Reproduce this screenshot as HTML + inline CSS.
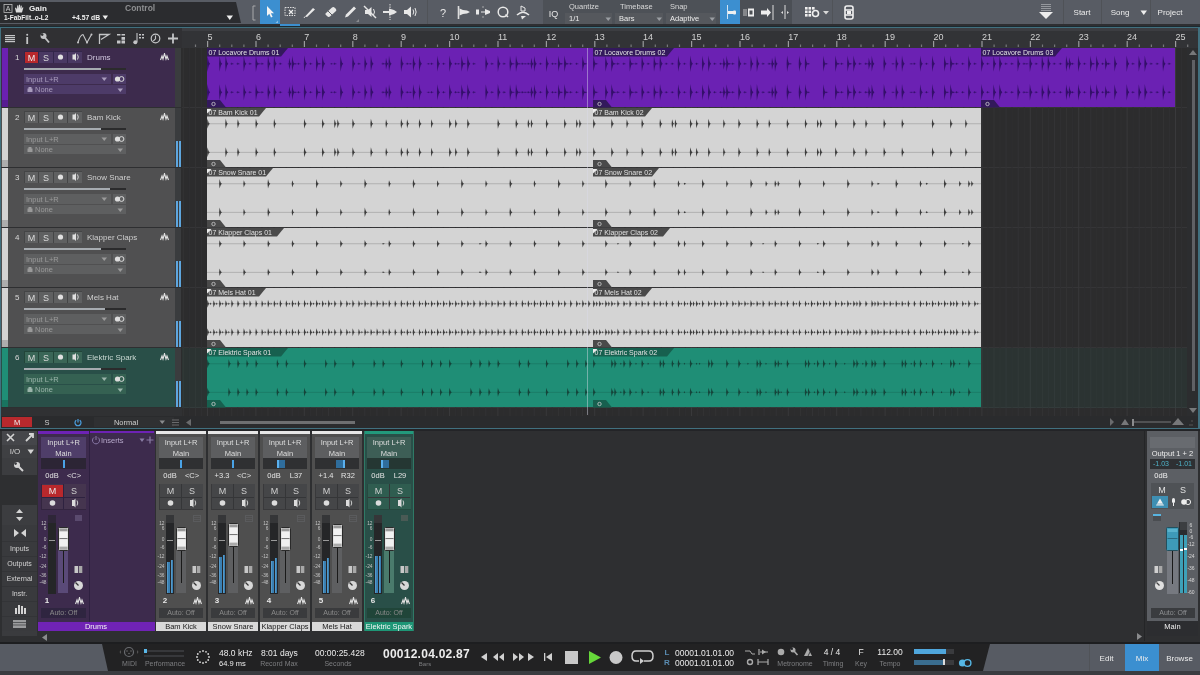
<!DOCTYPE html><html><head><meta charset="utf-8"><style>
html,body{margin:0;padding:0;}
body{width:1200px;height:675px;overflow:hidden;position:relative;background:#2a2b2d;font-family:"Liberation Sans",sans-serif;}
#r>div{position:absolute;box-sizing:border-box;}
</style></head><body><div id="r" style="position:absolute;left:0;top:0;width:1200px;height:675px;overflow:hidden;will-change:transform;">
<div style="left:0px;top:0px;width:1200px;height:25px;background:#585c64;"></div>
<div style="left:543px;top:0px;width:177px;height:24px;background:#4d5157;"></div>
<div style="left:740px;top:0px;width:52px;height:24px;background:#4b4f55;"></div>
<svg style="position:absolute;left:0px;top:0px" width="245" height="25" viewBox="0 0 245 25"><polygon points="0,2 236,2 241,23 0,23" fill="#2b2c2f"/></svg>
<div style="left:0px;top:24px;width:1200px;height:2px;background:#2e2f32;"></div>
<div style="left:0px;top:26px;width:1200px;height:1px;background:#1d2a30;"></div>
<svg style="position:absolute;left:3px;top:4px" width="24" height="10" viewBox="0 0 24 10"><rect x="1" y="0.5" width="8" height="8" fill="none" stroke="#bbb" stroke-width="0.8"/><text x="5" y="7.3" font-size="7" fill="#ccc" text-anchor="middle" font-family="Liberation Sans">A</text><path d="M13,8.5 L12,4 L13,3.5 L14,5.5 L14.2,1.5 L15.2,1.3 L15.6,4.5 L16,0.8 L17,0.8 L17.2,4.5 L17.8,1.5 L18.8,1.8 L18.6,5 L19.6,3.2 L20.4,3.6 L19,8.5 Z" fill="#ddd"/></svg>
<div style="left:29px;top:0.5px;height:16px;line-height:16px;font-size:8px;color:#f2f2f2;font-weight:bold;white-space:nowrap;">Gain</div>
<div style="left:125px;top:0.0px;height:17.0px;line-height:17.0px;font-size:8.5px;color:#8d8e90;font-weight:bold;white-space:nowrap;">Control</div>
<div style="left:4px;top:11.0px;height:13.0px;line-height:13.0px;font-size:6.5px;color:#f0f0f0;font-weight:bold;white-space:nowrap;">1-FabFilt..o-L2</div>
<div style="left:72px;top:10.7px;height:13.6px;line-height:13.6px;font-size:6.8px;color:#f0f0f0;font-weight:bold;white-space:nowrap;">+4.57 dB</div>
<svg style="position:absolute;left:101.5px;top:15px" width="7" height="6" viewBox="0 0 7 6"><polygon points="0.5,0.5 6,0.5 3.25,4.5" fill="#eee"/></svg>
<svg style="position:absolute;left:226px;top:15px" width="8" height="6" viewBox="0 0 8 6"><polygon points="0.5,0.5 7,0.5 3.75,5" fill="#eee"/></svg>
<svg style="position:absolute;left:251px;top:5px" width="6" height="16" viewBox="0 0 6 16"><path d="M4.5,1 L2,1 L2,15 L4.5,15" fill="none" stroke="#a8a9ab" stroke-width="1"/></svg>
<div style="left:260px;top:0px;width:20px;height:24px;background:#3c8fd0;"></div>
<svg style="position:absolute;left:260px;top:0px" width="20" height="24" viewBox="0 0 20 24"><path d="M7,6 L7,16 L9.3,13.8 L11,17.5 L12.6,16.8 L10.9,13.2 L14,13.2 Z" fill="#f4f4f4"/><polygon points="18,20.5 18,23 15.5,23" fill="#8cc0e8"/></svg>
<div style="left:280px;top:24px;width:20px;height:2px;background:#3c8fd0;"></div>
<svg style="position:absolute;left:280px;top:0px" width="20" height="24" viewBox="0 0 20 24"><rect x="5" y="7.5" width="10" height="8" fill="none" stroke="#ddd" stroke-width="1" stroke-dasharray="1.5,1"/><path d="M9,10 L13,14 M13,10 L9,14" stroke="#eee" stroke-width="1.2"/></svg>
<svg style="position:absolute;left:300px;top:0px" width="20" height="24" viewBox="0 0 20 24"><path d="M5,16.5 L13,8 L15,9.5 L7,17 Z" fill="#e8e8e8"/><path d="M5,16.5 L4,18" stroke="#ddd" stroke-width="1"/></svg>
<svg style="position:absolute;left:320px;top:0px" width="20" height="24" viewBox="0 0 20 24"><path d="M6,13 L12,7.5 Q13.5,6.5 15,8 L16,9 Q17,10.5 15.5,11.5 L10,16.5 Q8.5,17.5 7,16 L5.5,14.5 Q5,13.8 6,13 Z" fill="#e6e6e6"/><path d="M8,11 L12,15" stroke="#5a5d62" stroke-width="1"/></svg>
<svg style="position:absolute;left:340px;top:0px" width="20" height="24" viewBox="0 0 20 24"><path d="M5,17.5 L6,14.5 L14,6.5 L16,8.5 L8,16.5 Z" fill="#e8e8e8"/><polygon points="19,19 19,22 16,22" fill="#8a8c90"/></svg>
<svg style="position:absolute;left:360px;top:0px" width="20" height="24" viewBox="0 0 20 24"><path d="M5,10 L8,10 L11.5,7 L11.5,17 L8,14 L5,14 Z" fill="#e6e6e6"/><path d="M4,6 L16,18" stroke="#e6e6e6" stroke-width="1.4"/><path d="M13.5,9 Q15.5,12 13.5,15" stroke="#e6e6e6" fill="none" stroke-width="1"/></svg>
<svg style="position:absolute;left:380px;top:0px" width="20" height="24" viewBox="0 0 20 24"><path d="M10,4 L10,20" stroke="#ddd" stroke-width="1" stroke-dasharray="1.5,1"/><path d="M3,11 L9,11 L9,8.5 L14,10 L17,12 L14,14 L9,15.5 L9,13 L3,13 Z" fill="#e6e6e6"/></svg>
<svg style="position:absolute;left:400px;top:0px" width="20" height="24" viewBox="0 0 20 24"><path d="M4,10 L7,10 L11,6.5 L11,17.5 L7,14 L4,14 Z" fill="#e8e8e8"/><path d="M13,9.5 Q14.5,12 13,14.5 M15,8 Q17.3,12 15,16" stroke="#e8e8e8" fill="none" stroke-width="1"/></svg>
<div style="left:427px;top:0px;width:1px;height:24px;background:#505358;"></div>
<div style="left:437.0px;width:12px;text-align:center;top:2px;height:22px;line-height:22px;font-size:11px;color:#e8e8e8;font-weight:normal;white-space:nowrap;">?</div>
<svg style="position:absolute;left:453px;top:0px" width="20" height="24" viewBox="0 0 20 24"><path d="M5.5,6 L5.5,19" stroke="#ddd" stroke-width="1.6"/><path d="M6.5,8.5 L10,10 L14,10.5 L17,12 L14,13.5 L10,14 L6.5,15.5 Z" fill="#e8e8e8"/></svg>
<svg style="position:absolute;left:473px;top:0px" width="20" height="24" viewBox="0 0 20 24"><path d="M3,9.5 L3,14.5 L6,14.5 L6,9.5 Z M8,11.5 L12,11.5 L12,12.5 L8,12.5 Z M12,9 L17,11 L17,13 L12,15 Z" fill="#e8e8e8"/><path d="M10,6 L10,8 M10,16 L10,18" stroke="#bbb" stroke-width="0.8"/></svg>
<svg style="position:absolute;left:493px;top:0px" width="20" height="24" viewBox="0 0 20 24"><circle cx="10" cy="12" r="4.8" fill="none" stroke="#e8e8e8" stroke-width="1.5"/><path d="M12.5,14.5 L15,17" stroke="#e8e8e8" stroke-width="1.5"/></svg>
<svg style="position:absolute;left:513px;top:0px" width="20" height="24" viewBox="0 0 20 24"><path d="M8,6 L8,11 L12,11 L12,8 Z" fill="none" stroke="#e8e8e8" stroke-width="1"/><path d="M4,15 Q10,9.5 16,15" stroke="#e8e8e8" fill="none" stroke-width="1.6"/><polygon points="8,16 13,16 9,19.5" fill="#e8e8e8"/></svg>
<div style="left:543.5px;width:20px;text-align:center;top:4.5px;height:18px;line-height:18px;font-size:9px;color:#e6e6e6;font-weight:normal;white-space:nowrap;">IQ</div>
<div style="left:569px;top:-1.5px;height:15.0px;line-height:15.0px;font-size:7.5px;color:#d8d8d8;font-weight:normal;white-space:nowrap;">Quantize</div>
<div style="left:565px;top:12.5px;width:47px;height:11px;background:#55585d;"></div>
<div style="left:569px;top:11.0px;height:15.0px;line-height:15.0px;font-size:7.5px;color:#ececec;font-weight:normal;white-space:nowrap;">1/1</div>
<svg style="position:absolute;left:605px;top:16.5px" width="7" height="5" viewBox="0 0 7 5"><polygon points="0.5,0.5 6,0.5 3.25,4" fill="#9a9da2"/></svg>
<div style="left:620px;top:-1.5px;height:15.0px;line-height:15.0px;font-size:7.5px;color:#d8d8d8;font-weight:normal;white-space:nowrap;">Timebase</div>
<div style="left:615px;top:12.5px;width:48px;height:11px;background:#55585d;"></div>
<div style="left:619px;top:11.0px;height:15.0px;line-height:15.0px;font-size:7.5px;color:#ececec;font-weight:normal;white-space:nowrap;">Bars</div>
<svg style="position:absolute;left:656px;top:16.5px" width="7" height="5" viewBox="0 0 7 5"><polygon points="0.5,0.5 6,0.5 3.25,4" fill="#9a9da2"/></svg>
<div style="left:670px;top:-1.5px;height:15.0px;line-height:15.0px;font-size:7.5px;color:#d8d8d8;font-weight:normal;white-space:nowrap;">Snap</div>
<div style="left:666px;top:12.5px;width:50px;height:11px;background:#55585d;"></div>
<div style="left:670px;top:11.0px;height:15.0px;line-height:15.0px;font-size:7.5px;color:#ececec;font-weight:normal;white-space:nowrap;">Adaptive</div>
<svg style="position:absolute;left:709px;top:16.5px" width="7" height="5" viewBox="0 0 7 5"><polygon points="0.5,0.5 6,0.5 3.25,4" fill="#9a9da2"/></svg>
<div style="left:720px;top:0px;width:20px;height:24px;background:#3c8fd0;"></div>
<svg style="position:absolute;left:720px;top:0px" width="20" height="24" viewBox="0 0 20 24"><path d="M7.5,5 L7.5,19" stroke="#cfe2f2" stroke-width="1"/><rect x="8" y="11" width="6" height="3" fill="#f0f0f0"/><rect x="13" y="10.5" width="3" height="4" rx="1" fill="#f0f0f0"/></svg>
<svg style="position:absolute;left:740px;top:0px" width="20" height="24" viewBox="0 0 20 24"><path d="M4,9 L4,16 M6,9 L6,16" stroke="#ccc" stroke-width="0.9"/><rect x="8" y="8.5" width="6" height="8" fill="#eee"/><rect x="9.5" y="10.5" width="3" height="4" fill="#4d5055"/></svg>
<svg style="position:absolute;left:758px;top:0px" width="20" height="24" viewBox="0 0 20 24"><path d="M3,10.5 L9,10.5 L9,8 L13,12.5 L9,17 L9,14.5 L3,14.5 Z" fill="#eee"/><path d="M15,5 L15,20" stroke="#ddd" stroke-width="1"/></svg>
<svg style="position:absolute;left:776px;top:0px" width="18" height="24" viewBox="0 0 18 24"><path d="M9,5 L9,19" stroke="#ddd" stroke-width="1"/><polygon points="7,11 7,14 5,12.5" fill="#ddd"/><polygon points="11,11 11,14 13,12.5" fill="#ddd"/></svg>
<svg style="position:absolute;left:800px;top:0px" width="34" height="24" viewBox="0 0 34 24"><g fill="#f0f0f0"><rect x="5" y="7" width="2.6" height="2.6"/><rect x="8.5" y="7" width="2.6" height="2.6"/><rect x="12" y="7" width="2.6" height="2.6"/><rect x="5" y="10.5" width="2.6" height="2.6"/><rect x="8.5" y="10.5" width="2.6" height="2.6"/><rect x="5" y="14" width="2.6" height="2.6"/><rect x="8.5" y="14" width="2.6" height="2.6"/></g><circle cx="15.5" cy="13.5" r="3" fill="none" stroke="#f0f0f0" stroke-width="1.6"/><polygon points="23,11 29,11 26,14.5" fill="#d8d8d8"/></svg>
<div style="left:832px;top:0px;width:1px;height:24px;background:#505358;"></div>
<svg style="position:absolute;left:840px;top:0px" width="18" height="24" viewBox="0 0 18 24"><rect x="5" y="6" width="8" height="13" rx="2" fill="none" stroke="#f0f0f0" stroke-width="1.6"/><path d="M5,10 L13,10 M5,15 L13,15" stroke="#f0f0f0" stroke-width="1.4"/><rect x="7" y="11" width="4" height="3" fill="#f0f0f0"/></svg>
<svg style="position:absolute;left:1036px;top:0px" width="20" height="24" viewBox="0 0 20 24"><path d="M5,4.5 L15,4.5 M5,6.5 L15,6.5 M5,8.5 L15,8.5 M5,10.5 L15,10.5" stroke="#b0b2b6" stroke-width="0.7"/><polygon points="3,12 17,12 10,19" fill="#ececec"/></svg>
<div style="left:1063px;top:0px;width:1px;height:24px;background:#4f5257;"></div>
<div style="left:1062.0px;width:40px;text-align:center;top:4.5px;height:16px;line-height:16px;font-size:8px;color:#ececec;font-weight:normal;white-space:nowrap;">Start</div>
<div style="left:1101px;top:0px;width:1px;height:24px;background:#4f5257;"></div>
<div style="left:1100.0px;width:40px;text-align:center;top:4.5px;height:16px;line-height:16px;font-size:8px;color:#ececec;font-weight:normal;white-space:nowrap;">Song</div>
<svg style="position:absolute;left:1140px;top:10px" width="8" height="6" viewBox="0 0 8 6"><polygon points="0.5,0.5 7,0.5 3.75,5" fill="#eee"/></svg>
<div style="left:1150px;top:0px;width:1px;height:24px;background:#4f5257;"></div>
<div style="left:1150.0px;width:40px;text-align:center;top:4.5px;height:16px;line-height:16px;font-size:8px;color:#ececec;font-weight:normal;white-space:nowrap;">Project</div>
<div style="left:0px;top:27px;width:1200px;height:402px;background:#41707f;"></div>
<div style="left:1px;top:28px;width:1197px;height:400px;background:#2c2c2d;"></div>
<div style="left:1px;top:28px;width:181px;height:20px;background:#303033;"></div>
<div style="left:182px;top:28px;width:1016px;height:20px;background:#323336;"></div>
<div style="left:182px;top:28px;width:1016px;height:3px;background:#3c3d41;"></div>
<svg style="position:absolute;left:1px;top:28px" width="181" height="20" viewBox="0 0 181 20"><g fill="#c4c5c7"><rect x="4" y="7" width="10" height="1.2"/><rect x="4" y="9" width="10" height="1.2"/><rect x="4" y="11" width="10" height="1.2"/><rect x="4" y="13" width="10" height="1.2"/></g><rect x="25.3" y="9" width="1.8" height="7" fill="#c4c5c7"/><circle cx="26.2" cy="6.8" r="1" fill="#c4c5c7"/><circle cx="42.5" cy="8" r="3" fill="#c4c5c7"/><circle cx="41.2" cy="6.6" r="1.3" fill="#2f3032"/><path d="M43,8.5 L48,14.5" stroke="#c4c5c7" stroke-width="1.9"/><path d="M77,14.5 Q79,7 82,6.5 L86,14.5 L90.5,6.5" stroke="#c4c5c7" stroke-width="1.1" fill="none"/><circle cx="77" cy="14.5" r="1" fill="#c4c5c7"/><circle cx="86" cy="14.5" r="1" fill="#c4c5c7"/><circle cx="90.5" cy="6.5" r="1" fill="#c4c5c7"/><path d="M98.5,16 L98.5,6.5 L108,6.5 L100,11.5" stroke="#c4c5c7" stroke-width="1.3" fill="none"/><g fill="#c4c5c7"><rect x="116" y="6" width="3.5" height="1.5"/><rect x="120.5" y="6" width="3.5" height="1.5"/><rect x="120.5" y="9" width="3.5" height="2.8"/><rect x="116" y="12.5" width="3.5" height="3"/><rect x="120.5" y="12.5" width="3.5" height="3"/></g><path d="M136,5 L136,14" stroke="#c4c5c7" stroke-width="1.1"/><circle cx="134.3" cy="14.2" r="2" fill="#c4c5c7"/><g fill="#c4c5c7"><rect x="138" y="6" width="2" height="1.5"/><rect x="141" y="6" width="2" height="1.5"/><rect x="138" y="9" width="2" height="1.5"/><rect x="141" y="9" width="2" height="1.5"/></g><circle cx="154.5" cy="10.5" r="4.3" fill="none" stroke="#c4c5c7" stroke-width="1.2"/><path d="M154.5,7.5 L154.5,10.8 L152.3,13" stroke="#c4c5c7" stroke-width="1.1" fill="none"/><path d="M167,10.5 L177,10.5 M172,5.5 L172,15.5" stroke="#c4c5c7" stroke-width="1.8"/></svg>
<div style="left:1px;top:48px;width:174px;height:60px;background:#3d2b4d;"></div>
<div style="left:2px;top:48px;width:6px;height:60px;background:#6b21b3;"></div>
<div style="left:2px;top:100px;width:6px;height:8px;background:rgba(0,0,0,0.18);"></div>
<div style="left:175px;top:48px;width:6px;height:60px;background:#3a3c3e;"></div>
<div style="left:1px;top:107px;width:180px;height:1px;background:#2e2f31;"></div>
<div style="left:182px;top:107px;width:1005px;height:1px;background:#353537;"></div>
<div style="left:15px;top:49.5px;height:16px;line-height:16px;font-size:8px;color:#d8d8d8;font-weight:normal;white-space:nowrap;">1</div>
<div style="left:24px;top:51px;width:58px;height:12px;background:#33264a;"></div>
<div style="left:24.5px;top:51.5px;width:13.8px;height:11px;background:#b8282c;"></div>
<div style="left:39.0px;top:51.5px;width:13.8px;height:11px;background:#4a3963;"></div>
<div style="left:53.5px;top:51.5px;width:13.8px;height:11px;background:#4a3963;"></div>
<div style="left:68.0px;top:51.5px;width:13.8px;height:11px;background:#4a3963;"></div>
<div style="left:24.5px;width:14px;text-align:center;top:48.5px;height:18px;line-height:18px;font-size:9px;color:#f0f0f0;font-weight:normal;white-space:nowrap;">M</div>
<div style="left:39.0px;width:14px;text-align:center;top:48.5px;height:18px;line-height:18px;font-size:9px;color:#dcdcdc;font-weight:normal;white-space:nowrap;">S</div>
<svg style="position:absolute;left:53px;top:51px" width="30" height="12" viewBox="0 0 30 12"><circle cx="7.5" cy="6" r="2.6" fill="#e0e0e0"/><path d="M19.5,3.5 L21.5,3.5 L23,2 L23,10 L21.5,8.5 L19.5,8.5 Z" fill="#e0e0e0"/><path d="M24.5,3.5 Q26,6 24.5,8.5" stroke="#e0e0e0" fill="none" stroke-width="0.9"/></svg>
<div style="left:87px;top:49.5px;height:16px;line-height:16px;font-size:8px;color:#cfc6dc;font-weight:normal;white-space:nowrap;">Drums</div>
<svg style="position:absolute;left:160px;top:53px" width="9" height="8" viewBox="0 0 9 8"><path d="M0.5,7 L2,3 L3,6 L4.5,0.5 L6,6 L7,3 L8.5,7" fill="none" stroke="#e0e0e0" stroke-width="1.1"/></svg>
<div style="left:24px;top:68px;width:102px;height:2px;background:#2b2b2c;"></div>
<div style="left:24px;top:68px;width:77px;height:2px;background:#a6abb0;"></div>
<div style="left:24px;top:74px;width:87px;height:10px;background:#4d3b68;"></div>
<div style="left:26px;top:71.5px;height:15.0px;line-height:15.0px;font-size:7.5px;color:#a99cbd;font-weight:normal;white-space:nowrap;">Input L+R</div>
<svg style="position:absolute;left:101px;top:77px" width="7" height="5" viewBox="0 0 7 5"><polygon points="0.5,0.5 6,0.5 3.25,4" fill="#a99cbd"/></svg>
<div style="left:113px;top:74px;width:13px;height:10px;background:#4d3b68;"></div>
<svg style="position:absolute;left:114px;top:75px" width="11" height="8" viewBox="0 0 11 8"><circle cx="3.5" cy="4" r="2.6" fill="#ddd"/><circle cx="7.5" cy="4" r="2.4" fill="none" stroke="#ddd" stroke-width="1"/></svg>
<div style="left:24px;top:85px;width:102px;height:9px;background:#4d3b68;"></div>
<svg style="position:absolute;left:27px;top:87px" width="6" height="5" viewBox="0 0 6 5"><rect x="0.5" y="1.5" width="5" height="3.5" fill="#a99cbd"/><rect x="1.5" y="0" width="3" height="2" fill="#a99cbd"/></svg>
<div style="left:35px;top:82.0px;height:15.0px;line-height:15.0px;font-size:7.5px;color:#a99cbd;font-weight:normal;white-space:nowrap;">None</div>
<svg style="position:absolute;left:117px;top:87.5px" width="7" height="5" viewBox="0 0 7 5"><polygon points="0.5,0.5 6,0.5 3.25,4" fill="#a99cbd"/></svg>
<div style="left:1px;top:108px;width:174px;height:60px;background:#505051;"></div>
<div style="left:2px;top:108px;width:6px;height:60px;background:#d4d4d4;"></div>
<div style="left:2px;top:160px;width:6px;height:8px;background:rgba(0,0,0,0.18);"></div>
<div style="left:175px;top:108px;width:6px;height:60px;background:#3a3c3e;"></div>
<div style="left:1px;top:167px;width:180px;height:1px;background:#2e2f31;"></div>
<div style="left:182px;top:167px;width:1005px;height:1px;background:#353537;"></div>
<div style="left:176px;top:141px;width:2px;height:26px;background:#5ea6de;"></div>
<div style="left:179px;top:141px;width:2px;height:26px;background:#5ea6de;"></div>
<div style="left:15px;top:109.5px;height:16px;line-height:16px;font-size:8px;color:#d8d8d8;font-weight:normal;white-space:nowrap;">2</div>
<div style="left:24px;top:111px;width:58px;height:12px;background:#444546;"></div>
<div style="left:24.5px;top:111.5px;width:13.8px;height:11px;background:#5f6061;"></div>
<div style="left:39.0px;top:111.5px;width:13.8px;height:11px;background:#5f6061;"></div>
<div style="left:53.5px;top:111.5px;width:13.8px;height:11px;background:#5f6061;"></div>
<div style="left:68.0px;top:111.5px;width:13.8px;height:11px;background:#5f6061;"></div>
<div style="left:24.5px;width:14px;text-align:center;top:108.5px;height:18px;line-height:18px;font-size:9px;color:#dcdcdc;font-weight:normal;white-space:nowrap;">M</div>
<div style="left:39.0px;width:14px;text-align:center;top:108.5px;height:18px;line-height:18px;font-size:9px;color:#dcdcdc;font-weight:normal;white-space:nowrap;">S</div>
<svg style="position:absolute;left:53px;top:111px" width="30" height="12" viewBox="0 0 30 12"><circle cx="7.5" cy="6" r="2.6" fill="#e0e0e0"/><path d="M19.5,3.5 L21.5,3.5 L23,2 L23,10 L21.5,8.5 L19.5,8.5 Z" fill="#e0e0e0"/><path d="M24.5,3.5 Q26,6 24.5,8.5" stroke="#e0e0e0" fill="none" stroke-width="0.9"/></svg>
<div style="left:87px;top:109.5px;height:16px;line-height:16px;font-size:8px;color:#cfcfcf;font-weight:normal;white-space:nowrap;">Bam Kick</div>
<svg style="position:absolute;left:160px;top:113px" width="9" height="8" viewBox="0 0 9 8"><path d="M0.5,7 L2,3 L3,6 L4.5,0.5 L6,6 L7,3 L8.5,7" fill="none" stroke="#e0e0e0" stroke-width="1.1"/></svg>
<div style="left:24px;top:128px;width:102px;height:2px;background:#2b2b2c;"></div>
<div style="left:24px;top:128px;width:77px;height:2px;background:#a6abb0;"></div>
<div style="left:24px;top:134px;width:87px;height:10px;background:#5e5f60;"></div>
<div style="left:26px;top:131.5px;height:15.0px;line-height:15.0px;font-size:7.5px;color:#9a9a9a;font-weight:normal;white-space:nowrap;">Input L+R</div>
<svg style="position:absolute;left:101px;top:137px" width="7" height="5" viewBox="0 0 7 5"><polygon points="0.5,0.5 6,0.5 3.25,4" fill="#9a9a9a"/></svg>
<div style="left:113px;top:134px;width:13px;height:10px;background:#5e5f60;"></div>
<svg style="position:absolute;left:114px;top:135px" width="11" height="8" viewBox="0 0 11 8"><circle cx="3.5" cy="4" r="2.6" fill="#ddd"/><circle cx="7.5" cy="4" r="2.4" fill="none" stroke="#ddd" stroke-width="1"/></svg>
<div style="left:24px;top:145px;width:102px;height:9px;background:#5e5f60;"></div>
<svg style="position:absolute;left:27px;top:147px" width="6" height="5" viewBox="0 0 6 5"><rect x="0.5" y="1.5" width="5" height="3.5" fill="#9a9a9a"/><rect x="1.5" y="0" width="3" height="2" fill="#9a9a9a"/></svg>
<div style="left:35px;top:142.0px;height:15.0px;line-height:15.0px;font-size:7.5px;color:#9a9a9a;font-weight:normal;white-space:nowrap;">None</div>
<svg style="position:absolute;left:117px;top:147.5px" width="7" height="5" viewBox="0 0 7 5"><polygon points="0.5,0.5 6,0.5 3.25,4" fill="#9a9a9a"/></svg>
<div style="left:1px;top:168px;width:174px;height:60px;background:#505051;"></div>
<div style="left:2px;top:168px;width:6px;height:60px;background:#d4d4d4;"></div>
<div style="left:2px;top:220px;width:6px;height:8px;background:rgba(0,0,0,0.18);"></div>
<div style="left:175px;top:168px;width:6px;height:60px;background:#3a3c3e;"></div>
<div style="left:1px;top:227px;width:180px;height:1px;background:#2e2f31;"></div>
<div style="left:182px;top:227px;width:1005px;height:1px;background:#353537;"></div>
<div style="left:176px;top:201px;width:2px;height:26px;background:#5ea6de;"></div>
<div style="left:179px;top:201px;width:2px;height:26px;background:#5ea6de;"></div>
<div style="left:15px;top:169.5px;height:16px;line-height:16px;font-size:8px;color:#d8d8d8;font-weight:normal;white-space:nowrap;">3</div>
<div style="left:24px;top:171px;width:58px;height:12px;background:#444546;"></div>
<div style="left:24.5px;top:171.5px;width:13.8px;height:11px;background:#5f6061;"></div>
<div style="left:39.0px;top:171.5px;width:13.8px;height:11px;background:#5f6061;"></div>
<div style="left:53.5px;top:171.5px;width:13.8px;height:11px;background:#5f6061;"></div>
<div style="left:68.0px;top:171.5px;width:13.8px;height:11px;background:#5f6061;"></div>
<div style="left:24.5px;width:14px;text-align:center;top:168.5px;height:18px;line-height:18px;font-size:9px;color:#dcdcdc;font-weight:normal;white-space:nowrap;">M</div>
<div style="left:39.0px;width:14px;text-align:center;top:168.5px;height:18px;line-height:18px;font-size:9px;color:#dcdcdc;font-weight:normal;white-space:nowrap;">S</div>
<svg style="position:absolute;left:53px;top:171px" width="30" height="12" viewBox="0 0 30 12"><circle cx="7.5" cy="6" r="2.6" fill="#e0e0e0"/><path d="M19.5,3.5 L21.5,3.5 L23,2 L23,10 L21.5,8.5 L19.5,8.5 Z" fill="#e0e0e0"/><path d="M24.5,3.5 Q26,6 24.5,8.5" stroke="#e0e0e0" fill="none" stroke-width="0.9"/></svg>
<div style="left:87px;top:169.5px;height:16px;line-height:16px;font-size:8px;color:#cfcfcf;font-weight:normal;white-space:nowrap;">Snow Snare</div>
<svg style="position:absolute;left:160px;top:173px" width="9" height="8" viewBox="0 0 9 8"><path d="M0.5,7 L2,3 L3,6 L4.5,0.5 L6,6 L7,3 L8.5,7" fill="none" stroke="#e0e0e0" stroke-width="1.1"/></svg>
<div style="left:24px;top:188px;width:102px;height:2px;background:#2b2b2c;"></div>
<div style="left:24px;top:188px;width:86px;height:2px;background:#a6abb0;"></div>
<div style="left:24px;top:194px;width:87px;height:10px;background:#5e5f60;"></div>
<div style="left:26px;top:191.5px;height:15.0px;line-height:15.0px;font-size:7.5px;color:#9a9a9a;font-weight:normal;white-space:nowrap;">Input L+R</div>
<svg style="position:absolute;left:101px;top:197px" width="7" height="5" viewBox="0 0 7 5"><polygon points="0.5,0.5 6,0.5 3.25,4" fill="#9a9a9a"/></svg>
<div style="left:113px;top:194px;width:13px;height:10px;background:#5e5f60;"></div>
<svg style="position:absolute;left:114px;top:195px" width="11" height="8" viewBox="0 0 11 8"><circle cx="3.5" cy="4" r="2.6" fill="#ddd"/><circle cx="7.5" cy="4" r="2.4" fill="none" stroke="#ddd" stroke-width="1"/></svg>
<div style="left:24px;top:205px;width:102px;height:9px;background:#5e5f60;"></div>
<svg style="position:absolute;left:27px;top:207px" width="6" height="5" viewBox="0 0 6 5"><rect x="0.5" y="1.5" width="5" height="3.5" fill="#9a9a9a"/><rect x="1.5" y="0" width="3" height="2" fill="#9a9a9a"/></svg>
<div style="left:35px;top:202.0px;height:15.0px;line-height:15.0px;font-size:7.5px;color:#9a9a9a;font-weight:normal;white-space:nowrap;">None</div>
<svg style="position:absolute;left:117px;top:207.5px" width="7" height="5" viewBox="0 0 7 5"><polygon points="0.5,0.5 6,0.5 3.25,4" fill="#9a9a9a"/></svg>
<div style="left:1px;top:228px;width:174px;height:60px;background:#505051;"></div>
<div style="left:2px;top:228px;width:6px;height:60px;background:#d4d4d4;"></div>
<div style="left:2px;top:280px;width:6px;height:8px;background:rgba(0,0,0,0.18);"></div>
<div style="left:175px;top:228px;width:6px;height:60px;background:#3a3c3e;"></div>
<div style="left:1px;top:287px;width:180px;height:1px;background:#2e2f31;"></div>
<div style="left:182px;top:287px;width:1005px;height:1px;background:#353537;"></div>
<div style="left:176px;top:261px;width:2px;height:26px;background:#5ea6de;"></div>
<div style="left:179px;top:261px;width:2px;height:26px;background:#5ea6de;"></div>
<div style="left:15px;top:229.5px;height:16px;line-height:16px;font-size:8px;color:#d8d8d8;font-weight:normal;white-space:nowrap;">4</div>
<div style="left:24px;top:231px;width:58px;height:12px;background:#444546;"></div>
<div style="left:24.5px;top:231.5px;width:13.8px;height:11px;background:#5f6061;"></div>
<div style="left:39.0px;top:231.5px;width:13.8px;height:11px;background:#5f6061;"></div>
<div style="left:53.5px;top:231.5px;width:13.8px;height:11px;background:#5f6061;"></div>
<div style="left:68.0px;top:231.5px;width:13.8px;height:11px;background:#5f6061;"></div>
<div style="left:24.5px;width:14px;text-align:center;top:228.5px;height:18px;line-height:18px;font-size:9px;color:#dcdcdc;font-weight:normal;white-space:nowrap;">M</div>
<div style="left:39.0px;width:14px;text-align:center;top:228.5px;height:18px;line-height:18px;font-size:9px;color:#dcdcdc;font-weight:normal;white-space:nowrap;">S</div>
<svg style="position:absolute;left:53px;top:231px" width="30" height="12" viewBox="0 0 30 12"><circle cx="7.5" cy="6" r="2.6" fill="#e0e0e0"/><path d="M19.5,3.5 L21.5,3.5 L23,2 L23,10 L21.5,8.5 L19.5,8.5 Z" fill="#e0e0e0"/><path d="M24.5,3.5 Q26,6 24.5,8.5" stroke="#e0e0e0" fill="none" stroke-width="0.9"/></svg>
<div style="left:87px;top:229.5px;height:16px;line-height:16px;font-size:8px;color:#cfcfcf;font-weight:normal;white-space:nowrap;">Klapper Claps</div>
<svg style="position:absolute;left:160px;top:233px" width="9" height="8" viewBox="0 0 9 8"><path d="M0.5,7 L2,3 L3,6 L4.5,0.5 L6,6 L7,3 L8.5,7" fill="none" stroke="#e0e0e0" stroke-width="1.1"/></svg>
<div style="left:24px;top:248px;width:102px;height:2px;background:#2b2b2c;"></div>
<div style="left:24px;top:248px;width:77px;height:2px;background:#a6abb0;"></div>
<div style="left:24px;top:254px;width:87px;height:10px;background:#5e5f60;"></div>
<div style="left:26px;top:251.5px;height:15.0px;line-height:15.0px;font-size:7.5px;color:#9a9a9a;font-weight:normal;white-space:nowrap;">Input L+R</div>
<svg style="position:absolute;left:101px;top:257px" width="7" height="5" viewBox="0 0 7 5"><polygon points="0.5,0.5 6,0.5 3.25,4" fill="#9a9a9a"/></svg>
<div style="left:113px;top:254px;width:13px;height:10px;background:#5e5f60;"></div>
<svg style="position:absolute;left:114px;top:255px" width="11" height="8" viewBox="0 0 11 8"><circle cx="3.5" cy="4" r="2.6" fill="#ddd"/><circle cx="7.5" cy="4" r="2.4" fill="none" stroke="#ddd" stroke-width="1"/></svg>
<div style="left:24px;top:265px;width:102px;height:9px;background:#5e5f60;"></div>
<svg style="position:absolute;left:27px;top:267px" width="6" height="5" viewBox="0 0 6 5"><rect x="0.5" y="1.5" width="5" height="3.5" fill="#9a9a9a"/><rect x="1.5" y="0" width="3" height="2" fill="#9a9a9a"/></svg>
<div style="left:35px;top:262.0px;height:15.0px;line-height:15.0px;font-size:7.5px;color:#9a9a9a;font-weight:normal;white-space:nowrap;">None</div>
<svg style="position:absolute;left:117px;top:267.5px" width="7" height="5" viewBox="0 0 7 5"><polygon points="0.5,0.5 6,0.5 3.25,4" fill="#9a9a9a"/></svg>
<div style="left:1px;top:288px;width:174px;height:60px;background:#505051;"></div>
<div style="left:2px;top:288px;width:6px;height:60px;background:#d4d4d4;"></div>
<div style="left:2px;top:340px;width:6px;height:8px;background:rgba(0,0,0,0.18);"></div>
<div style="left:175px;top:288px;width:6px;height:60px;background:#3a3c3e;"></div>
<div style="left:1px;top:347px;width:180px;height:1px;background:#2e2f31;"></div>
<div style="left:182px;top:347px;width:1005px;height:1px;background:#353537;"></div>
<div style="left:176px;top:321px;width:2px;height:26px;background:#5ea6de;"></div>
<div style="left:179px;top:321px;width:2px;height:26px;background:#5ea6de;"></div>
<div style="left:15px;top:289.5px;height:16px;line-height:16px;font-size:8px;color:#d8d8d8;font-weight:normal;white-space:nowrap;">5</div>
<div style="left:24px;top:291px;width:58px;height:12px;background:#444546;"></div>
<div style="left:24.5px;top:291.5px;width:13.8px;height:11px;background:#5f6061;"></div>
<div style="left:39.0px;top:291.5px;width:13.8px;height:11px;background:#5f6061;"></div>
<div style="left:53.5px;top:291.5px;width:13.8px;height:11px;background:#5f6061;"></div>
<div style="left:68.0px;top:291.5px;width:13.8px;height:11px;background:#5f6061;"></div>
<div style="left:24.5px;width:14px;text-align:center;top:288.5px;height:18px;line-height:18px;font-size:9px;color:#dcdcdc;font-weight:normal;white-space:nowrap;">M</div>
<div style="left:39.0px;width:14px;text-align:center;top:288.5px;height:18px;line-height:18px;font-size:9px;color:#dcdcdc;font-weight:normal;white-space:nowrap;">S</div>
<svg style="position:absolute;left:53px;top:291px" width="30" height="12" viewBox="0 0 30 12"><circle cx="7.5" cy="6" r="2.6" fill="#e0e0e0"/><path d="M19.5,3.5 L21.5,3.5 L23,2 L23,10 L21.5,8.5 L19.5,8.5 Z" fill="#e0e0e0"/><path d="M24.5,3.5 Q26,6 24.5,8.5" stroke="#e0e0e0" fill="none" stroke-width="0.9"/></svg>
<div style="left:87px;top:289.5px;height:16px;line-height:16px;font-size:8px;color:#cfcfcf;font-weight:normal;white-space:nowrap;">Mels Hat</div>
<svg style="position:absolute;left:160px;top:293px" width="9" height="8" viewBox="0 0 9 8"><path d="M0.5,7 L2,3 L3,6 L4.5,0.5 L6,6 L7,3 L8.5,7" fill="none" stroke="#e0e0e0" stroke-width="1.1"/></svg>
<div style="left:24px;top:308px;width:102px;height:2px;background:#2b2b2c;"></div>
<div style="left:24px;top:308px;width:81px;height:2px;background:#a6abb0;"></div>
<div style="left:24px;top:314px;width:87px;height:10px;background:#5e5f60;"></div>
<div style="left:26px;top:311.5px;height:15.0px;line-height:15.0px;font-size:7.5px;color:#9a9a9a;font-weight:normal;white-space:nowrap;">Input L+R</div>
<svg style="position:absolute;left:101px;top:317px" width="7" height="5" viewBox="0 0 7 5"><polygon points="0.5,0.5 6,0.5 3.25,4" fill="#9a9a9a"/></svg>
<div style="left:113px;top:314px;width:13px;height:10px;background:#5e5f60;"></div>
<svg style="position:absolute;left:114px;top:315px" width="11" height="8" viewBox="0 0 11 8"><circle cx="3.5" cy="4" r="2.6" fill="#ddd"/><circle cx="7.5" cy="4" r="2.4" fill="none" stroke="#ddd" stroke-width="1"/></svg>
<div style="left:24px;top:325px;width:102px;height:9px;background:#5e5f60;"></div>
<svg style="position:absolute;left:27px;top:327px" width="6" height="5" viewBox="0 0 6 5"><rect x="0.5" y="1.5" width="5" height="3.5" fill="#9a9a9a"/><rect x="1.5" y="0" width="3" height="2" fill="#9a9a9a"/></svg>
<div style="left:35px;top:322.0px;height:15.0px;line-height:15.0px;font-size:7.5px;color:#9a9a9a;font-weight:normal;white-space:nowrap;">None</div>
<svg style="position:absolute;left:117px;top:327.5px" width="7" height="5" viewBox="0 0 7 5"><polygon points="0.5,0.5 6,0.5 3.25,4" fill="#9a9a9a"/></svg>
<div style="left:1px;top:348px;width:174px;height:60px;background:#294f48;"></div>
<div style="left:2px;top:348px;width:6px;height:60px;background:#1f8e76;"></div>
<div style="left:2px;top:400px;width:6px;height:8px;background:rgba(0,0,0,0.18);"></div>
<div style="left:175px;top:348px;width:6px;height:60px;background:#3a3c3e;"></div>
<div style="left:1px;top:407px;width:180px;height:1px;background:#2e2f31;"></div>
<div style="left:182px;top:407px;width:1005px;height:1px;background:#353537;"></div>
<div style="left:176px;top:381px;width:2px;height:26px;background:#5ea6de;"></div>
<div style="left:179px;top:381px;width:2px;height:26px;background:#5ea6de;"></div>
<div style="left:15px;top:349.5px;height:16px;line-height:16px;font-size:8px;color:#d8d8d8;font-weight:normal;white-space:nowrap;">6</div>
<div style="left:24px;top:351px;width:58px;height:12px;background:#224539;"></div>
<div style="left:24.5px;top:351.5px;width:13.8px;height:11px;background:#3a6657;"></div>
<div style="left:39.0px;top:351.5px;width:13.8px;height:11px;background:#3a6657;"></div>
<div style="left:53.5px;top:351.5px;width:13.8px;height:11px;background:#3a6657;"></div>
<div style="left:68.0px;top:351.5px;width:13.8px;height:11px;background:#3a6657;"></div>
<div style="left:24.5px;width:14px;text-align:center;top:348.5px;height:18px;line-height:18px;font-size:9px;color:#dcdcdc;font-weight:normal;white-space:nowrap;">M</div>
<div style="left:39.0px;width:14px;text-align:center;top:348.5px;height:18px;line-height:18px;font-size:9px;color:#dcdcdc;font-weight:normal;white-space:nowrap;">S</div>
<svg style="position:absolute;left:53px;top:351px" width="30" height="12" viewBox="0 0 30 12"><circle cx="7.5" cy="6" r="2.6" fill="#e0e0e0"/><path d="M19.5,3.5 L21.5,3.5 L23,2 L23,10 L21.5,8.5 L19.5,8.5 Z" fill="#e0e0e0"/><path d="M24.5,3.5 Q26,6 24.5,8.5" stroke="#e0e0e0" fill="none" stroke-width="0.9"/></svg>
<div style="left:87px;top:349.5px;height:16px;line-height:16px;font-size:8px;color:#c9d8d2;font-weight:normal;white-space:nowrap;">Elektric Spark</div>
<svg style="position:absolute;left:160px;top:353px" width="9" height="8" viewBox="0 0 9 8"><path d="M0.5,7 L2,3 L3,6 L4.5,0.5 L6,6 L7,3 L8.5,7" fill="none" stroke="#e0e0e0" stroke-width="1.1"/></svg>
<div style="left:24px;top:368px;width:102px;height:2px;background:#2b2b2c;"></div>
<div style="left:24px;top:368px;width:77px;height:2px;background:#a6abb0;"></div>
<div style="left:24px;top:374px;width:87px;height:10px;background:#356152;"></div>
<div style="left:26px;top:371.5px;height:15.0px;line-height:15.0px;font-size:7.5px;color:#9bb5ab;font-weight:normal;white-space:nowrap;">Input L+R</div>
<svg style="position:absolute;left:101px;top:377px" width="7" height="5" viewBox="0 0 7 5"><polygon points="0.5,0.5 6,0.5 3.25,4" fill="#9bb5ab"/></svg>
<div style="left:113px;top:374px;width:13px;height:10px;background:#356152;"></div>
<svg style="position:absolute;left:114px;top:375px" width="11" height="8" viewBox="0 0 11 8"><circle cx="3.5" cy="4" r="2.6" fill="#ddd"/><circle cx="7.5" cy="4" r="2.4" fill="none" stroke="#ddd" stroke-width="1"/></svg>
<div style="left:24px;top:385px;width:102px;height:9px;background:#356152;"></div>
<svg style="position:absolute;left:27px;top:387px" width="6" height="5" viewBox="0 0 6 5"><rect x="0.5" y="1.5" width="5" height="3.5" fill="#9bb5ab"/><rect x="1.5" y="0" width="3" height="2" fill="#9bb5ab"/></svg>
<div style="left:35px;top:382.0px;height:15.0px;line-height:15.0px;font-size:7.5px;color:#9bb5ab;font-weight:normal;white-space:nowrap;">None</div>
<svg style="position:absolute;left:117px;top:387.5px" width="7" height="5" viewBox="0 0 7 5"><polygon points="0.5,0.5 6,0.5 3.25,4" fill="#9bb5ab"/></svg>
<svg style="position:absolute;left:182px;top:48px" width="1005" height="368" viewBox="0 0 1005 368"><rect x="0.8" y="0" width="1" height="368" fill="#333335"/><rect x="6.9" y="0" width="1" height="368" fill="#2f2f31"/><rect x="12.9" y="0" width="1" height="368" fill="#333335"/><rect x="19.0" y="0" width="1" height="368" fill="#2f2f31"/><rect x="25.0" y="0" width="1" height="368" fill="#39393b"/><rect x="31.1" y="0" width="1" height="368" fill="#2f2f31"/><rect x="37.1" y="0" width="1" height="368" fill="#333335"/><rect x="43.2" y="0" width="1" height="368" fill="#2f2f31"/><rect x="49.2" y="0" width="1" height="368" fill="#333335"/><rect x="55.2" y="0" width="1" height="368" fill="#2f2f31"/><rect x="61.3" y="0" width="1" height="368" fill="#333335"/><rect x="67.4" y="0" width="1" height="368" fill="#2f2f31"/><rect x="73.4" y="0" width="1" height="368" fill="#39393b"/><rect x="79.4" y="0" width="1" height="368" fill="#2f2f31"/><rect x="85.5" y="0" width="1" height="368" fill="#333335"/><rect x="91.6" y="0" width="1" height="368" fill="#2f2f31"/><rect x="97.6" y="0" width="1" height="368" fill="#333335"/><rect x="103.7" y="0" width="1" height="368" fill="#2f2f31"/><rect x="109.7" y="0" width="1" height="368" fill="#333335"/><rect x="115.8" y="0" width="1" height="368" fill="#2f2f31"/><rect x="121.8" y="0" width="1" height="368" fill="#39393b"/><rect x="127.9" y="0" width="1" height="368" fill="#2f2f31"/><rect x="133.9" y="0" width="1" height="368" fill="#333335"/><rect x="139.9" y="0" width="1" height="368" fill="#2f2f31"/><rect x="146.0" y="0" width="1" height="368" fill="#333335"/><rect x="152.1" y="0" width="1" height="368" fill="#2f2f31"/><rect x="158.1" y="0" width="1" height="368" fill="#333335"/><rect x="164.2" y="0" width="1" height="368" fill="#2f2f31"/><rect x="170.2" y="0" width="1" height="368" fill="#39393b"/><rect x="176.2" y="0" width="1" height="368" fill="#2f2f31"/><rect x="182.3" y="0" width="1" height="368" fill="#333335"/><rect x="188.3" y="0" width="1" height="368" fill="#2f2f31"/><rect x="194.4" y="0" width="1" height="368" fill="#333335"/><rect x="200.4" y="0" width="1" height="368" fill="#2f2f31"/><rect x="206.5" y="0" width="1" height="368" fill="#333335"/><rect x="212.6" y="0" width="1" height="368" fill="#2f2f31"/><rect x="218.6" y="0" width="1" height="368" fill="#39393b"/><rect x="224.7" y="0" width="1" height="368" fill="#2f2f31"/><rect x="230.7" y="0" width="1" height="368" fill="#333335"/><rect x="236.8" y="0" width="1" height="368" fill="#2f2f31"/><rect x="242.8" y="0" width="1" height="368" fill="#333335"/><rect x="248.8" y="0" width="1" height="368" fill="#2f2f31"/><rect x="254.9" y="0" width="1" height="368" fill="#333335"/><rect x="260.9" y="0" width="1" height="368" fill="#2f2f31"/><rect x="267.0" y="0" width="1" height="368" fill="#39393b"/><rect x="273.1" y="0" width="1" height="368" fill="#2f2f31"/><rect x="279.1" y="0" width="1" height="368" fill="#333335"/><rect x="285.2" y="0" width="1" height="368" fill="#2f2f31"/><rect x="291.2" y="0" width="1" height="368" fill="#333335"/><rect x="297.2" y="0" width="1" height="368" fill="#2f2f31"/><rect x="303.3" y="0" width="1" height="368" fill="#333335"/><rect x="309.4" y="0" width="1" height="368" fill="#2f2f31"/><rect x="315.4" y="0" width="1" height="368" fill="#39393b"/><rect x="321.4" y="0" width="1" height="368" fill="#2f2f31"/><rect x="327.5" y="0" width="1" height="368" fill="#333335"/><rect x="333.5" y="0" width="1" height="368" fill="#2f2f31"/><rect x="339.6" y="0" width="1" height="368" fill="#333335"/><rect x="345.6" y="0" width="1" height="368" fill="#2f2f31"/><rect x="351.7" y="0" width="1" height="368" fill="#333335"/><rect x="357.8" y="0" width="1" height="368" fill="#2f2f31"/><rect x="363.8" y="0" width="1" height="368" fill="#39393b"/><rect x="369.8" y="0" width="1" height="368" fill="#2f2f31"/><rect x="375.9" y="0" width="1" height="368" fill="#333335"/><rect x="381.9" y="0" width="1" height="368" fill="#2f2f31"/><rect x="388.0" y="0" width="1" height="368" fill="#333335"/><rect x="394.0" y="0" width="1" height="368" fill="#2f2f31"/><rect x="400.1" y="0" width="1" height="368" fill="#333335"/><rect x="406.1" y="0" width="1" height="368" fill="#2f2f31"/><rect x="412.2" y="0" width="1" height="368" fill="#39393b"/><rect x="418.2" y="0" width="1" height="368" fill="#2f2f31"/><rect x="424.3" y="0" width="1" height="368" fill="#333335"/><rect x="430.3" y="0" width="1" height="368" fill="#2f2f31"/><rect x="436.4" y="0" width="1" height="368" fill="#333335"/><rect x="442.4" y="0" width="1" height="368" fill="#2f2f31"/><rect x="448.5" y="0" width="1" height="368" fill="#333335"/><rect x="454.5" y="0" width="1" height="368" fill="#2f2f31"/><rect x="460.6" y="0" width="1" height="368" fill="#39393b"/><rect x="466.6" y="0" width="1" height="368" fill="#2f2f31"/><rect x="472.7" y="0" width="1" height="368" fill="#333335"/><rect x="478.8" y="0" width="1" height="368" fill="#2f2f31"/><rect x="484.8" y="0" width="1" height="368" fill="#333335"/><rect x="490.8" y="0" width="1" height="368" fill="#2f2f31"/><rect x="496.9" y="0" width="1" height="368" fill="#333335"/><rect x="502.9" y="0" width="1" height="368" fill="#2f2f31"/><rect x="509.0" y="0" width="1" height="368" fill="#39393b"/><rect x="515.0" y="0" width="1" height="368" fill="#2f2f31"/><rect x="521.1" y="0" width="1" height="368" fill="#333335"/><rect x="527.1" y="0" width="1" height="368" fill="#2f2f31"/><rect x="533.2" y="0" width="1" height="368" fill="#333335"/><rect x="539.2" y="0" width="1" height="368" fill="#2f2f31"/><rect x="545.3" y="0" width="1" height="368" fill="#333335"/><rect x="551.3" y="0" width="1" height="368" fill="#2f2f31"/><rect x="557.4" y="0" width="1" height="368" fill="#39393b"/><rect x="563.4" y="0" width="1" height="368" fill="#2f2f31"/><rect x="569.5" y="0" width="1" height="368" fill="#333335"/><rect x="575.5" y="0" width="1" height="368" fill="#2f2f31"/><rect x="581.6" y="0" width="1" height="368" fill="#333335"/><rect x="587.6" y="0" width="1" height="368" fill="#2f2f31"/><rect x="593.7" y="0" width="1" height="368" fill="#333335"/><rect x="599.7" y="0" width="1" height="368" fill="#2f2f31"/><rect x="605.8" y="0" width="1" height="368" fill="#39393b"/><rect x="611.8" y="0" width="1" height="368" fill="#2f2f31"/><rect x="617.9" y="0" width="1" height="368" fill="#333335"/><rect x="623.9" y="0" width="1" height="368" fill="#2f2f31"/><rect x="630.0" y="0" width="1" height="368" fill="#333335"/><rect x="636.0" y="0" width="1" height="368" fill="#2f2f31"/><rect x="642.1" y="0" width="1" height="368" fill="#333335"/><rect x="648.1" y="0" width="1" height="368" fill="#2f2f31"/><rect x="654.2" y="0" width="1" height="368" fill="#39393b"/><rect x="660.2" y="0" width="1" height="368" fill="#2f2f31"/><rect x="666.3" y="0" width="1" height="368" fill="#333335"/><rect x="672.3" y="0" width="1" height="368" fill="#2f2f31"/><rect x="678.4" y="0" width="1" height="368" fill="#333335"/><rect x="684.4" y="0" width="1" height="368" fill="#2f2f31"/><rect x="690.5" y="0" width="1" height="368" fill="#333335"/><rect x="696.5" y="0" width="1" height="368" fill="#2f2f31"/><rect x="702.6" y="0" width="1" height="368" fill="#39393b"/><rect x="708.6" y="0" width="1" height="368" fill="#2f2f31"/><rect x="714.7" y="0" width="1" height="368" fill="#333335"/><rect x="720.7" y="0" width="1" height="368" fill="#2f2f31"/><rect x="726.8" y="0" width="1" height="368" fill="#333335"/><rect x="732.8" y="0" width="1" height="368" fill="#2f2f31"/><rect x="738.9" y="0" width="1" height="368" fill="#333335"/><rect x="744.9" y="0" width="1" height="368" fill="#2f2f31"/><rect x="751.0" y="0" width="1" height="368" fill="#39393b"/><rect x="757.0" y="0" width="1" height="368" fill="#2f2f31"/><rect x="763.1" y="0" width="1" height="368" fill="#333335"/><rect x="769.1" y="0" width="1" height="368" fill="#2f2f31"/><rect x="775.2" y="0" width="1" height="368" fill="#333335"/><rect x="781.2" y="0" width="1" height="368" fill="#2f2f31"/><rect x="787.3" y="0" width="1" height="368" fill="#333335"/><rect x="793.3" y="0" width="1" height="368" fill="#2f2f31"/><rect x="799.4" y="0" width="1" height="368" fill="#39393b"/><rect x="805.4" y="0" width="1" height="368" fill="#2f2f31"/><rect x="811.5" y="0" width="1" height="368" fill="#333335"/><rect x="817.5" y="0" width="1" height="368" fill="#2f2f31"/><rect x="823.6" y="0" width="1" height="368" fill="#333335"/><rect x="829.6" y="0" width="1" height="368" fill="#2f2f31"/><rect x="835.7" y="0" width="1" height="368" fill="#333335"/><rect x="841.7" y="0" width="1" height="368" fill="#2f2f31"/><rect x="847.8" y="0" width="1" height="368" fill="#39393b"/><rect x="853.8" y="0" width="1" height="368" fill="#2f2f31"/><rect x="859.9" y="0" width="1" height="368" fill="#333335"/><rect x="866.0" y="0" width="1" height="368" fill="#2f2f31"/><rect x="872.0" y="0" width="1" height="368" fill="#333335"/><rect x="878.0" y="0" width="1" height="368" fill="#2f2f31"/><rect x="884.1" y="0" width="1" height="368" fill="#333335"/><rect x="890.1" y="0" width="1" height="368" fill="#2f2f31"/><rect x="896.2" y="0" width="1" height="368" fill="#39393b"/><rect x="902.2" y="0" width="1" height="368" fill="#2f2f31"/><rect x="908.3" y="0" width="1" height="368" fill="#333335"/><rect x="914.3" y="0" width="1" height="368" fill="#2f2f31"/><rect x="920.4" y="0" width="1" height="368" fill="#333335"/><rect x="926.5" y="0" width="1" height="368" fill="#2f2f31"/><rect x="932.5" y="0" width="1" height="368" fill="#333335"/><rect x="938.5" y="0" width="1" height="368" fill="#2f2f31"/><rect x="944.6" y="0" width="1" height="368" fill="#39393b"/><rect x="950.6" y="0" width="1" height="368" fill="#2f2f31"/><rect x="956.7" y="0" width="1" height="368" fill="#333335"/><rect x="962.7" y="0" width="1" height="368" fill="#2f2f31"/><rect x="968.8" y="0" width="1" height="368" fill="#333335"/><rect x="974.8" y="0" width="1" height="368" fill="#2f2f31"/><rect x="980.9" y="0" width="1" height="368" fill="#333335"/><rect x="987.0" y="0" width="1" height="368" fill="#2f2f31"/><rect x="993.0" y="0" width="1" height="368" fill="#39393b"/><rect x="999.0" y="0" width="1" height="368" fill="#2f2f31"/><rect x="1005.1" y="0" width="1" height="368" fill="#333335"/></svg>
<div style="left:182px;top:348px;width:1008px;height:60px;background:rgba(40,120,95,0.10);"></div>
<svg style="position:absolute;left:182px;top:28px" width="1016" height="20" viewBox="0 0 1016 20"><rect x="12.9" y="16.5" width="1.2" height="2.5" fill="#77787a"/><rect x="25.0" y="13" width="1.2" height="6" fill="#9a9b9d"/><rect x="37.1" y="16.5" width="1.2" height="2.5" fill="#77787a"/><rect x="49.2" y="16.5" width="1.2" height="2.5" fill="#77787a"/><rect x="61.3" y="16.5" width="1.2" height="2.5" fill="#77787a"/><rect x="73.4" y="13" width="1.2" height="6" fill="#9a9b9d"/><rect x="85.5" y="16.5" width="1.2" height="2.5" fill="#77787a"/><rect x="97.6" y="16.5" width="1.2" height="2.5" fill="#77787a"/><rect x="109.7" y="16.5" width="1.2" height="2.5" fill="#77787a"/><rect x="121.8" y="13" width="1.2" height="6" fill="#9a9b9d"/><rect x="133.9" y="16.5" width="1.2" height="2.5" fill="#77787a"/><rect x="146.0" y="16.5" width="1.2" height="2.5" fill="#77787a"/><rect x="158.1" y="16.5" width="1.2" height="2.5" fill="#77787a"/><rect x="170.2" y="13" width="1.2" height="6" fill="#9a9b9d"/><rect x="182.3" y="16.5" width="1.2" height="2.5" fill="#77787a"/><rect x="194.4" y="16.5" width="1.2" height="2.5" fill="#77787a"/><rect x="206.5" y="16.5" width="1.2" height="2.5" fill="#77787a"/><rect x="218.6" y="13" width="1.2" height="6" fill="#9a9b9d"/><rect x="230.7" y="16.5" width="1.2" height="2.5" fill="#77787a"/><rect x="242.8" y="16.5" width="1.2" height="2.5" fill="#77787a"/><rect x="254.9" y="16.5" width="1.2" height="2.5" fill="#77787a"/><rect x="267.0" y="13" width="1.2" height="6" fill="#9a9b9d"/><rect x="279.1" y="16.5" width="1.2" height="2.5" fill="#77787a"/><rect x="291.2" y="16.5" width="1.2" height="2.5" fill="#77787a"/><rect x="303.3" y="16.5" width="1.2" height="2.5" fill="#77787a"/><rect x="315.4" y="13" width="1.2" height="6" fill="#9a9b9d"/><rect x="327.5" y="16.5" width="1.2" height="2.5" fill="#77787a"/><rect x="339.6" y="16.5" width="1.2" height="2.5" fill="#77787a"/><rect x="351.7" y="16.5" width="1.2" height="2.5" fill="#77787a"/><rect x="363.8" y="13" width="1.2" height="6" fill="#9a9b9d"/><rect x="375.9" y="16.5" width="1.2" height="2.5" fill="#77787a"/><rect x="388.0" y="16.5" width="1.2" height="2.5" fill="#77787a"/><rect x="400.1" y="16.5" width="1.2" height="2.5" fill="#77787a"/><rect x="412.2" y="13" width="1.2" height="6" fill="#9a9b9d"/><rect x="424.3" y="16.5" width="1.2" height="2.5" fill="#77787a"/><rect x="436.4" y="16.5" width="1.2" height="2.5" fill="#77787a"/><rect x="448.5" y="16.5" width="1.2" height="2.5" fill="#77787a"/><rect x="460.6" y="13" width="1.2" height="6" fill="#9a9b9d"/><rect x="472.7" y="16.5" width="1.2" height="2.5" fill="#77787a"/><rect x="484.8" y="16.5" width="1.2" height="2.5" fill="#77787a"/><rect x="496.9" y="16.5" width="1.2" height="2.5" fill="#77787a"/><rect x="509.0" y="13" width="1.2" height="6" fill="#9a9b9d"/><rect x="521.1" y="16.5" width="1.2" height="2.5" fill="#77787a"/><rect x="533.2" y="16.5" width="1.2" height="2.5" fill="#77787a"/><rect x="545.3" y="16.5" width="1.2" height="2.5" fill="#77787a"/><rect x="557.4" y="13" width="1.2" height="6" fill="#9a9b9d"/><rect x="569.5" y="16.5" width="1.2" height="2.5" fill="#77787a"/><rect x="581.6" y="16.5" width="1.2" height="2.5" fill="#77787a"/><rect x="593.7" y="16.5" width="1.2" height="2.5" fill="#77787a"/><rect x="605.8" y="13" width="1.2" height="6" fill="#9a9b9d"/><rect x="617.9" y="16.5" width="1.2" height="2.5" fill="#77787a"/><rect x="630.0" y="16.5" width="1.2" height="2.5" fill="#77787a"/><rect x="642.1" y="16.5" width="1.2" height="2.5" fill="#77787a"/><rect x="654.2" y="13" width="1.2" height="6" fill="#9a9b9d"/><rect x="666.3" y="16.5" width="1.2" height="2.5" fill="#77787a"/><rect x="678.4" y="16.5" width="1.2" height="2.5" fill="#77787a"/><rect x="690.5" y="16.5" width="1.2" height="2.5" fill="#77787a"/><rect x="702.6" y="13" width="1.2" height="6" fill="#9a9b9d"/><rect x="714.7" y="16.5" width="1.2" height="2.5" fill="#77787a"/><rect x="726.8" y="16.5" width="1.2" height="2.5" fill="#77787a"/><rect x="738.9" y="16.5" width="1.2" height="2.5" fill="#77787a"/><rect x="751.0" y="13" width="1.2" height="6" fill="#9a9b9d"/><rect x="763.1" y="16.5" width="1.2" height="2.5" fill="#77787a"/><rect x="775.2" y="16.5" width="1.2" height="2.5" fill="#77787a"/><rect x="787.3" y="16.5" width="1.2" height="2.5" fill="#77787a"/><rect x="799.4" y="13" width="1.2" height="6" fill="#9a9b9d"/><rect x="811.5" y="16.5" width="1.2" height="2.5" fill="#77787a"/><rect x="823.6" y="16.5" width="1.2" height="2.5" fill="#77787a"/><rect x="835.7" y="16.5" width="1.2" height="2.5" fill="#77787a"/><rect x="847.8" y="13" width="1.2" height="6" fill="#9a9b9d"/><rect x="859.9" y="16.5" width="1.2" height="2.5" fill="#77787a"/><rect x="872.0" y="16.5" width="1.2" height="2.5" fill="#77787a"/><rect x="884.1" y="16.5" width="1.2" height="2.5" fill="#77787a"/><rect x="896.2" y="13" width="1.2" height="6" fill="#9a9b9d"/><rect x="908.3" y="16.5" width="1.2" height="2.5" fill="#77787a"/><rect x="920.4" y="16.5" width="1.2" height="2.5" fill="#77787a"/><rect x="932.5" y="16.5" width="1.2" height="2.5" fill="#77787a"/><rect x="944.6" y="13" width="1.2" height="6" fill="#9a9b9d"/><rect x="956.7" y="16.5" width="1.2" height="2.5" fill="#77787a"/><rect x="968.8" y="16.5" width="1.2" height="2.5" fill="#77787a"/><rect x="980.9" y="16.5" width="1.2" height="2.5" fill="#77787a"/><rect x="993.0" y="13" width="1.2" height="6" fill="#9a9b9d"/><rect x="1005.1" y="16.5" width="1.2" height="2.5" fill="#77787a"/></svg>
<div style="left:207.5px;top:28px;height:18px;line-height:18px;font-size:9px;color:#d2d2d2;font-weight:normal;white-space:nowrap;">5</div>
<div style="left:255.9px;top:28px;height:18px;line-height:18px;font-size:9px;color:#d2d2d2;font-weight:normal;white-space:nowrap;">6</div>
<div style="left:304.3px;top:28px;height:18px;line-height:18px;font-size:9px;color:#d2d2d2;font-weight:normal;white-space:nowrap;">7</div>
<div style="left:352.7px;top:28px;height:18px;line-height:18px;font-size:9px;color:#d2d2d2;font-weight:normal;white-space:nowrap;">8</div>
<div style="left:401.1px;top:28px;height:18px;line-height:18px;font-size:9px;color:#d2d2d2;font-weight:normal;white-space:nowrap;">9</div>
<div style="left:449.5px;top:28px;height:18px;line-height:18px;font-size:9px;color:#d2d2d2;font-weight:normal;white-space:nowrap;">10</div>
<div style="left:497.9px;top:28px;height:18px;line-height:18px;font-size:9px;color:#d2d2d2;font-weight:normal;white-space:nowrap;">11</div>
<div style="left:546.3px;top:28px;height:18px;line-height:18px;font-size:9px;color:#d2d2d2;font-weight:normal;white-space:nowrap;">12</div>
<div style="left:594.7px;top:28px;height:18px;line-height:18px;font-size:9px;color:#d2d2d2;font-weight:normal;white-space:nowrap;">13</div>
<div style="left:643.0999999999999px;top:28px;height:18px;line-height:18px;font-size:9px;color:#d2d2d2;font-weight:normal;white-space:nowrap;">14</div>
<div style="left:691.5px;top:28px;height:18px;line-height:18px;font-size:9px;color:#d2d2d2;font-weight:normal;white-space:nowrap;">15</div>
<div style="left:739.9px;top:28px;height:18px;line-height:18px;font-size:9px;color:#d2d2d2;font-weight:normal;white-space:nowrap;">16</div>
<div style="left:788.3px;top:28px;height:18px;line-height:18px;font-size:9px;color:#d2d2d2;font-weight:normal;white-space:nowrap;">17</div>
<div style="left:836.6999999999999px;top:28px;height:18px;line-height:18px;font-size:9px;color:#d2d2d2;font-weight:normal;white-space:nowrap;">18</div>
<div style="left:885.1px;top:28px;height:18px;line-height:18px;font-size:9px;color:#d2d2d2;font-weight:normal;white-space:nowrap;">19</div>
<div style="left:933.5px;top:28px;height:18px;line-height:18px;font-size:9px;color:#d2d2d2;font-weight:normal;white-space:nowrap;">20</div>
<div style="left:981.9px;top:28px;height:18px;line-height:18px;font-size:9px;color:#d2d2d2;font-weight:normal;white-space:nowrap;">21</div>
<div style="left:1030.3px;top:28px;height:18px;line-height:18px;font-size:9px;color:#d2d2d2;font-weight:normal;white-space:nowrap;">22</div>
<div style="left:1078.6999999999998px;top:28px;height:18px;line-height:18px;font-size:9px;color:#d2d2d2;font-weight:normal;white-space:nowrap;">23</div>
<div style="left:1127.1px;top:28px;height:18px;line-height:18px;font-size:9px;color:#d2d2d2;font-weight:normal;white-space:nowrap;">24</div>
<div style="left:1175.5px;top:28px;height:18px;line-height:18px;font-size:9px;color:#d2d2d2;font-weight:normal;white-space:nowrap;">25</div>
<div style="left:207px;top:48px;width:386px;height:59px;background:#6b21b3;"></div>
<svg style="position:absolute;left:207px;top:48px" width="386" height="59" viewBox="0 0 386 59"><polygon points="0.0,15.8 0.5,7.5 1.1,11.2 1.9,14.3 3.1,15.8 1.9,17.3 1.1,20.4 0.5,24.1" fill="#34106a"/><polygon points="12.1,15.8 12.6,7.8 13.2,11.4 14.0,14.4 15.2,15.8 14.0,17.2 13.2,20.2 12.6,23.8" fill="#34106a"/><polygon points="18.2,15.8 18.7,7.5 19.3,11.2 20.1,14.3 21.3,15.8 20.1,17.3 19.3,20.4 18.7,24.1" fill="#34106a"/><polygon points="24.2,15.8 24.6,14.5 25.8,15.8 24.6,17.1" fill="#34106a"/><rect x="23.2" y="15.5" width="3.6" height="0.7" fill="#34106a" opacity="0.6"/><polygon points="30.2,15.8 30.6,14.5 31.9,15.8 30.6,17.1" fill="#34106a"/><rect x="29.2" y="15.5" width="3.6" height="0.7" fill="#34106a" opacity="0.6"/><polygon points="36.3,15.8 36.8,7.8 37.4,11.4 38.2,14.4 39.4,15.8 38.2,17.2 37.4,20.2 36.8,23.8" fill="#34106a"/><polygon points="42.3,15.8 42.7,14.5 43.9,15.8 42.7,17.1" fill="#34106a"/><rect x="41.3" y="15.5" width="3.6" height="0.7" fill="#34106a" opacity="0.6"/><polygon points="48.4,15.8 48.9,7.5 49.5,11.2 50.3,14.3 51.5,15.8 50.3,17.3 49.5,20.4 48.9,24.1" fill="#34106a"/><polygon points="51.4,15.8 51.8,14.9 52.6,15.8 51.8,16.7" fill="#34106a"/><rect x="50.4" y="15.5" width="3.2" height="0.7" fill="#34106a" opacity="0.6"/><polygon points="54.4,15.8 54.8,14.5 56.0,15.8 54.8,17.1" fill="#34106a"/><rect x="53.4" y="15.5" width="3.6" height="0.7" fill="#34106a" opacity="0.6"/><polygon points="60.5,15.8 61.0,7.8 61.6,11.4 62.4,14.4 63.6,15.8 62.4,17.2 61.6,20.2 61.0,23.8" fill="#34106a"/><polygon points="66.6,15.8 67.1,7.5 67.7,11.2 68.5,14.3 69.7,15.8 68.5,17.3 67.7,20.4 67.1,24.1" fill="#34106a"/><polygon points="72.6,15.8 73.0,14.5 74.2,15.8 73.0,17.1" fill="#34106a"/><rect x="71.6" y="15.5" width="3.6" height="0.7" fill="#34106a" opacity="0.6"/><polygon points="81.7,15.8 82.1,14.9 82.9,15.8 82.1,16.7" fill="#34106a"/><rect x="80.7" y="15.5" width="3.2" height="0.7" fill="#34106a" opacity="0.6"/><polygon points="81.7,15.8 82.2,9.8 82.8,12.5 83.4,14.7 84.5,15.8 83.4,16.9 82.8,19.1 82.2,21.8" fill="#34106a"/><polygon points="84.7,15.8 85.2,7.8 85.8,11.4 86.6,14.4 87.8,15.8 86.6,17.2 85.8,20.2 85.2,23.8" fill="#34106a"/><polygon points="87.7,15.8 88.1,14.9 88.9,15.8 88.1,16.7" fill="#34106a"/><rect x="86.7" y="15.5" width="3.2" height="0.7" fill="#34106a" opacity="0.6"/><polygon points="90.8,15.8 91.2,14.5 92.3,15.8 91.2,17.1" fill="#34106a"/><rect x="89.8" y="15.5" width="3.6" height="0.7" fill="#34106a" opacity="0.6"/><polygon points="96.8,15.8 97.3,7.5 97.9,11.2 98.7,14.3 99.9,15.8 98.7,17.3 97.9,20.4 97.3,24.1" fill="#34106a"/><polygon points="102.9,15.8 103.3,14.5 104.5,15.8 103.3,17.1" fill="#34106a"/><rect x="101.9" y="15.5" width="3.6" height="0.7" fill="#34106a" opacity="0.6"/><polygon points="108.9,15.8 109.4,7.8 110.0,11.4 110.8,14.4 112.0,15.8 110.8,17.2 110.0,20.2 109.4,23.8" fill="#34106a"/><polygon points="111.9,15.8 112.3,14.9 113.1,15.8 112.3,16.7" fill="#34106a"/><rect x="110.9" y="15.5" width="3.2" height="0.7" fill="#34106a" opacity="0.6"/><polygon points="114.9,15.8 115.4,7.5 116.0,11.2 116.9,14.3 118.1,15.8 116.9,17.3 116.0,20.4 115.4,24.1" fill="#34106a"/><polygon points="124.0,15.8 124.4,14.9 125.2,15.8 124.4,16.7" fill="#34106a"/><rect x="123.0" y="15.5" width="3.2" height="0.7" fill="#34106a" opacity="0.6"/><polygon points="127.1,15.8 127.5,14.5 128.7,15.8 127.5,17.1" fill="#34106a"/><rect x="126.1" y="15.5" width="3.6" height="0.7" fill="#34106a" opacity="0.6"/><polygon points="133.1,15.8 133.6,7.8 134.2,11.4 135.0,14.4 136.2,15.8 135.0,17.2 134.2,20.2 133.6,23.8" fill="#34106a"/><polygon points="145.2,15.8 145.7,7.5 146.3,11.2 147.1,14.3 148.3,15.8 147.1,17.3 146.3,20.4 145.7,24.1" fill="#34106a"/><polygon points="151.2,15.8 151.7,14.5 152.8,15.8 151.7,17.1" fill="#34106a"/><rect x="150.2" y="15.5" width="3.6" height="0.7" fill="#34106a" opacity="0.6"/><polygon points="157.3,15.8 157.8,7.8 158.4,11.4 159.2,14.4 160.4,15.8 159.2,17.2 158.4,20.2 157.8,23.8" fill="#34106a"/><polygon points="163.4,15.8 163.9,7.5 164.5,11.2 165.3,14.3 166.5,15.8 165.3,17.3 164.5,20.4 163.9,24.1" fill="#34106a"/><polygon points="175.4,15.8 175.8,14.5 177.0,15.8 175.8,17.1" fill="#34106a"/><rect x="174.4" y="15.5" width="3.6" height="0.7" fill="#34106a" opacity="0.6"/><polygon points="178.5,15.8 178.9,14.9 179.7,15.8 178.9,16.7" fill="#34106a"/><rect x="177.5" y="15.5" width="3.2" height="0.7" fill="#34106a" opacity="0.6"/><polygon points="178.5,15.8 179.0,9.8 179.6,12.5 180.2,14.7 181.3,15.8 180.2,16.9 179.6,19.1 179.0,21.8" fill="#34106a"/><polygon points="181.5,15.8 182.0,7.8 182.6,11.4 183.4,14.4 184.6,15.8 183.4,17.2 182.6,20.2 182.0,23.8" fill="#34106a"/><polygon points="193.6,15.8 194.1,7.5 194.7,11.2 195.5,14.3 196.7,15.8 195.5,17.3 194.7,20.4 194.1,24.1" fill="#34106a"/><polygon points="199.6,15.8 200.0,14.5 201.2,15.8 200.0,17.1" fill="#34106a"/><rect x="198.6" y="15.5" width="3.6" height="0.7" fill="#34106a" opacity="0.6"/><polygon points="202.7,15.8 203.1,14.9 203.9,15.8 203.1,16.7" fill="#34106a"/><rect x="201.7" y="15.5" width="3.2" height="0.7" fill="#34106a" opacity="0.6"/><polygon points="205.7,15.8 206.2,7.8 206.8,11.4 207.6,14.4 208.8,15.8 207.6,17.2 206.8,20.2 206.2,23.8" fill="#34106a"/><polygon points="211.8,15.8 212.2,7.5 212.8,11.2 213.7,14.3 214.9,15.8 213.7,17.3 212.8,20.4 212.2,24.1" fill="#34106a"/><polygon points="220.8,15.8 221.2,14.9 222.0,15.8 221.2,16.7" fill="#34106a"/><rect x="219.8" y="15.5" width="3.2" height="0.7" fill="#34106a" opacity="0.6"/><polygon points="223.9,15.8 224.3,14.5 225.5,15.8 224.3,17.1" fill="#34106a"/><rect x="222.9" y="15.5" width="3.6" height="0.7" fill="#34106a" opacity="0.6"/><polygon points="229.9,15.8 230.4,7.8 231.0,11.4 231.8,14.4 233.0,15.8 231.8,17.2 231.0,20.2 230.4,23.8" fill="#34106a"/><polygon points="235.9,15.8 236.3,14.5 237.5,15.8 236.3,17.1" fill="#34106a"/><rect x="234.9" y="15.5" width="3.6" height="0.7" fill="#34106a" opacity="0.6"/><polygon points="242.0,15.8 242.5,7.5 243.1,11.2 243.9,14.3 245.1,15.8 243.9,17.3 243.1,20.4 242.5,24.1" fill="#34106a"/><polygon points="248.0,15.8 248.4,14.5 249.6,15.8 248.4,17.1" fill="#34106a"/><rect x="247.0" y="15.5" width="3.6" height="0.7" fill="#34106a" opacity="0.6"/><polygon points="251.1,15.8 251.5,14.9 252.3,15.8 251.5,16.7" fill="#34106a"/><rect x="250.1" y="15.5" width="3.2" height="0.7" fill="#34106a" opacity="0.6"/><polygon points="254.1,15.8 254.6,7.8 255.2,11.4 256.0,14.4 257.2,15.8 256.0,17.2 255.2,20.2 254.6,23.8" fill="#34106a"/><polygon points="257.1,15.8 257.5,14.9 258.3,15.8 257.5,16.7" fill="#34106a"/><rect x="256.1" y="15.5" width="3.2" height="0.7" fill="#34106a" opacity="0.6"/><polygon points="260.1,15.8 260.6,7.5 261.2,11.2 262.1,14.3 263.3,15.8 262.1,17.3 261.2,20.4 260.6,24.1" fill="#34106a"/><polygon points="266.2,15.8 266.6,14.5 267.8,15.8 266.6,17.1" fill="#34106a"/><rect x="265.2" y="15.5" width="3.6" height="0.7" fill="#34106a" opacity="0.6"/><polygon points="278.3,15.8 278.8,7.8 279.4,11.4 280.2,14.4 281.4,15.8 280.2,17.2 279.4,20.2 278.8,23.8" fill="#34106a"/><polygon points="284.3,15.8 284.7,14.5 285.9,15.8 284.7,17.1" fill="#34106a"/><rect x="283.3" y="15.5" width="3.6" height="0.7" fill="#34106a" opacity="0.6"/><polygon points="290.4,15.8 290.9,7.5 291.5,11.2 292.3,14.3 293.5,15.8 292.3,17.3 291.5,20.4 290.9,24.1" fill="#34106a"/><polygon points="296.4,15.8 296.8,14.5 298.1,15.8 296.8,17.1" fill="#34106a"/><rect x="295.4" y="15.5" width="3.6" height="0.7" fill="#34106a" opacity="0.6"/><polygon points="302.5,15.8 303.0,7.8 303.6,11.4 304.4,14.4 305.6,15.8 304.4,17.2 303.6,20.2 303.0,23.8" fill="#34106a"/><polygon points="305.5,15.8 305.9,14.9 306.7,15.8 305.9,16.7" fill="#34106a"/><rect x="304.5" y="15.5" width="3.2" height="0.7" fill="#34106a" opacity="0.6"/><polygon points="308.5,15.8 309.0,7.5 309.6,11.2 310.5,14.3 311.7,15.8 310.5,17.3 309.6,20.4 309.0,24.1" fill="#34106a"/><polygon points="311.6,15.8 312.0,14.9 312.8,15.8 312.0,16.7" fill="#34106a"/><rect x="310.6" y="15.5" width="3.2" height="0.7" fill="#34106a" opacity="0.6"/><polygon points="314.6,15.8 315.0,14.5 316.2,15.8 315.0,17.1" fill="#34106a"/><rect x="313.6" y="15.5" width="3.6" height="0.7" fill="#34106a" opacity="0.6"/><polygon points="317.6,15.8 318.0,14.9 318.8,15.8 318.0,16.7" fill="#34106a"/><rect x="316.6" y="15.5" width="3.2" height="0.7" fill="#34106a" opacity="0.6"/><polygon points="320.6,15.8 321.0,14.5 322.2,15.8 321.0,17.1" fill="#34106a"/><rect x="319.6" y="15.5" width="3.6" height="0.7" fill="#34106a" opacity="0.6"/><polygon points="323.7,15.8 324.1,14.9 324.9,15.8 324.1,16.7" fill="#34106a"/><rect x="322.7" y="15.5" width="3.2" height="0.7" fill="#34106a" opacity="0.6"/><polygon points="323.7,15.8 324.2,9.8 324.8,12.5 325.4,14.7 326.5,15.8 325.4,16.9 324.8,19.1 324.2,21.8" fill="#34106a"/><polygon points="326.7,15.8 327.2,7.8 327.8,11.4 328.6,14.4 329.8,15.8 328.6,17.2 327.8,20.2 327.2,23.8" fill="#34106a"/><polygon points="332.8,15.8 333.1,14.5 334.4,15.8 333.1,17.1" fill="#34106a"/><rect x="331.8" y="15.5" width="3.6" height="0.7" fill="#34106a" opacity="0.6"/><polygon points="338.8,15.8 339.3,7.5 339.9,11.2 340.7,14.3 341.9,15.8 340.7,17.3 339.9,20.4 339.3,24.1" fill="#34106a"/><polygon points="344.8,15.8 345.2,14.5 346.4,15.8 345.2,17.1" fill="#34106a"/><rect x="343.8" y="15.5" width="3.6" height="0.7" fill="#34106a" opacity="0.6"/><polygon points="347.9,15.8 348.3,14.9 349.1,15.8 348.3,16.7" fill="#34106a"/><rect x="346.9" y="15.5" width="3.2" height="0.7" fill="#34106a" opacity="0.6"/><polygon points="350.9,15.8 351.4,7.8 352.0,11.4 352.8,14.4 354.0,15.8 352.8,17.2 352.0,20.2 351.4,23.8" fill="#34106a"/><polygon points="353.9,15.8 354.3,14.9 355.1,15.8 354.3,16.7" fill="#34106a"/><rect x="352.9" y="15.5" width="3.2" height="0.7" fill="#34106a" opacity="0.6"/><polygon points="357.0,15.8 357.5,7.5 358.1,11.2 358.9,14.3 360.1,15.8 358.9,17.3 358.1,20.4 357.5,24.1" fill="#34106a"/><polygon points="360.0,15.8 360.4,14.9 361.2,15.8 360.4,16.7" fill="#34106a"/><rect x="359.0" y="15.5" width="3.2" height="0.7" fill="#34106a" opacity="0.6"/><polygon points="363.0,15.8 363.4,14.5 364.6,15.8 363.4,17.1" fill="#34106a"/><rect x="362.0" y="15.5" width="3.6" height="0.7" fill="#34106a" opacity="0.6"/><polygon points="369.0,15.8 369.4,14.5 370.6,15.8 369.4,17.1" fill="#34106a"/><rect x="368.0" y="15.5" width="3.6" height="0.7" fill="#34106a" opacity="0.6"/><polygon points="375.1,15.8 375.6,7.8 376.2,11.4 377.0,14.4 378.2,15.8 377.0,17.2 376.2,20.2 375.6,23.8" fill="#34106a"/><polygon points="378.1,15.8 378.5,14.9 379.3,15.8 378.5,16.7" fill="#34106a"/><rect x="377.1" y="15.5" width="3.2" height="0.7" fill="#34106a" opacity="0.6"/><polygon points="0.0,44.3 0.5,36.0 1.1,39.7 1.9,42.8 3.1,44.3 1.9,45.8 1.1,48.9 0.5,52.6" fill="#34106a"/><polygon points="12.1,44.3 12.6,36.3 13.2,39.9 14.0,42.9 15.2,44.3 14.0,45.7 13.2,48.7 12.6,52.3" fill="#34106a"/><polygon points="18.2,44.3 18.7,36.0 19.3,39.7 20.1,42.8 21.3,44.3 20.1,45.8 19.3,48.9 18.7,52.6" fill="#34106a"/><polygon points="24.2,44.3 24.6,43.0 25.8,44.3 24.6,45.6" fill="#34106a"/><rect x="23.2" y="43.9" width="3.6" height="0.7" fill="#34106a" opacity="0.6"/><polygon points="30.2,44.3 30.6,43.0 31.9,44.3 30.6,45.6" fill="#34106a"/><rect x="29.2" y="43.9" width="3.6" height="0.7" fill="#34106a" opacity="0.6"/><polygon points="36.3,44.3 36.8,36.3 37.4,39.9 38.2,42.9 39.4,44.3 38.2,45.7 37.4,48.7 36.8,52.3" fill="#34106a"/><polygon points="42.3,44.3 42.7,43.0 43.9,44.3 42.7,45.6" fill="#34106a"/><rect x="41.3" y="43.9" width="3.6" height="0.7" fill="#34106a" opacity="0.6"/><polygon points="48.4,44.3 48.9,36.0 49.5,39.7 50.3,42.8 51.5,44.3 50.3,45.8 49.5,48.9 48.9,52.6" fill="#34106a"/><polygon points="51.4,44.3 51.8,43.4 52.6,44.3 51.8,45.2" fill="#34106a"/><rect x="50.4" y="43.9" width="3.2" height="0.7" fill="#34106a" opacity="0.6"/><polygon points="54.4,44.3 54.8,43.0 56.0,44.3 54.8,45.6" fill="#34106a"/><rect x="53.4" y="43.9" width="3.6" height="0.7" fill="#34106a" opacity="0.6"/><polygon points="60.5,44.3 61.0,36.3 61.6,39.9 62.4,42.9 63.6,44.3 62.4,45.7 61.6,48.7 61.0,52.3" fill="#34106a"/><polygon points="66.6,44.3 67.1,36.0 67.7,39.7 68.5,42.8 69.7,44.3 68.5,45.8 67.7,48.9 67.1,52.6" fill="#34106a"/><polygon points="72.6,44.3 73.0,43.0 74.2,44.3 73.0,45.6" fill="#34106a"/><rect x="71.6" y="43.9" width="3.6" height="0.7" fill="#34106a" opacity="0.6"/><polygon points="81.7,44.3 82.1,43.4 82.9,44.3 82.1,45.2" fill="#34106a"/><rect x="80.7" y="43.9" width="3.2" height="0.7" fill="#34106a" opacity="0.6"/><polygon points="81.7,44.3 82.2,38.3 82.8,41.0 83.4,43.2 84.5,44.3 83.4,45.4 82.8,47.6 82.2,50.3" fill="#34106a"/><polygon points="84.7,44.3 85.2,36.3 85.8,39.9 86.6,42.9 87.8,44.3 86.6,45.7 85.8,48.7 85.2,52.3" fill="#34106a"/><polygon points="87.7,44.3 88.1,43.4 88.9,44.3 88.1,45.2" fill="#34106a"/><rect x="86.7" y="43.9" width="3.2" height="0.7" fill="#34106a" opacity="0.6"/><polygon points="90.8,44.3 91.2,43.0 92.3,44.3 91.2,45.6" fill="#34106a"/><rect x="89.8" y="43.9" width="3.6" height="0.7" fill="#34106a" opacity="0.6"/><polygon points="96.8,44.3 97.3,36.0 97.9,39.7 98.7,42.8 99.9,44.3 98.7,45.8 97.9,48.9 97.3,52.6" fill="#34106a"/><polygon points="102.9,44.3 103.3,43.0 104.5,44.3 103.3,45.6" fill="#34106a"/><rect x="101.9" y="43.9" width="3.6" height="0.7" fill="#34106a" opacity="0.6"/><polygon points="108.9,44.3 109.4,36.3 110.0,39.9 110.8,42.9 112.0,44.3 110.8,45.7 110.0,48.7 109.4,52.3" fill="#34106a"/><polygon points="111.9,44.3 112.3,43.4 113.1,44.3 112.3,45.2" fill="#34106a"/><rect x="110.9" y="43.9" width="3.2" height="0.7" fill="#34106a" opacity="0.6"/><polygon points="114.9,44.3 115.4,36.0 116.0,39.7 116.9,42.8 118.1,44.3 116.9,45.8 116.0,48.9 115.4,52.6" fill="#34106a"/><polygon points="124.0,44.3 124.4,43.4 125.2,44.3 124.4,45.2" fill="#34106a"/><rect x="123.0" y="43.9" width="3.2" height="0.7" fill="#34106a" opacity="0.6"/><polygon points="127.1,44.3 127.5,43.0 128.7,44.3 127.5,45.6" fill="#34106a"/><rect x="126.1" y="43.9" width="3.6" height="0.7" fill="#34106a" opacity="0.6"/><polygon points="133.1,44.3 133.6,36.3 134.2,39.9 135.0,42.9 136.2,44.3 135.0,45.7 134.2,48.7 133.6,52.3" fill="#34106a"/><polygon points="145.2,44.3 145.7,36.0 146.3,39.7 147.1,42.8 148.3,44.3 147.1,45.8 146.3,48.9 145.7,52.6" fill="#34106a"/><polygon points="151.2,44.3 151.7,43.0 152.8,44.3 151.7,45.6" fill="#34106a"/><rect x="150.2" y="43.9" width="3.6" height="0.7" fill="#34106a" opacity="0.6"/><polygon points="157.3,44.3 157.8,36.3 158.4,39.9 159.2,42.9 160.4,44.3 159.2,45.7 158.4,48.7 157.8,52.3" fill="#34106a"/><polygon points="163.4,44.3 163.9,36.0 164.5,39.7 165.3,42.8 166.5,44.3 165.3,45.8 164.5,48.9 163.9,52.6" fill="#34106a"/><polygon points="175.4,44.3 175.8,43.0 177.0,44.3 175.8,45.6" fill="#34106a"/><rect x="174.4" y="43.9" width="3.6" height="0.7" fill="#34106a" opacity="0.6"/><polygon points="178.5,44.3 178.9,43.4 179.7,44.3 178.9,45.2" fill="#34106a"/><rect x="177.5" y="43.9" width="3.2" height="0.7" fill="#34106a" opacity="0.6"/><polygon points="178.5,44.3 179.0,38.3 179.6,41.0 180.2,43.2 181.3,44.3 180.2,45.4 179.6,47.6 179.0,50.3" fill="#34106a"/><polygon points="181.5,44.3 182.0,36.3 182.6,39.9 183.4,42.9 184.6,44.3 183.4,45.7 182.6,48.7 182.0,52.3" fill="#34106a"/><polygon points="193.6,44.3 194.1,36.0 194.7,39.7 195.5,42.8 196.7,44.3 195.5,45.8 194.7,48.9 194.1,52.6" fill="#34106a"/><polygon points="199.6,44.3 200.0,43.0 201.2,44.3 200.0,45.6" fill="#34106a"/><rect x="198.6" y="43.9" width="3.6" height="0.7" fill="#34106a" opacity="0.6"/><polygon points="202.7,44.3 203.1,43.4 203.9,44.3 203.1,45.2" fill="#34106a"/><rect x="201.7" y="43.9" width="3.2" height="0.7" fill="#34106a" opacity="0.6"/><polygon points="205.7,44.3 206.2,36.3 206.8,39.9 207.6,42.9 208.8,44.3 207.6,45.7 206.8,48.7 206.2,52.3" fill="#34106a"/><polygon points="211.8,44.3 212.2,36.0 212.8,39.7 213.7,42.8 214.9,44.3 213.7,45.8 212.8,48.9 212.2,52.6" fill="#34106a"/><polygon points="220.8,44.3 221.2,43.4 222.0,44.3 221.2,45.2" fill="#34106a"/><rect x="219.8" y="43.9" width="3.2" height="0.7" fill="#34106a" opacity="0.6"/><polygon points="223.9,44.3 224.3,43.0 225.5,44.3 224.3,45.6" fill="#34106a"/><rect x="222.9" y="43.9" width="3.6" height="0.7" fill="#34106a" opacity="0.6"/><polygon points="229.9,44.3 230.4,36.3 231.0,39.9 231.8,42.9 233.0,44.3 231.8,45.7 231.0,48.7 230.4,52.3" fill="#34106a"/><polygon points="235.9,44.3 236.3,43.0 237.5,44.3 236.3,45.6" fill="#34106a"/><rect x="234.9" y="43.9" width="3.6" height="0.7" fill="#34106a" opacity="0.6"/><polygon points="242.0,44.3 242.5,36.0 243.1,39.7 243.9,42.8 245.1,44.3 243.9,45.8 243.1,48.9 242.5,52.6" fill="#34106a"/><polygon points="248.0,44.3 248.4,43.0 249.6,44.3 248.4,45.6" fill="#34106a"/><rect x="247.0" y="43.9" width="3.6" height="0.7" fill="#34106a" opacity="0.6"/><polygon points="251.1,44.3 251.5,43.4 252.3,44.3 251.5,45.2" fill="#34106a"/><rect x="250.1" y="43.9" width="3.2" height="0.7" fill="#34106a" opacity="0.6"/><polygon points="254.1,44.3 254.6,36.3 255.2,39.9 256.0,42.9 257.2,44.3 256.0,45.7 255.2,48.7 254.6,52.3" fill="#34106a"/><polygon points="257.1,44.3 257.5,43.4 258.3,44.3 257.5,45.2" fill="#34106a"/><rect x="256.1" y="43.9" width="3.2" height="0.7" fill="#34106a" opacity="0.6"/><polygon points="260.1,44.3 260.6,36.0 261.2,39.7 262.1,42.8 263.3,44.3 262.1,45.8 261.2,48.9 260.6,52.6" fill="#34106a"/><polygon points="266.2,44.3 266.6,43.0 267.8,44.3 266.6,45.6" fill="#34106a"/><rect x="265.2" y="43.9" width="3.6" height="0.7" fill="#34106a" opacity="0.6"/><polygon points="278.3,44.3 278.8,36.3 279.4,39.9 280.2,42.9 281.4,44.3 280.2,45.7 279.4,48.7 278.8,52.3" fill="#34106a"/><polygon points="284.3,44.3 284.7,43.0 285.9,44.3 284.7,45.6" fill="#34106a"/><rect x="283.3" y="43.9" width="3.6" height="0.7" fill="#34106a" opacity="0.6"/><polygon points="290.4,44.3 290.9,36.0 291.5,39.7 292.3,42.8 293.5,44.3 292.3,45.8 291.5,48.9 290.9,52.6" fill="#34106a"/><polygon points="296.4,44.3 296.8,43.0 298.1,44.3 296.8,45.6" fill="#34106a"/><rect x="295.4" y="43.9" width="3.6" height="0.7" fill="#34106a" opacity="0.6"/><polygon points="302.5,44.3 303.0,36.3 303.6,39.9 304.4,42.9 305.6,44.3 304.4,45.7 303.6,48.7 303.0,52.3" fill="#34106a"/><polygon points="305.5,44.3 305.9,43.4 306.7,44.3 305.9,45.2" fill="#34106a"/><rect x="304.5" y="43.9" width="3.2" height="0.7" fill="#34106a" opacity="0.6"/><polygon points="308.5,44.3 309.0,36.0 309.6,39.7 310.5,42.8 311.7,44.3 310.5,45.8 309.6,48.9 309.0,52.6" fill="#34106a"/><polygon points="311.6,44.3 312.0,43.4 312.8,44.3 312.0,45.2" fill="#34106a"/><rect x="310.6" y="43.9" width="3.2" height="0.7" fill="#34106a" opacity="0.6"/><polygon points="314.6,44.3 315.0,43.0 316.2,44.3 315.0,45.6" fill="#34106a"/><rect x="313.6" y="43.9" width="3.6" height="0.7" fill="#34106a" opacity="0.6"/><polygon points="317.6,44.3 318.0,43.4 318.8,44.3 318.0,45.2" fill="#34106a"/><rect x="316.6" y="43.9" width="3.2" height="0.7" fill="#34106a" opacity="0.6"/><polygon points="320.6,44.3 321.0,43.0 322.2,44.3 321.0,45.6" fill="#34106a"/><rect x="319.6" y="43.9" width="3.6" height="0.7" fill="#34106a" opacity="0.6"/><polygon points="323.7,44.3 324.1,43.4 324.9,44.3 324.1,45.2" fill="#34106a"/><rect x="322.7" y="43.9" width="3.2" height="0.7" fill="#34106a" opacity="0.6"/><polygon points="323.7,44.3 324.2,38.3 324.8,41.0 325.4,43.2 326.5,44.3 325.4,45.4 324.8,47.6 324.2,50.3" fill="#34106a"/><polygon points="326.7,44.3 327.2,36.3 327.8,39.9 328.6,42.9 329.8,44.3 328.6,45.7 327.8,48.7 327.2,52.3" fill="#34106a"/><polygon points="332.8,44.3 333.1,43.0 334.4,44.3 333.1,45.6" fill="#34106a"/><rect x="331.8" y="43.9" width="3.6" height="0.7" fill="#34106a" opacity="0.6"/><polygon points="338.8,44.3 339.3,36.0 339.9,39.7 340.7,42.8 341.9,44.3 340.7,45.8 339.9,48.9 339.3,52.6" fill="#34106a"/><polygon points="344.8,44.3 345.2,43.0 346.4,44.3 345.2,45.6" fill="#34106a"/><rect x="343.8" y="43.9" width="3.6" height="0.7" fill="#34106a" opacity="0.6"/><polygon points="347.9,44.3 348.3,43.4 349.1,44.3 348.3,45.2" fill="#34106a"/><rect x="346.9" y="43.9" width="3.2" height="0.7" fill="#34106a" opacity="0.6"/><polygon points="350.9,44.3 351.4,36.3 352.0,39.9 352.8,42.9 354.0,44.3 352.8,45.7 352.0,48.7 351.4,52.3" fill="#34106a"/><polygon points="353.9,44.3 354.3,43.4 355.1,44.3 354.3,45.2" fill="#34106a"/><rect x="352.9" y="43.9" width="3.2" height="0.7" fill="#34106a" opacity="0.6"/><polygon points="357.0,44.3 357.5,36.0 358.1,39.7 358.9,42.8 360.1,44.3 358.9,45.8 358.1,48.9 357.5,52.6" fill="#34106a"/><polygon points="360.0,44.3 360.4,43.4 361.2,44.3 360.4,45.2" fill="#34106a"/><rect x="359.0" y="43.9" width="3.2" height="0.7" fill="#34106a" opacity="0.6"/><polygon points="363.0,44.3 363.4,43.0 364.6,44.3 363.4,45.6" fill="#34106a"/><rect x="362.0" y="43.9" width="3.6" height="0.7" fill="#34106a" opacity="0.6"/><polygon points="369.0,44.3 369.4,43.0 370.6,44.3 369.4,45.6" fill="#34106a"/><rect x="368.0" y="43.9" width="3.6" height="0.7" fill="#34106a" opacity="0.6"/><polygon points="375.1,44.3 375.6,36.3 376.2,39.9 377.0,42.9 378.2,44.3 377.0,45.7 376.2,48.7 375.6,52.3" fill="#34106a"/><polygon points="378.1,44.3 378.5,43.4 379.3,44.3 378.5,45.2" fill="#34106a"/><rect x="377.1" y="43.9" width="3.2" height="0.7" fill="#34106a" opacity="0.6"/></svg>
<svg style="position:absolute;left:207px;top:48px" width="81" height="9" viewBox="0 0 81 9"><polygon points="0,0 81,0 74,8.5 0,8.5" fill="#33195c"/></svg>
<div style="left:208.5px;top:45.8px;height:14px;line-height:14px;font-size:7px;color:#e2e2e2;font-weight:normal;white-space:nowrap;">07 Locavore Drums 01</div>
<svg style="position:absolute;left:207px;top:100px" width="22" height="8" viewBox="0 0 22 8"><polygon points="0,0 13,0 19,7.5 0,7.5" fill="#33195c"/><circle cx="6.5" cy="4" r="1.7" fill="none" stroke="#ccc" stroke-width="0.8"/></svg>
<div style="left:593px;top:48px;width:388px;height:59px;background:#6b21b3;"></div>
<svg style="position:absolute;left:593px;top:48px" width="388" height="59" viewBox="0 0 388 59"><polygon points="0.0,15.8 0.5,7.5 1.1,11.2 1.9,14.3 3.1,15.8 1.9,17.3 1.1,20.4 0.5,24.1" fill="#34106a"/><polygon points="3.0,15.8 3.4,14.9 4.2,15.8 3.4,16.7" fill="#34106a"/><rect x="2.0" y="15.5" width="3.2" height="0.7" fill="#34106a" opacity="0.6"/><polygon points="12.1,15.8 12.6,7.8 13.2,11.4 14.0,14.4 15.2,15.8 14.0,17.2 13.2,20.2 12.6,23.8" fill="#34106a"/><polygon points="18.1,15.8 18.6,7.5 19.2,11.2 20.1,14.3 21.3,15.8 20.1,17.3 19.2,20.4 18.6,24.1" fill="#34106a"/><polygon points="21.2,15.8 21.6,14.9 22.4,15.8 21.6,16.7" fill="#34106a"/><rect x="20.2" y="15.5" width="3.2" height="0.7" fill="#34106a" opacity="0.6"/><polygon points="24.2,15.8 24.6,14.5 25.8,15.8 24.6,17.1" fill="#34106a"/><rect x="23.2" y="15.5" width="3.6" height="0.7" fill="#34106a" opacity="0.6"/><polygon points="30.2,15.8 30.6,14.5 31.9,15.8 30.6,17.1" fill="#34106a"/><rect x="29.2" y="15.5" width="3.6" height="0.7" fill="#34106a" opacity="0.6"/><polygon points="36.3,15.8 36.8,7.8 37.4,11.4 38.2,14.4 39.4,15.8 38.2,17.2 37.4,20.2 36.8,23.8" fill="#34106a"/><polygon points="39.3,15.8 39.7,14.9 40.5,15.8 39.7,16.7" fill="#34106a"/><rect x="38.3" y="15.5" width="3.2" height="0.7" fill="#34106a" opacity="0.6"/><polygon points="42.4,15.8 42.8,14.5 44.0,15.8 42.8,17.1" fill="#34106a"/><rect x="41.4" y="15.5" width="3.6" height="0.7" fill="#34106a" opacity="0.6"/><polygon points="48.4,15.8 48.9,7.5 49.5,11.2 50.3,14.3 51.5,15.8 50.3,17.3 49.5,20.4 48.9,24.1" fill="#34106a"/><polygon points="54.5,15.8 54.9,14.5 56.1,15.8 54.9,17.1" fill="#34106a"/><rect x="53.5" y="15.5" width="3.6" height="0.7" fill="#34106a" opacity="0.6"/><polygon points="60.5,15.8 61.0,7.8 61.6,11.4 62.4,14.4 63.6,15.8 62.4,17.2 61.6,20.2 61.0,23.8" fill="#34106a"/><polygon points="63.5,15.8 63.9,14.9 64.7,15.8 63.9,16.7" fill="#34106a"/><rect x="62.5" y="15.5" width="3.2" height="0.7" fill="#34106a" opacity="0.6"/><polygon points="66.5,15.8 67.0,7.5 67.6,11.2 68.5,14.3 69.7,15.8 68.5,17.3 67.6,20.4 67.0,24.1" fill="#34106a"/><polygon points="72.6,15.8 73.0,14.5 74.2,15.8 73.0,17.1" fill="#34106a"/><rect x="71.6" y="15.5" width="3.6" height="0.7" fill="#34106a" opacity="0.6"/><polygon points="78.6,15.8 79.0,14.5 80.2,15.8 79.0,17.1" fill="#34106a"/><rect x="77.6" y="15.5" width="3.6" height="0.7" fill="#34106a" opacity="0.6"/><polygon points="84.7,15.8 85.2,7.8 85.8,11.4 86.6,14.4 87.8,15.8 86.6,17.2 85.8,20.2 85.2,23.8" fill="#34106a"/><polygon points="90.8,15.8 91.2,14.5 92.3,15.8 91.2,17.1" fill="#34106a"/><rect x="89.8" y="15.5" width="3.6" height="0.7" fill="#34106a" opacity="0.6"/><polygon points="96.8,15.8 97.3,7.5 97.9,11.2 98.7,14.3 99.9,15.8 98.7,17.3 97.9,20.4 97.3,24.1" fill="#34106a"/><polygon points="102.9,15.8 103.3,14.5 104.5,15.8 103.3,17.1" fill="#34106a"/><rect x="101.9" y="15.5" width="3.6" height="0.7" fill="#34106a" opacity="0.6"/><polygon points="108.9,15.8 109.4,7.8 110.0,11.4 110.8,14.4 112.0,15.8 110.8,17.2 110.0,20.2 109.4,23.8" fill="#34106a"/><polygon points="115.0,15.8 115.5,7.5 116.1,11.2 116.9,14.3 118.1,15.8 116.9,17.3 116.1,20.4 115.5,24.1" fill="#34106a"/><polygon points="121.0,15.8 121.4,14.5 122.6,15.8 121.4,17.1" fill="#34106a"/><rect x="120.0" y="15.5" width="3.6" height="0.7" fill="#34106a" opacity="0.6"/><polygon points="127.0,15.8 127.4,14.5 128.6,15.8 127.4,17.1" fill="#34106a"/><rect x="126.0" y="15.5" width="3.6" height="0.7" fill="#34106a" opacity="0.6"/><polygon points="130.1,15.8 130.5,14.9 131.3,15.8 130.5,16.7" fill="#34106a"/><rect x="129.1" y="15.5" width="3.2" height="0.7" fill="#34106a" opacity="0.6"/><polygon points="130.1,15.8 130.6,9.8 131.2,12.5 131.8,14.7 132.9,15.8 131.8,16.9 131.2,19.1 130.6,21.8" fill="#34106a"/><polygon points="133.1,15.8 133.6,7.8 134.2,11.4 135.0,14.4 136.2,15.8 135.0,17.2 134.2,20.2 133.6,23.8" fill="#34106a"/><polygon points="136.1,15.8 136.5,14.9 137.3,15.8 136.5,16.7" fill="#34106a"/><rect x="135.1" y="15.5" width="3.2" height="0.7" fill="#34106a" opacity="0.6"/><polygon points="139.1,15.8 139.5,14.5 140.7,15.8 139.5,17.1" fill="#34106a"/><rect x="138.1" y="15.5" width="3.6" height="0.7" fill="#34106a" opacity="0.6"/><polygon points="145.2,15.8 145.7,7.5 146.3,11.2 147.1,14.3 148.3,15.8 147.1,17.3 146.3,20.4 145.7,24.1" fill="#34106a"/><polygon points="151.2,15.8 151.7,14.5 152.8,15.8 151.7,17.1" fill="#34106a"/><rect x="150.2" y="15.5" width="3.6" height="0.7" fill="#34106a" opacity="0.6"/><polygon points="157.3,15.8 157.8,7.8 158.4,11.4 159.2,14.4 160.4,15.8 159.2,17.2 158.4,20.2 157.8,23.8" fill="#34106a"/><polygon points="163.4,15.8 163.9,7.5 164.5,11.2 165.3,14.3 166.5,15.8 165.3,17.3 164.5,20.4 163.9,24.1" fill="#34106a"/><polygon points="169.4,15.8 169.8,14.5 171.0,15.8 169.8,17.1" fill="#34106a"/><rect x="168.4" y="15.5" width="3.6" height="0.7" fill="#34106a" opacity="0.6"/><polygon points="175.5,15.8 175.9,14.5 177.1,15.8 175.9,17.1" fill="#34106a"/><rect x="174.5" y="15.5" width="3.6" height="0.7" fill="#34106a" opacity="0.6"/><polygon points="178.5,15.8 178.9,14.9 179.7,15.8 178.9,16.7" fill="#34106a"/><rect x="177.5" y="15.5" width="3.2" height="0.7" fill="#34106a" opacity="0.6"/><polygon points="178.5,15.8 179.0,9.8 179.6,12.5 180.2,14.7 181.3,15.8 180.2,16.9 179.6,19.1 179.0,21.8" fill="#34106a"/><polygon points="181.5,15.8 182.0,7.8 182.6,11.4 183.4,14.4 184.6,15.8 183.4,17.2 182.6,20.2 182.0,23.8" fill="#34106a"/><polygon points="193.6,15.8 194.1,7.5 194.7,11.2 195.5,14.3 196.7,15.8 195.5,17.3 194.7,20.4 194.1,24.1" fill="#34106a"/><polygon points="196.6,15.8 197.0,14.9 197.8,15.8 197.0,16.7" fill="#34106a"/><rect x="195.6" y="15.5" width="3.2" height="0.7" fill="#34106a" opacity="0.6"/><polygon points="205.7,15.8 206.2,7.8 206.8,11.4 207.6,14.4 208.8,15.8 207.6,17.2 206.8,20.2 206.2,23.8" fill="#34106a"/><polygon points="211.8,15.8 212.2,7.5 212.8,11.2 213.7,14.3 214.9,15.8 213.7,17.3 212.8,20.4 212.2,24.1" fill="#34106a"/><polygon points="214.8,15.8 215.2,14.9 216.0,15.8 215.2,16.7" fill="#34106a"/><rect x="213.8" y="15.5" width="3.2" height="0.7" fill="#34106a" opacity="0.6"/><polygon points="229.9,15.8 230.4,7.8 231.0,11.4 231.8,14.4 233.0,15.8 231.8,17.2 231.0,20.2 230.4,23.8" fill="#34106a"/><polygon points="232.9,15.8 233.3,14.9 234.1,15.8 233.3,16.7" fill="#34106a"/><rect x="231.9" y="15.5" width="3.2" height="0.7" fill="#34106a" opacity="0.6"/><polygon points="242.0,15.8 242.5,7.5 243.1,11.2 243.9,14.3 245.1,15.8 243.9,17.3 243.1,20.4 242.5,24.1" fill="#34106a"/><polygon points="245.0,15.8 245.4,14.9 246.2,15.8 245.4,16.7" fill="#34106a"/><rect x="244.0" y="15.5" width="3.2" height="0.7" fill="#34106a" opacity="0.6"/><polygon points="248.0,15.8 248.4,14.5 249.6,15.8 248.4,17.1" fill="#34106a"/><rect x="247.0" y="15.5" width="3.6" height="0.7" fill="#34106a" opacity="0.6"/><polygon points="254.1,15.8 254.6,7.8 255.2,11.4 256.0,14.4 257.2,15.8 256.0,17.2 255.2,20.2 254.6,23.8" fill="#34106a"/><polygon points="257.1,15.8 257.5,14.9 258.3,15.8 257.5,16.7" fill="#34106a"/><rect x="256.1" y="15.5" width="3.2" height="0.7" fill="#34106a" opacity="0.6"/><polygon points="260.1,15.8 260.6,7.5 261.2,11.2 262.1,14.3 263.3,15.8 262.1,17.3 261.2,20.4 260.6,24.1" fill="#34106a"/><polygon points="266.2,15.8 266.6,14.5 267.8,15.8 266.6,17.1" fill="#34106a"/><rect x="265.2" y="15.5" width="3.6" height="0.7" fill="#34106a" opacity="0.6"/><polygon points="272.2,15.8 272.6,14.5 273.9,15.8 272.6,17.1" fill="#34106a"/><rect x="271.2" y="15.5" width="3.6" height="0.7" fill="#34106a" opacity="0.6"/><polygon points="275.3,15.8 275.7,14.9 276.5,15.8 275.7,16.7" fill="#34106a"/><rect x="274.3" y="15.5" width="3.2" height="0.7" fill="#34106a" opacity="0.6"/><polygon points="275.3,15.8 275.8,9.8 276.4,12.5 277.0,14.7 278.1,15.8 277.0,16.9 276.4,19.1 275.8,21.8" fill="#34106a"/><polygon points="278.3,15.8 278.8,7.8 279.4,11.4 280.2,14.4 281.4,15.8 280.2,17.2 279.4,20.2 278.8,23.8" fill="#34106a"/><polygon points="290.4,15.8 290.9,7.5 291.5,11.2 292.3,14.3 293.5,15.8 292.3,17.3 291.5,20.4 290.9,24.1" fill="#34106a"/><polygon points="299.5,15.8 299.9,14.9 300.7,15.8 299.9,16.7" fill="#34106a"/><rect x="298.5" y="15.5" width="3.2" height="0.7" fill="#34106a" opacity="0.6"/><polygon points="302.5,15.8 303.0,7.8 303.6,11.4 304.4,14.4 305.6,15.8 304.4,17.2 303.6,20.2 303.0,23.8" fill="#34106a"/><polygon points="308.5,15.8 309.0,7.5 309.6,11.2 310.5,14.3 311.7,15.8 310.5,17.3 309.6,20.4 309.0,24.1" fill="#34106a"/><polygon points="317.6,15.8 318.0,14.9 318.8,15.8 318.0,16.7" fill="#34106a"/><rect x="316.6" y="15.5" width="3.2" height="0.7" fill="#34106a" opacity="0.6"/><polygon points="320.6,15.8 321.0,14.5 322.2,15.8 321.0,17.1" fill="#34106a"/><rect x="319.6" y="15.5" width="3.6" height="0.7" fill="#34106a" opacity="0.6"/><polygon points="326.7,15.8 327.2,7.8 327.8,11.4 328.6,14.4 329.8,15.8 328.6,17.2 327.8,20.2 327.2,23.8" fill="#34106a"/><polygon points="332.8,15.8 333.1,14.5 334.4,15.8 333.1,17.1" fill="#34106a"/><rect x="331.8" y="15.5" width="3.6" height="0.7" fill="#34106a" opacity="0.6"/><polygon points="338.8,15.8 339.3,7.5 339.9,11.2 340.7,14.3 341.9,15.8 340.7,17.3 339.9,20.4 339.3,24.1" fill="#34106a"/><polygon points="350.9,15.8 351.4,7.8 352.0,11.4 352.8,14.4 354.0,15.8 352.8,17.2 352.0,20.2 351.4,23.8" fill="#34106a"/><polygon points="353.9,15.8 354.3,14.9 355.1,15.8 354.3,16.7" fill="#34106a"/><rect x="352.9" y="15.5" width="3.2" height="0.7" fill="#34106a" opacity="0.6"/><polygon points="357.0,15.8 357.5,7.5 358.1,11.2 358.9,14.3 360.1,15.8 358.9,17.3 358.1,20.4 357.5,24.1" fill="#34106a"/><polygon points="360.0,15.8 360.4,14.9 361.2,15.8 360.4,16.7" fill="#34106a"/><rect x="359.0" y="15.5" width="3.2" height="0.7" fill="#34106a" opacity="0.6"/><polygon points="363.0,15.8 363.4,14.5 364.6,15.8 363.4,17.1" fill="#34106a"/><rect x="362.0" y="15.5" width="3.6" height="0.7" fill="#34106a" opacity="0.6"/><polygon points="369.0,15.8 369.4,14.5 370.6,15.8 369.4,17.1" fill="#34106a"/><rect x="368.0" y="15.5" width="3.6" height="0.7" fill="#34106a" opacity="0.6"/><polygon points="375.1,15.8 375.6,7.8 376.2,11.4 377.0,14.4 378.2,15.8 377.0,17.2 376.2,20.2 375.6,23.8" fill="#34106a"/><polygon points="381.1,15.8 381.5,14.5 382.8,15.8 381.5,17.1" fill="#34106a"/><rect x="380.1" y="15.5" width="3.6" height="0.7" fill="#34106a" opacity="0.6"/><polygon points="0.0,44.3 0.5,36.0 1.1,39.7 1.9,42.8 3.1,44.3 1.9,45.8 1.1,48.9 0.5,52.6" fill="#34106a"/><polygon points="3.0,44.3 3.4,43.4 4.2,44.3 3.4,45.2" fill="#34106a"/><rect x="2.0" y="43.9" width="3.2" height="0.7" fill="#34106a" opacity="0.6"/><polygon points="12.1,44.3 12.6,36.3 13.2,39.9 14.0,42.9 15.2,44.3 14.0,45.7 13.2,48.7 12.6,52.3" fill="#34106a"/><polygon points="18.1,44.3 18.6,36.0 19.2,39.7 20.1,42.8 21.3,44.3 20.1,45.8 19.2,48.9 18.6,52.6" fill="#34106a"/><polygon points="21.2,44.3 21.6,43.4 22.4,44.3 21.6,45.2" fill="#34106a"/><rect x="20.2" y="43.9" width="3.2" height="0.7" fill="#34106a" opacity="0.6"/><polygon points="24.2,44.3 24.6,43.0 25.8,44.3 24.6,45.6" fill="#34106a"/><rect x="23.2" y="43.9" width="3.6" height="0.7" fill="#34106a" opacity="0.6"/><polygon points="30.2,44.3 30.6,43.0 31.9,44.3 30.6,45.6" fill="#34106a"/><rect x="29.2" y="43.9" width="3.6" height="0.7" fill="#34106a" opacity="0.6"/><polygon points="36.3,44.3 36.8,36.3 37.4,39.9 38.2,42.9 39.4,44.3 38.2,45.7 37.4,48.7 36.8,52.3" fill="#34106a"/><polygon points="39.3,44.3 39.7,43.4 40.5,44.3 39.7,45.2" fill="#34106a"/><rect x="38.3" y="43.9" width="3.2" height="0.7" fill="#34106a" opacity="0.6"/><polygon points="42.4,44.3 42.8,43.0 44.0,44.3 42.8,45.6" fill="#34106a"/><rect x="41.4" y="43.9" width="3.6" height="0.7" fill="#34106a" opacity="0.6"/><polygon points="48.4,44.3 48.9,36.0 49.5,39.7 50.3,42.8 51.5,44.3 50.3,45.8 49.5,48.9 48.9,52.6" fill="#34106a"/><polygon points="54.5,44.3 54.9,43.0 56.1,44.3 54.9,45.6" fill="#34106a"/><rect x="53.5" y="43.9" width="3.6" height="0.7" fill="#34106a" opacity="0.6"/><polygon points="60.5,44.3 61.0,36.3 61.6,39.9 62.4,42.9 63.6,44.3 62.4,45.7 61.6,48.7 61.0,52.3" fill="#34106a"/><polygon points="63.5,44.3 63.9,43.4 64.7,44.3 63.9,45.2" fill="#34106a"/><rect x="62.5" y="43.9" width="3.2" height="0.7" fill="#34106a" opacity="0.6"/><polygon points="66.5,44.3 67.0,36.0 67.6,39.7 68.5,42.8 69.7,44.3 68.5,45.8 67.6,48.9 67.0,52.6" fill="#34106a"/><polygon points="72.6,44.3 73.0,43.0 74.2,44.3 73.0,45.6" fill="#34106a"/><rect x="71.6" y="43.9" width="3.6" height="0.7" fill="#34106a" opacity="0.6"/><polygon points="78.6,44.3 79.0,43.0 80.2,44.3 79.0,45.6" fill="#34106a"/><rect x="77.6" y="43.9" width="3.6" height="0.7" fill="#34106a" opacity="0.6"/><polygon points="84.7,44.3 85.2,36.3 85.8,39.9 86.6,42.9 87.8,44.3 86.6,45.7 85.8,48.7 85.2,52.3" fill="#34106a"/><polygon points="90.8,44.3 91.2,43.0 92.3,44.3 91.2,45.6" fill="#34106a"/><rect x="89.8" y="43.9" width="3.6" height="0.7" fill="#34106a" opacity="0.6"/><polygon points="96.8,44.3 97.3,36.0 97.9,39.7 98.7,42.8 99.9,44.3 98.7,45.8 97.9,48.9 97.3,52.6" fill="#34106a"/><polygon points="102.9,44.3 103.3,43.0 104.5,44.3 103.3,45.6" fill="#34106a"/><rect x="101.9" y="43.9" width="3.6" height="0.7" fill="#34106a" opacity="0.6"/><polygon points="108.9,44.3 109.4,36.3 110.0,39.9 110.8,42.9 112.0,44.3 110.8,45.7 110.0,48.7 109.4,52.3" fill="#34106a"/><polygon points="115.0,44.3 115.5,36.0 116.1,39.7 116.9,42.8 118.1,44.3 116.9,45.8 116.1,48.9 115.5,52.6" fill="#34106a"/><polygon points="121.0,44.3 121.4,43.0 122.6,44.3 121.4,45.6" fill="#34106a"/><rect x="120.0" y="43.9" width="3.6" height="0.7" fill="#34106a" opacity="0.6"/><polygon points="127.0,44.3 127.4,43.0 128.6,44.3 127.4,45.6" fill="#34106a"/><rect x="126.0" y="43.9" width="3.6" height="0.7" fill="#34106a" opacity="0.6"/><polygon points="130.1,44.3 130.5,43.4 131.3,44.3 130.5,45.2" fill="#34106a"/><rect x="129.1" y="43.9" width="3.2" height="0.7" fill="#34106a" opacity="0.6"/><polygon points="130.1,44.3 130.6,38.3 131.2,41.0 131.8,43.2 132.9,44.3 131.8,45.4 131.2,47.6 130.6,50.3" fill="#34106a"/><polygon points="133.1,44.3 133.6,36.3 134.2,39.9 135.0,42.9 136.2,44.3 135.0,45.7 134.2,48.7 133.6,52.3" fill="#34106a"/><polygon points="136.1,44.3 136.5,43.4 137.3,44.3 136.5,45.2" fill="#34106a"/><rect x="135.1" y="43.9" width="3.2" height="0.7" fill="#34106a" opacity="0.6"/><polygon points="139.1,44.3 139.5,43.0 140.7,44.3 139.5,45.6" fill="#34106a"/><rect x="138.1" y="43.9" width="3.6" height="0.7" fill="#34106a" opacity="0.6"/><polygon points="145.2,44.3 145.7,36.0 146.3,39.7 147.1,42.8 148.3,44.3 147.1,45.8 146.3,48.9 145.7,52.6" fill="#34106a"/><polygon points="151.2,44.3 151.7,43.0 152.8,44.3 151.7,45.6" fill="#34106a"/><rect x="150.2" y="43.9" width="3.6" height="0.7" fill="#34106a" opacity="0.6"/><polygon points="157.3,44.3 157.8,36.3 158.4,39.9 159.2,42.9 160.4,44.3 159.2,45.7 158.4,48.7 157.8,52.3" fill="#34106a"/><polygon points="163.4,44.3 163.9,36.0 164.5,39.7 165.3,42.8 166.5,44.3 165.3,45.8 164.5,48.9 163.9,52.6" fill="#34106a"/><polygon points="169.4,44.3 169.8,43.0 171.0,44.3 169.8,45.6" fill="#34106a"/><rect x="168.4" y="43.9" width="3.6" height="0.7" fill="#34106a" opacity="0.6"/><polygon points="175.5,44.3 175.9,43.0 177.1,44.3 175.9,45.6" fill="#34106a"/><rect x="174.5" y="43.9" width="3.6" height="0.7" fill="#34106a" opacity="0.6"/><polygon points="178.5,44.3 178.9,43.4 179.7,44.3 178.9,45.2" fill="#34106a"/><rect x="177.5" y="43.9" width="3.2" height="0.7" fill="#34106a" opacity="0.6"/><polygon points="178.5,44.3 179.0,38.3 179.6,41.0 180.2,43.2 181.3,44.3 180.2,45.4 179.6,47.6 179.0,50.3" fill="#34106a"/><polygon points="181.5,44.3 182.0,36.3 182.6,39.9 183.4,42.9 184.6,44.3 183.4,45.7 182.6,48.7 182.0,52.3" fill="#34106a"/><polygon points="193.6,44.3 194.1,36.0 194.7,39.7 195.5,42.8 196.7,44.3 195.5,45.8 194.7,48.9 194.1,52.6" fill="#34106a"/><polygon points="196.6,44.3 197.0,43.4 197.8,44.3 197.0,45.2" fill="#34106a"/><rect x="195.6" y="43.9" width="3.2" height="0.7" fill="#34106a" opacity="0.6"/><polygon points="205.7,44.3 206.2,36.3 206.8,39.9 207.6,42.9 208.8,44.3 207.6,45.7 206.8,48.7 206.2,52.3" fill="#34106a"/><polygon points="211.8,44.3 212.2,36.0 212.8,39.7 213.7,42.8 214.9,44.3 213.7,45.8 212.8,48.9 212.2,52.6" fill="#34106a"/><polygon points="214.8,44.3 215.2,43.4 216.0,44.3 215.2,45.2" fill="#34106a"/><rect x="213.8" y="43.9" width="3.2" height="0.7" fill="#34106a" opacity="0.6"/><polygon points="229.9,44.3 230.4,36.3 231.0,39.9 231.8,42.9 233.0,44.3 231.8,45.7 231.0,48.7 230.4,52.3" fill="#34106a"/><polygon points="232.9,44.3 233.3,43.4 234.1,44.3 233.3,45.2" fill="#34106a"/><rect x="231.9" y="43.9" width="3.2" height="0.7" fill="#34106a" opacity="0.6"/><polygon points="242.0,44.3 242.5,36.0 243.1,39.7 243.9,42.8 245.1,44.3 243.9,45.8 243.1,48.9 242.5,52.6" fill="#34106a"/><polygon points="245.0,44.3 245.4,43.4 246.2,44.3 245.4,45.2" fill="#34106a"/><rect x="244.0" y="43.9" width="3.2" height="0.7" fill="#34106a" opacity="0.6"/><polygon points="248.0,44.3 248.4,43.0 249.6,44.3 248.4,45.6" fill="#34106a"/><rect x="247.0" y="43.9" width="3.6" height="0.7" fill="#34106a" opacity="0.6"/><polygon points="254.1,44.3 254.6,36.3 255.2,39.9 256.0,42.9 257.2,44.3 256.0,45.7 255.2,48.7 254.6,52.3" fill="#34106a"/><polygon points="257.1,44.3 257.5,43.4 258.3,44.3 257.5,45.2" fill="#34106a"/><rect x="256.1" y="43.9" width="3.2" height="0.7" fill="#34106a" opacity="0.6"/><polygon points="260.1,44.3 260.6,36.0 261.2,39.7 262.1,42.8 263.3,44.3 262.1,45.8 261.2,48.9 260.6,52.6" fill="#34106a"/><polygon points="266.2,44.3 266.6,43.0 267.8,44.3 266.6,45.6" fill="#34106a"/><rect x="265.2" y="43.9" width="3.6" height="0.7" fill="#34106a" opacity="0.6"/><polygon points="272.2,44.3 272.6,43.0 273.9,44.3 272.6,45.6" fill="#34106a"/><rect x="271.2" y="43.9" width="3.6" height="0.7" fill="#34106a" opacity="0.6"/><polygon points="275.3,44.3 275.7,43.4 276.5,44.3 275.7,45.2" fill="#34106a"/><rect x="274.3" y="43.9" width="3.2" height="0.7" fill="#34106a" opacity="0.6"/><polygon points="275.3,44.3 275.8,38.3 276.4,41.0 277.0,43.2 278.1,44.3 277.0,45.4 276.4,47.6 275.8,50.3" fill="#34106a"/><polygon points="278.3,44.3 278.8,36.3 279.4,39.9 280.2,42.9 281.4,44.3 280.2,45.7 279.4,48.7 278.8,52.3" fill="#34106a"/><polygon points="290.4,44.3 290.9,36.0 291.5,39.7 292.3,42.8 293.5,44.3 292.3,45.8 291.5,48.9 290.9,52.6" fill="#34106a"/><polygon points="299.5,44.3 299.9,43.4 300.7,44.3 299.9,45.2" fill="#34106a"/><rect x="298.5" y="43.9" width="3.2" height="0.7" fill="#34106a" opacity="0.6"/><polygon points="302.5,44.3 303.0,36.3 303.6,39.9 304.4,42.9 305.6,44.3 304.4,45.7 303.6,48.7 303.0,52.3" fill="#34106a"/><polygon points="308.5,44.3 309.0,36.0 309.6,39.7 310.5,42.8 311.7,44.3 310.5,45.8 309.6,48.9 309.0,52.6" fill="#34106a"/><polygon points="317.6,44.3 318.0,43.4 318.8,44.3 318.0,45.2" fill="#34106a"/><rect x="316.6" y="43.9" width="3.2" height="0.7" fill="#34106a" opacity="0.6"/><polygon points="320.6,44.3 321.0,43.0 322.2,44.3 321.0,45.6" fill="#34106a"/><rect x="319.6" y="43.9" width="3.6" height="0.7" fill="#34106a" opacity="0.6"/><polygon points="326.7,44.3 327.2,36.3 327.8,39.9 328.6,42.9 329.8,44.3 328.6,45.7 327.8,48.7 327.2,52.3" fill="#34106a"/><polygon points="332.8,44.3 333.1,43.0 334.4,44.3 333.1,45.6" fill="#34106a"/><rect x="331.8" y="43.9" width="3.6" height="0.7" fill="#34106a" opacity="0.6"/><polygon points="338.8,44.3 339.3,36.0 339.9,39.7 340.7,42.8 341.9,44.3 340.7,45.8 339.9,48.9 339.3,52.6" fill="#34106a"/><polygon points="350.9,44.3 351.4,36.3 352.0,39.9 352.8,42.9 354.0,44.3 352.8,45.7 352.0,48.7 351.4,52.3" fill="#34106a"/><polygon points="353.9,44.3 354.3,43.4 355.1,44.3 354.3,45.2" fill="#34106a"/><rect x="352.9" y="43.9" width="3.2" height="0.7" fill="#34106a" opacity="0.6"/><polygon points="357.0,44.3 357.5,36.0 358.1,39.7 358.9,42.8 360.1,44.3 358.9,45.8 358.1,48.9 357.5,52.6" fill="#34106a"/><polygon points="360.0,44.3 360.4,43.4 361.2,44.3 360.4,45.2" fill="#34106a"/><rect x="359.0" y="43.9" width="3.2" height="0.7" fill="#34106a" opacity="0.6"/><polygon points="363.0,44.3 363.4,43.0 364.6,44.3 363.4,45.6" fill="#34106a"/><rect x="362.0" y="43.9" width="3.6" height="0.7" fill="#34106a" opacity="0.6"/><polygon points="369.0,44.3 369.4,43.0 370.6,44.3 369.4,45.6" fill="#34106a"/><rect x="368.0" y="43.9" width="3.6" height="0.7" fill="#34106a" opacity="0.6"/><polygon points="375.1,44.3 375.6,36.3 376.2,39.9 377.0,42.9 378.2,44.3 377.0,45.7 376.2,48.7 375.6,52.3" fill="#34106a"/><polygon points="381.1,44.3 381.5,43.0 382.8,44.3 381.5,45.6" fill="#34106a"/><rect x="380.1" y="43.9" width="3.6" height="0.7" fill="#34106a" opacity="0.6"/></svg>
<svg style="position:absolute;left:593px;top:48px" width="81" height="9" viewBox="0 0 81 9"><polygon points="0,0 81,0 74,8.5 0,8.5" fill="#33195c"/></svg>
<div style="left:594.5px;top:45.8px;height:14px;line-height:14px;font-size:7px;color:#e2e2e2;font-weight:normal;white-space:nowrap;">07 Locavore Drums 02</div>
<svg style="position:absolute;left:593px;top:100px" width="22" height="8" viewBox="0 0 22 8"><polygon points="0,0 13,0 19,7.5 0,7.5" fill="#33195c"/><circle cx="6.5" cy="4" r="1.7" fill="none" stroke="#ccc" stroke-width="0.8"/></svg>
<div style="left:981px;top:48px;width:194px;height:59px;background:#6b21b3;"></div>
<svg style="position:absolute;left:981px;top:48px" width="194" height="59" viewBox="0 0 194 59"><polygon points="0.0,15.8 0.5,7.5 1.1,11.2 1.9,14.3 3.1,15.8 1.9,17.3 1.1,20.4 0.5,24.1" fill="#34106a"/><polygon points="6.0,15.8 6.4,14.5 7.6,15.8 6.4,17.1" fill="#34106a"/><rect x="5.0" y="15.5" width="3.6" height="0.7" fill="#34106a" opacity="0.6"/><polygon points="12.1,15.8 12.6,7.8 13.2,11.4 14.0,14.4 15.2,15.8 14.0,17.2 13.2,20.2 12.6,23.8" fill="#34106a"/><polygon points="18.1,15.8 18.6,7.5 19.2,11.2 20.1,14.3 21.3,15.8 20.1,17.3 19.2,20.4 18.6,24.1" fill="#34106a"/><polygon points="24.2,15.8 24.6,14.5 25.8,15.8 24.6,17.1" fill="#34106a"/><rect x="23.2" y="15.5" width="3.6" height="0.7" fill="#34106a" opacity="0.6"/><polygon points="30.2,15.8 30.6,14.5 31.9,15.8 30.6,17.1" fill="#34106a"/><rect x="29.2" y="15.5" width="3.6" height="0.7" fill="#34106a" opacity="0.6"/><polygon points="36.3,15.8 36.8,7.8 37.4,11.4 38.2,14.4 39.4,15.8 38.2,17.2 37.4,20.2 36.8,23.8" fill="#34106a"/><polygon points="42.4,15.8 42.8,14.5 44.0,15.8 42.8,17.1" fill="#34106a"/><rect x="41.4" y="15.5" width="3.6" height="0.7" fill="#34106a" opacity="0.6"/><polygon points="45.4,15.8 45.8,14.9 46.6,15.8 45.8,16.7" fill="#34106a"/><rect x="44.4" y="15.5" width="3.2" height="0.7" fill="#34106a" opacity="0.6"/><polygon points="48.4,15.8 48.9,7.5 49.5,11.2 50.3,14.3 51.5,15.8 50.3,17.3 49.5,20.4 48.9,24.1" fill="#34106a"/><polygon points="54.5,15.8 54.9,14.5 56.1,15.8 54.9,17.1" fill="#34106a"/><rect x="53.5" y="15.5" width="3.6" height="0.7" fill="#34106a" opacity="0.6"/><polygon points="60.5,15.8 61.0,7.8 61.6,11.4 62.4,14.4 63.6,15.8 62.4,17.2 61.6,20.2 61.0,23.8" fill="#34106a"/><polygon points="66.5,15.8 67.0,7.5 67.6,11.2 68.5,14.3 69.7,15.8 68.5,17.3 67.6,20.4 67.0,24.1" fill="#34106a"/><polygon points="72.6,15.8 73.0,14.5 74.2,15.8 73.0,17.1" fill="#34106a"/><rect x="71.6" y="15.5" width="3.6" height="0.7" fill="#34106a" opacity="0.6"/><polygon points="78.7,15.8 79.1,14.5 80.3,15.8 79.1,17.1" fill="#34106a"/><rect x="77.7" y="15.5" width="3.6" height="0.7" fill="#34106a" opacity="0.6"/><polygon points="84.7,15.8 85.2,7.8 85.8,11.4 86.6,14.4 87.8,15.8 86.6,17.2 85.8,20.2 85.2,23.8" fill="#34106a"/><polygon points="87.7,15.8 88.1,14.9 88.9,15.8 88.1,16.7" fill="#34106a"/><rect x="86.7" y="15.5" width="3.2" height="0.7" fill="#34106a" opacity="0.6"/><polygon points="87.7,15.8 88.2,9.3 88.8,12.2 89.6,14.6 90.8,15.8 89.6,17.0 88.8,19.4 88.2,22.3" fill="#34106a"/><polygon points="90.8,15.8 91.2,14.5 92.3,15.8 91.2,17.1" fill="#34106a"/><rect x="89.8" y="15.5" width="3.6" height="0.7" fill="#34106a" opacity="0.6"/><polygon points="96.8,15.8 97.3,7.5 97.9,11.2 98.7,14.3 99.9,15.8 98.7,17.3 97.9,20.4 97.3,24.1" fill="#34106a"/><polygon points="102.8,15.8 103.2,14.5 104.4,15.8 103.2,17.1" fill="#34106a"/><rect x="101.8" y="15.5" width="3.6" height="0.7" fill="#34106a" opacity="0.6"/><polygon points="108.9,15.8 109.4,7.8 110.0,11.4 110.8,14.4 112.0,15.8 110.8,17.2 110.0,20.2 109.4,23.8" fill="#34106a"/><polygon points="111.9,15.8 112.3,14.9 113.1,15.8 112.3,16.7" fill="#34106a"/><rect x="110.9" y="15.5" width="3.2" height="0.7" fill="#34106a" opacity="0.6"/><polygon points="115.0,15.8 115.5,7.5 116.1,11.2 116.9,14.3 118.1,15.8 116.9,17.3 116.1,20.4 115.5,24.1" fill="#34106a"/><polygon points="121.0,15.8 121.4,14.5 122.6,15.8 121.4,17.1" fill="#34106a"/><rect x="120.0" y="15.5" width="3.6" height="0.7" fill="#34106a" opacity="0.6"/><polygon points="124.0,15.8 124.5,9.3 125.1,12.2 125.9,14.6 127.1,15.8 125.9,17.0 125.1,19.4 124.5,22.3" fill="#34106a"/><polygon points="127.0,15.8 127.4,14.5 128.6,15.8 127.4,17.1" fill="#34106a"/><rect x="126.0" y="15.5" width="3.6" height="0.7" fill="#34106a" opacity="0.6"/><polygon points="133.1,15.8 133.6,7.8 134.2,11.4 135.0,14.4 136.2,15.8 135.0,17.2 134.2,20.2 133.6,23.8" fill="#34106a"/><polygon points="145.2,15.8 145.7,7.5 146.3,11.2 147.1,14.3 148.3,15.8 147.1,17.3 146.3,20.4 145.7,24.1" fill="#34106a"/><polygon points="151.2,15.8 151.7,14.5 152.8,15.8 151.7,17.1" fill="#34106a"/><rect x="150.2" y="15.5" width="3.6" height="0.7" fill="#34106a" opacity="0.6"/><polygon points="157.3,15.8 157.8,7.8 158.4,11.4 159.2,14.4 160.4,15.8 159.2,17.2 158.4,20.2 157.8,23.8" fill="#34106a"/><polygon points="163.3,15.8 163.8,7.5 164.4,11.2 165.3,14.3 166.5,15.8 165.3,17.3 164.4,20.4 163.8,24.1" fill="#34106a"/><polygon points="169.4,15.8 169.8,14.5 171.0,15.8 169.8,17.1" fill="#34106a"/><rect x="168.4" y="15.5" width="3.6" height="0.7" fill="#34106a" opacity="0.6"/><polygon points="175.5,15.8 175.9,14.5 177.1,15.8 175.9,17.1" fill="#34106a"/><rect x="174.5" y="15.5" width="3.6" height="0.7" fill="#34106a" opacity="0.6"/><polygon points="181.5,15.8 182.0,7.8 182.6,11.4 183.4,14.4 184.6,15.8 183.4,17.2 182.6,20.2 182.0,23.8" fill="#34106a"/><polygon points="187.5,15.8 187.9,14.5 189.1,15.8 187.9,17.1" fill="#34106a"/><rect x="186.5" y="15.5" width="3.6" height="0.7" fill="#34106a" opacity="0.6"/><polygon points="0.0,44.3 0.5,36.0 1.1,39.7 1.9,42.8 3.1,44.3 1.9,45.8 1.1,48.9 0.5,52.6" fill="#34106a"/><polygon points="6.0,44.3 6.4,43.0 7.6,44.3 6.4,45.6" fill="#34106a"/><rect x="5.0" y="43.9" width="3.6" height="0.7" fill="#34106a" opacity="0.6"/><polygon points="12.1,44.3 12.6,36.3 13.2,39.9 14.0,42.9 15.2,44.3 14.0,45.7 13.2,48.7 12.6,52.3" fill="#34106a"/><polygon points="18.1,44.3 18.6,36.0 19.2,39.7 20.1,42.8 21.3,44.3 20.1,45.8 19.2,48.9 18.6,52.6" fill="#34106a"/><polygon points="24.2,44.3 24.6,43.0 25.8,44.3 24.6,45.6" fill="#34106a"/><rect x="23.2" y="43.9" width="3.6" height="0.7" fill="#34106a" opacity="0.6"/><polygon points="30.2,44.3 30.6,43.0 31.9,44.3 30.6,45.6" fill="#34106a"/><rect x="29.2" y="43.9" width="3.6" height="0.7" fill="#34106a" opacity="0.6"/><polygon points="36.3,44.3 36.8,36.3 37.4,39.9 38.2,42.9 39.4,44.3 38.2,45.7 37.4,48.7 36.8,52.3" fill="#34106a"/><polygon points="42.4,44.3 42.8,43.0 44.0,44.3 42.8,45.6" fill="#34106a"/><rect x="41.4" y="43.9" width="3.6" height="0.7" fill="#34106a" opacity="0.6"/><polygon points="45.4,44.3 45.8,43.4 46.6,44.3 45.8,45.2" fill="#34106a"/><rect x="44.4" y="43.9" width="3.2" height="0.7" fill="#34106a" opacity="0.6"/><polygon points="48.4,44.3 48.9,36.0 49.5,39.7 50.3,42.8 51.5,44.3 50.3,45.8 49.5,48.9 48.9,52.6" fill="#34106a"/><polygon points="54.5,44.3 54.9,43.0 56.1,44.3 54.9,45.6" fill="#34106a"/><rect x="53.5" y="43.9" width="3.6" height="0.7" fill="#34106a" opacity="0.6"/><polygon points="60.5,44.3 61.0,36.3 61.6,39.9 62.4,42.9 63.6,44.3 62.4,45.7 61.6,48.7 61.0,52.3" fill="#34106a"/><polygon points="66.5,44.3 67.0,36.0 67.6,39.7 68.5,42.8 69.7,44.3 68.5,45.8 67.6,48.9 67.0,52.6" fill="#34106a"/><polygon points="72.6,44.3 73.0,43.0 74.2,44.3 73.0,45.6" fill="#34106a"/><rect x="71.6" y="43.9" width="3.6" height="0.7" fill="#34106a" opacity="0.6"/><polygon points="78.7,44.3 79.1,43.0 80.3,44.3 79.1,45.6" fill="#34106a"/><rect x="77.7" y="43.9" width="3.6" height="0.7" fill="#34106a" opacity="0.6"/><polygon points="84.7,44.3 85.2,36.3 85.8,39.9 86.6,42.9 87.8,44.3 86.6,45.7 85.8,48.7 85.2,52.3" fill="#34106a"/><polygon points="87.7,44.3 88.1,43.4 88.9,44.3 88.1,45.2" fill="#34106a"/><rect x="86.7" y="43.9" width="3.2" height="0.7" fill="#34106a" opacity="0.6"/><polygon points="87.7,44.3 88.2,37.8 88.8,40.7 89.6,43.1 90.8,44.3 89.6,45.5 88.8,47.9 88.2,50.8" fill="#34106a"/><polygon points="90.8,44.3 91.2,43.0 92.3,44.3 91.2,45.6" fill="#34106a"/><rect x="89.8" y="43.9" width="3.6" height="0.7" fill="#34106a" opacity="0.6"/><polygon points="96.8,44.3 97.3,36.0 97.9,39.7 98.7,42.8 99.9,44.3 98.7,45.8 97.9,48.9 97.3,52.6" fill="#34106a"/><polygon points="102.8,44.3 103.2,43.0 104.4,44.3 103.2,45.6" fill="#34106a"/><rect x="101.8" y="43.9" width="3.6" height="0.7" fill="#34106a" opacity="0.6"/><polygon points="108.9,44.3 109.4,36.3 110.0,39.9 110.8,42.9 112.0,44.3 110.8,45.7 110.0,48.7 109.4,52.3" fill="#34106a"/><polygon points="111.9,44.3 112.3,43.4 113.1,44.3 112.3,45.2" fill="#34106a"/><rect x="110.9" y="43.9" width="3.2" height="0.7" fill="#34106a" opacity="0.6"/><polygon points="115.0,44.3 115.5,36.0 116.1,39.7 116.9,42.8 118.1,44.3 116.9,45.8 116.1,48.9 115.5,52.6" fill="#34106a"/><polygon points="121.0,44.3 121.4,43.0 122.6,44.3 121.4,45.6" fill="#34106a"/><rect x="120.0" y="43.9" width="3.6" height="0.7" fill="#34106a" opacity="0.6"/><polygon points="124.0,44.3 124.5,37.8 125.1,40.7 125.9,43.1 127.1,44.3 125.9,45.5 125.1,47.9 124.5,50.8" fill="#34106a"/><polygon points="127.0,44.3 127.4,43.0 128.6,44.3 127.4,45.6" fill="#34106a"/><rect x="126.0" y="43.9" width="3.6" height="0.7" fill="#34106a" opacity="0.6"/><polygon points="133.1,44.3 133.6,36.3 134.2,39.9 135.0,42.9 136.2,44.3 135.0,45.7 134.2,48.7 133.6,52.3" fill="#34106a"/><polygon points="145.2,44.3 145.7,36.0 146.3,39.7 147.1,42.8 148.3,44.3 147.1,45.8 146.3,48.9 145.7,52.6" fill="#34106a"/><polygon points="151.2,44.3 151.7,43.0 152.8,44.3 151.7,45.6" fill="#34106a"/><rect x="150.2" y="43.9" width="3.6" height="0.7" fill="#34106a" opacity="0.6"/><polygon points="157.3,44.3 157.8,36.3 158.4,39.9 159.2,42.9 160.4,44.3 159.2,45.7 158.4,48.7 157.8,52.3" fill="#34106a"/><polygon points="163.3,44.3 163.8,36.0 164.4,39.7 165.3,42.8 166.5,44.3 165.3,45.8 164.4,48.9 163.8,52.6" fill="#34106a"/><polygon points="169.4,44.3 169.8,43.0 171.0,44.3 169.8,45.6" fill="#34106a"/><rect x="168.4" y="43.9" width="3.6" height="0.7" fill="#34106a" opacity="0.6"/><polygon points="175.5,44.3 175.9,43.0 177.1,44.3 175.9,45.6" fill="#34106a"/><rect x="174.5" y="43.9" width="3.6" height="0.7" fill="#34106a" opacity="0.6"/><polygon points="181.5,44.3 182.0,36.3 182.6,39.9 183.4,42.9 184.6,44.3 183.4,45.7 182.6,48.7 182.0,52.3" fill="#34106a"/><polygon points="187.5,44.3 187.9,43.0 189.1,44.3 187.9,45.6" fill="#34106a"/><rect x="186.5" y="43.9" width="3.6" height="0.7" fill="#34106a" opacity="0.6"/></svg>
<svg style="position:absolute;left:981px;top:48px" width="81" height="9" viewBox="0 0 81 9"><polygon points="0,0 81,0 74,8.5 0,8.5" fill="#33195c"/></svg>
<div style="left:982.5px;top:45.8px;height:14px;line-height:14px;font-size:7px;color:#e2e2e2;font-weight:normal;white-space:nowrap;">07 Locavore Drums 03</div>
<svg style="position:absolute;left:981px;top:100px" width="22" height="8" viewBox="0 0 22 8"><polygon points="0,0 13,0 19,7.5 0,7.5" fill="#33195c"/><circle cx="6.5" cy="4" r="1.7" fill="none" stroke="#ccc" stroke-width="0.8"/></svg>
<div style="left:207px;top:108px;width:386px;height:59px;background:#d4d4d4;"></div>
<svg style="position:absolute;left:207px;top:108px" width="386" height="59" viewBox="0 0 386 59"><rect x="0" y="15.4" width="386" height="0.8" fill="#a8a8a8"/><polygon points="0.0,15.8 0.5,10.8 1.1,13.1 1.8,14.9 2.9,15.8 1.8,16.7 1.1,18.6 0.5,20.8" fill="#3c3c3c"/><polygon points="18.2,15.8 18.7,10.8 19.3,13.1 19.9,14.9 21.0,15.8 19.9,16.7 19.3,18.6 18.7,20.8" fill="#3c3c3c"/><polygon points="30.2,15.8 30.8,11.3 31.4,13.3 31.9,15.0 32.9,15.8 31.9,16.6 31.4,18.3 30.8,20.3" fill="#3c3c3c"/><polygon points="48.4,15.8 48.9,10.8 49.5,13.1 50.2,14.9 51.3,15.8 50.2,16.7 49.5,18.6 48.9,20.8" fill="#3c3c3c"/><polygon points="66.6,15.8 67.1,10.8 67.7,13.1 68.3,14.9 69.4,15.8 68.3,16.7 67.7,18.6 67.1,20.8" fill="#3c3c3c"/><polygon points="96.8,15.8 97.3,10.8 97.9,13.1 98.6,14.9 99.7,15.8 98.6,16.7 97.9,18.6 97.3,20.8" fill="#3c3c3c"/><polygon points="114.9,15.8 115.4,10.8 116.0,13.1 116.7,14.9 117.8,15.8 116.7,16.7 116.0,18.6 115.4,20.8" fill="#3c3c3c"/><polygon points="127.1,15.8 127.6,11.3 128.2,13.3 128.7,15.0 129.7,15.8 128.7,16.6 128.2,18.3 127.6,20.3" fill="#3c3c3c"/><polygon points="130.1,15.8 130.6,11.3 131.2,13.3 131.7,15.0 132.7,15.8 131.7,16.6 131.2,18.3 130.6,20.3" fill="#3c3c3c"/><polygon points="145.2,15.8 145.7,10.8 146.3,13.1 147.0,14.9 148.1,15.8 147.0,16.7 146.3,18.6 145.7,20.8" fill="#3c3c3c"/><polygon points="163.4,15.8 163.9,10.8 164.5,13.1 165.1,14.9 166.2,15.8 165.1,16.7 164.5,18.6 163.9,20.8" fill="#3c3c3c"/><polygon points="178.5,15.8 179.0,11.3 179.6,13.3 180.1,15.0 181.1,15.8 180.1,16.6 179.6,18.3 179.0,20.3" fill="#3c3c3c"/><polygon points="193.6,15.8 194.1,10.8 194.7,13.1 195.4,14.9 196.5,15.8 195.4,16.7 194.7,18.6 194.1,20.8" fill="#3c3c3c"/><polygon points="199.6,15.8 200.1,11.3 200.7,13.3 201.2,15.0 202.2,15.8 201.2,16.6 200.7,18.3 200.1,20.3" fill="#3c3c3c"/><polygon points="211.8,15.8 212.2,10.8 212.8,13.1 213.5,14.9 214.6,15.8 213.5,16.7 212.8,18.6 212.2,20.8" fill="#3c3c3c"/><polygon points="223.9,15.8 224.4,11.3 225.0,13.3 225.5,15.0 226.5,15.8 225.5,16.6 225.0,18.3 224.4,20.3" fill="#3c3c3c"/><polygon points="242.0,15.8 242.5,10.8 243.1,13.1 243.8,14.9 244.9,15.8 243.8,16.7 243.1,18.6 242.5,20.8" fill="#3c3c3c"/><polygon points="248.0,15.8 248.5,11.3 249.1,13.3 249.6,15.0 250.6,15.8 249.6,16.6 249.1,18.3 248.5,20.3" fill="#3c3c3c"/><polygon points="260.1,15.8 260.6,10.8 261.2,13.1 261.9,14.9 263.0,15.8 261.9,16.7 261.2,18.6 260.6,20.8" fill="#3c3c3c"/><polygon points="290.4,15.8 290.9,10.8 291.5,13.1 292.2,14.9 293.3,15.8 292.2,16.7 291.5,18.6 290.9,20.8" fill="#3c3c3c"/><polygon points="308.5,15.8 309.0,10.8 309.6,13.1 310.3,14.9 311.4,15.8 310.3,16.7 309.6,18.6 309.0,20.8" fill="#3c3c3c"/><polygon points="320.6,15.8 321.1,11.3 321.8,13.3 322.2,15.0 323.2,15.8 322.2,16.6 321.8,18.3 321.1,20.3" fill="#3c3c3c"/><polygon points="323.7,15.8 324.2,11.3 324.8,13.3 325.3,15.0 326.3,15.8 325.3,16.6 324.8,18.3 324.2,20.3" fill="#3c3c3c"/><polygon points="338.8,15.8 339.3,10.8 339.9,13.1 340.6,14.9 341.7,15.8 340.6,16.7 339.9,18.6 339.3,20.8" fill="#3c3c3c"/><polygon points="357.0,15.8 357.5,10.8 358.1,13.1 358.7,14.9 359.8,15.8 358.7,16.7 358.1,18.6 357.5,20.8" fill="#3c3c3c"/><polygon points="369.0,15.8 369.5,11.3 370.1,13.3 370.6,15.0 371.6,15.8 370.6,16.6 370.1,18.3 369.5,20.3" fill="#3c3c3c"/><polygon points="372.1,15.8 372.6,11.3 373.2,13.3 373.7,15.0 374.7,15.8 373.7,16.6 373.2,18.3 372.6,20.3" fill="#3c3c3c"/><rect x="0" y="43.9" width="386" height="0.8" fill="#a8a8a8"/><polygon points="0.0,44.3 0.5,39.3 1.1,41.5 1.8,43.4 2.9,44.3 1.8,45.2 1.1,47.0 0.5,49.3" fill="#3c3c3c"/><polygon points="18.2,44.3 18.7,39.3 19.3,41.5 19.9,43.4 21.0,44.3 19.9,45.2 19.3,47.0 18.7,49.3" fill="#3c3c3c"/><polygon points="30.2,44.3 30.8,39.8 31.4,41.8 31.9,43.5 32.9,44.3 31.9,45.1 31.4,46.8 30.8,48.8" fill="#3c3c3c"/><polygon points="48.4,44.3 48.9,39.3 49.5,41.5 50.2,43.4 51.3,44.3 50.2,45.2 49.5,47.0 48.9,49.3" fill="#3c3c3c"/><polygon points="66.6,44.3 67.1,39.3 67.7,41.5 68.3,43.4 69.4,44.3 68.3,45.2 67.7,47.0 67.1,49.3" fill="#3c3c3c"/><polygon points="96.8,44.3 97.3,39.3 97.9,41.5 98.6,43.4 99.7,44.3 98.6,45.2 97.9,47.0 97.3,49.3" fill="#3c3c3c"/><polygon points="114.9,44.3 115.4,39.3 116.0,41.5 116.7,43.4 117.8,44.3 116.7,45.2 116.0,47.0 115.4,49.3" fill="#3c3c3c"/><polygon points="127.1,44.3 127.6,39.8 128.2,41.8 128.7,43.5 129.7,44.3 128.7,45.1 128.2,46.8 127.6,48.8" fill="#3c3c3c"/><polygon points="130.1,44.3 130.6,39.8 131.2,41.8 131.7,43.5 132.7,44.3 131.7,45.1 131.2,46.8 130.6,48.8" fill="#3c3c3c"/><polygon points="145.2,44.3 145.7,39.3 146.3,41.5 147.0,43.4 148.1,44.3 147.0,45.2 146.3,47.0 145.7,49.3" fill="#3c3c3c"/><polygon points="163.4,44.3 163.9,39.3 164.5,41.5 165.1,43.4 166.2,44.3 165.1,45.2 164.5,47.0 163.9,49.3" fill="#3c3c3c"/><polygon points="178.5,44.3 179.0,39.8 179.6,41.8 180.1,43.5 181.1,44.3 180.1,45.1 179.6,46.8 179.0,48.8" fill="#3c3c3c"/><polygon points="193.6,44.3 194.1,39.3 194.7,41.5 195.4,43.4 196.5,44.3 195.4,45.2 194.7,47.0 194.1,49.3" fill="#3c3c3c"/><polygon points="199.6,44.3 200.1,39.8 200.7,41.8 201.2,43.5 202.2,44.3 201.2,45.1 200.7,46.8 200.1,48.8" fill="#3c3c3c"/><polygon points="211.8,44.3 212.2,39.3 212.8,41.5 213.5,43.4 214.6,44.3 213.5,45.2 212.8,47.0 212.2,49.3" fill="#3c3c3c"/><polygon points="223.9,44.3 224.4,39.8 225.0,41.8 225.5,43.5 226.5,44.3 225.5,45.1 225.0,46.8 224.4,48.8" fill="#3c3c3c"/><polygon points="242.0,44.3 242.5,39.3 243.1,41.5 243.8,43.4 244.9,44.3 243.8,45.2 243.1,47.0 242.5,49.3" fill="#3c3c3c"/><polygon points="248.0,44.3 248.5,39.8 249.1,41.8 249.6,43.5 250.6,44.3 249.6,45.1 249.1,46.8 248.5,48.8" fill="#3c3c3c"/><polygon points="260.1,44.3 260.6,39.3 261.2,41.5 261.9,43.4 263.0,44.3 261.9,45.2 261.2,47.0 260.6,49.3" fill="#3c3c3c"/><polygon points="290.4,44.3 290.9,39.3 291.5,41.5 292.2,43.4 293.3,44.3 292.2,45.2 291.5,47.0 290.9,49.3" fill="#3c3c3c"/><polygon points="308.5,44.3 309.0,39.3 309.6,41.5 310.3,43.4 311.4,44.3 310.3,45.2 309.6,47.0 309.0,49.3" fill="#3c3c3c"/><polygon points="320.6,44.3 321.1,39.8 321.8,41.8 322.2,43.5 323.2,44.3 322.2,45.1 321.8,46.8 321.1,48.8" fill="#3c3c3c"/><polygon points="323.7,44.3 324.2,39.8 324.8,41.8 325.3,43.5 326.3,44.3 325.3,45.1 324.8,46.8 324.2,48.8" fill="#3c3c3c"/><polygon points="338.8,44.3 339.3,39.3 339.9,41.5 340.6,43.4 341.7,44.3 340.6,45.2 339.9,47.0 339.3,49.3" fill="#3c3c3c"/><polygon points="357.0,44.3 357.5,39.3 358.1,41.5 358.7,43.4 359.8,44.3 358.7,45.2 358.1,47.0 357.5,49.3" fill="#3c3c3c"/><polygon points="369.0,44.3 369.5,39.8 370.1,41.8 370.6,43.5 371.6,44.3 370.6,45.1 370.1,46.8 369.5,48.8" fill="#3c3c3c"/><polygon points="372.1,44.3 372.6,39.8 373.2,41.8 373.7,43.5 374.7,44.3 373.7,45.1 373.2,46.8 372.6,48.8" fill="#3c3c3c"/></svg>
<svg style="position:absolute;left:207px;top:108px" width="59" height="9" viewBox="0 0 59 9"><polygon points="0,0 59,0 52,8.5 0,8.5" fill="#4a4a4a"/></svg>
<div style="left:208.5px;top:105.8px;height:14px;line-height:14px;font-size:7px;color:#e2e2e2;font-weight:normal;white-space:nowrap;">07 Bam Kick 01</div>
<svg style="position:absolute;left:207px;top:160px" width="22" height="8" viewBox="0 0 22 8"><polygon points="0,0 13,0 19,7.5 0,7.5" fill="#4a4a4a"/><circle cx="6.5" cy="4" r="1.7" fill="none" stroke="#ccc" stroke-width="0.8"/></svg>
<svg style="position:absolute;left:207px;top:109px" width="5" height="5" viewBox="0 0 5 5"><polygon points="0,0 4.5,0 0,4.5" fill="#eee"/></svg>
<div style="left:593px;top:108px;width:388px;height:59px;background:#d4d4d4;"></div>
<svg style="position:absolute;left:593px;top:108px" width="388" height="59" viewBox="0 0 388 59"><rect x="0" y="15.4" width="388" height="0.8" fill="#a8a8a8"/><polygon points="0.0,15.8 0.5,10.8 1.1,13.1 1.8,14.9 2.9,15.8 1.8,16.7 1.1,18.6 0.5,20.8" fill="#3c3c3c"/><polygon points="18.1,15.8 18.6,10.8 19.2,13.1 19.9,14.9 21.0,15.8 19.9,16.7 19.2,18.6 18.6,20.8" fill="#3c3c3c"/><polygon points="33.3,15.8 33.8,11.3 34.4,13.3 34.9,15.0 35.9,15.8 34.9,16.6 34.4,18.3 33.8,20.3" fill="#3c3c3c"/><polygon points="48.4,15.8 48.9,10.8 49.5,13.1 50.2,14.9 51.3,15.8 50.2,16.7 49.5,18.6 48.9,20.8" fill="#3c3c3c"/><polygon points="66.5,15.8 67.0,10.8 67.6,13.1 68.3,14.9 69.4,15.8 68.3,16.7 67.6,18.6 67.0,20.8" fill="#3c3c3c"/><polygon points="78.6,15.8 79.1,11.3 79.7,13.3 80.2,15.0 81.2,15.8 80.2,16.6 79.7,18.3 79.1,20.3" fill="#3c3c3c"/><polygon points="81.7,15.8 82.2,11.3 82.8,13.3 83.3,15.0 84.3,15.8 83.3,16.6 82.8,18.3 82.2,20.3" fill="#3c3c3c"/><polygon points="96.8,15.8 97.3,10.8 97.9,13.1 98.6,14.9 99.7,15.8 98.6,16.7 97.9,18.6 97.3,20.8" fill="#3c3c3c"/><polygon points="102.9,15.8 103.4,11.3 104.0,13.3 104.5,15.0 105.5,15.8 104.5,16.6 104.0,18.3 103.4,20.3" fill="#3c3c3c"/><polygon points="115.0,15.8 115.5,10.8 116.1,13.1 116.7,14.9 117.8,15.8 116.7,16.7 116.1,18.6 115.5,20.8" fill="#3c3c3c"/><polygon points="130.1,15.8 130.6,11.3 131.2,13.3 131.7,15.0 132.7,15.8 131.7,16.6 131.2,18.3 130.6,20.3" fill="#3c3c3c"/><polygon points="145.2,15.8 145.7,10.8 146.3,13.1 147.0,14.9 148.1,15.8 147.0,16.7 146.3,18.6 145.7,20.8" fill="#3c3c3c"/><polygon points="163.4,15.8 163.9,10.8 164.5,13.1 165.1,14.9 166.2,15.8 165.1,16.7 164.5,18.6 163.9,20.8" fill="#3c3c3c"/><polygon points="175.5,15.8 176.0,11.3 176.6,13.3 177.1,15.0 178.1,15.8 177.1,16.6 176.6,18.3 176.0,20.3" fill="#3c3c3c"/><polygon points="193.6,15.8 194.1,10.8 194.7,13.1 195.4,14.9 196.5,15.8 195.4,16.7 194.7,18.6 194.1,20.8" fill="#3c3c3c"/><polygon points="211.8,15.8 212.2,10.8 212.8,13.1 213.5,14.9 214.6,15.8 213.5,16.7 212.8,18.6 212.2,20.8" fill="#3c3c3c"/><polygon points="223.9,15.8 224.4,11.3 225.0,13.3 225.5,15.0 226.5,15.8 225.5,16.6 225.0,18.3 224.4,20.3" fill="#3c3c3c"/><polygon points="226.9,15.8 227.4,11.3 228.0,13.3 228.5,15.0 229.5,15.8 228.5,16.6 228.0,18.3 227.4,20.3" fill="#3c3c3c"/><polygon points="242.0,15.8 242.5,10.8 243.1,13.1 243.8,14.9 244.9,15.8 243.8,16.7 243.1,18.6 242.5,20.8" fill="#3c3c3c"/><polygon points="260.1,15.8 260.6,10.8 261.2,13.1 261.9,14.9 263.0,15.8 261.9,16.7 261.2,18.6 260.6,20.8" fill="#3c3c3c"/><polygon points="272.2,15.8 272.8,11.3 273.4,13.3 273.9,15.0 274.9,15.8 273.9,16.6 273.4,18.3 272.8,20.3" fill="#3c3c3c"/><polygon points="290.4,15.8 290.9,10.8 291.5,13.1 292.2,14.9 293.3,15.8 292.2,16.7 291.5,18.6 290.9,20.8" fill="#3c3c3c"/><polygon points="308.5,15.8 309.0,10.8 309.6,13.1 310.3,14.9 311.4,15.8 310.3,16.7 309.6,18.6 309.0,20.8" fill="#3c3c3c"/><polygon points="338.8,15.8 339.3,10.8 339.9,13.1 340.6,14.9 341.7,15.8 340.6,16.7 339.9,18.6 339.3,20.8" fill="#3c3c3c"/><polygon points="357.0,15.8 357.5,10.8 358.1,13.1 358.7,14.9 359.8,15.8 358.7,16.7 358.1,18.6 357.5,20.8" fill="#3c3c3c"/><polygon points="372.1,15.8 372.6,11.3 373.2,13.3 373.7,15.0 374.7,15.8 373.7,16.6 373.2,18.3 372.6,20.3" fill="#3c3c3c"/><rect x="0" y="43.9" width="388" height="0.8" fill="#a8a8a8"/><polygon points="0.0,44.3 0.5,39.3 1.1,41.5 1.8,43.4 2.9,44.3 1.8,45.2 1.1,47.0 0.5,49.3" fill="#3c3c3c"/><polygon points="18.1,44.3 18.6,39.3 19.2,41.5 19.9,43.4 21.0,44.3 19.9,45.2 19.2,47.0 18.6,49.3" fill="#3c3c3c"/><polygon points="33.3,44.3 33.8,39.8 34.4,41.8 34.9,43.5 35.9,44.3 34.9,45.1 34.4,46.8 33.8,48.8" fill="#3c3c3c"/><polygon points="48.4,44.3 48.9,39.3 49.5,41.5 50.2,43.4 51.3,44.3 50.2,45.2 49.5,47.0 48.9,49.3" fill="#3c3c3c"/><polygon points="66.5,44.3 67.0,39.3 67.6,41.5 68.3,43.4 69.4,44.3 68.3,45.2 67.6,47.0 67.0,49.3" fill="#3c3c3c"/><polygon points="78.6,44.3 79.1,39.8 79.7,41.8 80.2,43.5 81.2,44.3 80.2,45.1 79.7,46.8 79.1,48.8" fill="#3c3c3c"/><polygon points="81.7,44.3 82.2,39.8 82.8,41.8 83.3,43.5 84.3,44.3 83.3,45.1 82.8,46.8 82.2,48.8" fill="#3c3c3c"/><polygon points="96.8,44.3 97.3,39.3 97.9,41.5 98.6,43.4 99.7,44.3 98.6,45.2 97.9,47.0 97.3,49.3" fill="#3c3c3c"/><polygon points="102.9,44.3 103.4,39.8 104.0,41.8 104.5,43.5 105.5,44.3 104.5,45.1 104.0,46.8 103.4,48.8" fill="#3c3c3c"/><polygon points="115.0,44.3 115.5,39.3 116.1,41.5 116.7,43.4 117.8,44.3 116.7,45.2 116.1,47.0 115.5,49.3" fill="#3c3c3c"/><polygon points="130.1,44.3 130.6,39.8 131.2,41.8 131.7,43.5 132.7,44.3 131.7,45.1 131.2,46.8 130.6,48.8" fill="#3c3c3c"/><polygon points="145.2,44.3 145.7,39.3 146.3,41.5 147.0,43.4 148.1,44.3 147.0,45.2 146.3,47.0 145.7,49.3" fill="#3c3c3c"/><polygon points="163.4,44.3 163.9,39.3 164.5,41.5 165.1,43.4 166.2,44.3 165.1,45.2 164.5,47.0 163.9,49.3" fill="#3c3c3c"/><polygon points="175.5,44.3 176.0,39.8 176.6,41.8 177.1,43.5 178.1,44.3 177.1,45.1 176.6,46.8 176.0,48.8" fill="#3c3c3c"/><polygon points="193.6,44.3 194.1,39.3 194.7,41.5 195.4,43.4 196.5,44.3 195.4,45.2 194.7,47.0 194.1,49.3" fill="#3c3c3c"/><polygon points="211.8,44.3 212.2,39.3 212.8,41.5 213.5,43.4 214.6,44.3 213.5,45.2 212.8,47.0 212.2,49.3" fill="#3c3c3c"/><polygon points="223.9,44.3 224.4,39.8 225.0,41.8 225.5,43.5 226.5,44.3 225.5,45.1 225.0,46.8 224.4,48.8" fill="#3c3c3c"/><polygon points="226.9,44.3 227.4,39.8 228.0,41.8 228.5,43.5 229.5,44.3 228.5,45.1 228.0,46.8 227.4,48.8" fill="#3c3c3c"/><polygon points="242.0,44.3 242.5,39.3 243.1,41.5 243.8,43.4 244.9,44.3 243.8,45.2 243.1,47.0 242.5,49.3" fill="#3c3c3c"/><polygon points="260.1,44.3 260.6,39.3 261.2,41.5 261.9,43.4 263.0,44.3 261.9,45.2 261.2,47.0 260.6,49.3" fill="#3c3c3c"/><polygon points="272.2,44.3 272.8,39.8 273.4,41.8 273.9,43.5 274.9,44.3 273.9,45.1 273.4,46.8 272.8,48.8" fill="#3c3c3c"/><polygon points="290.4,44.3 290.9,39.3 291.5,41.5 292.2,43.4 293.3,44.3 292.2,45.2 291.5,47.0 290.9,49.3" fill="#3c3c3c"/><polygon points="308.5,44.3 309.0,39.3 309.6,41.5 310.3,43.4 311.4,44.3 310.3,45.2 309.6,47.0 309.0,49.3" fill="#3c3c3c"/><polygon points="338.8,44.3 339.3,39.3 339.9,41.5 340.6,43.4 341.7,44.3 340.6,45.2 339.9,47.0 339.3,49.3" fill="#3c3c3c"/><polygon points="357.0,44.3 357.5,39.3 358.1,41.5 358.7,43.4 359.8,44.3 358.7,45.2 358.1,47.0 357.5,49.3" fill="#3c3c3c"/><polygon points="372.1,44.3 372.6,39.8 373.2,41.8 373.7,43.5 374.7,44.3 373.7,45.1 373.2,46.8 372.6,48.8" fill="#3c3c3c"/></svg>
<svg style="position:absolute;left:593px;top:108px" width="59" height="9" viewBox="0 0 59 9"><polygon points="0,0 59,0 52,8.5 0,8.5" fill="#4a4a4a"/></svg>
<div style="left:594.5px;top:105.8px;height:14px;line-height:14px;font-size:7px;color:#e2e2e2;font-weight:normal;white-space:nowrap;">07 Bam Kick 02</div>
<svg style="position:absolute;left:593px;top:160px" width="22" height="8" viewBox="0 0 22 8"><polygon points="0,0 13,0 19,7.5 0,7.5" fill="#4a4a4a"/><circle cx="6.5" cy="4" r="1.7" fill="none" stroke="#ccc" stroke-width="0.8"/></svg>
<svg style="position:absolute;left:593px;top:109px" width="5" height="5" viewBox="0 0 5 5"><polygon points="0,0 4.5,0 0,4.5" fill="#eee"/></svg>
<div style="left:207px;top:168px;width:386px;height:59px;background:#d4d4d4;"></div>
<svg style="position:absolute;left:207px;top:168px" width="386" height="59" viewBox="0 0 386 59"><rect x="0" y="15.4" width="386" height="0.8" fill="#a8a8a8"/><polygon points="12.1,15.8 12.6,11.0 13.2,13.2 13.9,14.9 15.0,15.8 13.9,16.7 13.2,18.4 12.6,20.6" fill="#3c3c3c"/><polygon points="36.3,15.8 36.8,12.2 37.4,13.8 37.9,15.2 38.9,15.8 37.9,16.4 37.4,17.8 36.8,19.4" fill="#3c3c3c"/><polygon points="60.5,15.8 61.0,11.0 61.6,13.2 62.3,14.9 63.4,15.8 62.3,16.7 61.6,18.4 61.0,20.6" fill="#3c3c3c"/><polygon points="84.7,15.8 85.2,12.2 85.8,13.8 86.3,15.2 87.3,15.8 86.3,16.4 85.8,17.8 85.2,19.4" fill="#3c3c3c"/><polygon points="108.9,15.8 109.4,11.0 110.0,13.2 110.7,14.9 111.8,15.8 110.7,16.7 110.0,18.4 109.4,20.6" fill="#3c3c3c"/><polygon points="133.1,15.8 133.6,12.2 134.2,13.8 134.7,15.2 135.7,15.8 134.7,16.4 134.2,17.8 133.6,19.4" fill="#3c3c3c"/><polygon points="157.3,15.8 157.8,11.0 158.4,13.2 159.1,14.9 160.2,15.8 159.1,16.7 158.4,18.4 157.8,20.6" fill="#3c3c3c"/><polygon points="181.5,15.8 182.0,12.2 182.6,13.8 183.1,15.2 184.1,15.8 183.1,16.4 182.6,17.8 182.0,19.4" fill="#3c3c3c"/><polygon points="205.7,15.8 206.2,11.0 206.8,13.2 207.5,14.9 208.6,15.8 207.5,16.7 206.8,18.4 206.2,20.6" fill="#3c3c3c"/><polygon points="229.9,15.8 230.4,12.2 231.0,13.8 231.5,15.2 232.5,15.8 231.5,16.4 231.0,17.8 230.4,19.4" fill="#3c3c3c"/><polygon points="254.1,15.8 254.6,11.0 255.2,13.2 255.9,14.9 257.0,15.8 255.9,16.7 255.2,18.4 254.6,20.6" fill="#3c3c3c"/><polygon points="278.3,15.8 278.8,12.2 279.4,13.8 279.9,15.2 280.9,15.8 279.9,16.4 279.4,17.8 278.8,19.4" fill="#3c3c3c"/><polygon points="302.5,15.8 303.0,11.0 303.6,13.2 304.3,14.9 305.4,15.8 304.3,16.7 303.6,18.4 303.0,20.6" fill="#3c3c3c"/><polygon points="326.7,15.8 327.2,12.2 327.8,13.8 328.3,15.2 329.3,15.8 328.3,16.4 327.8,17.8 327.2,19.4" fill="#3c3c3c"/><polygon points="350.9,15.8 351.4,11.0 352.0,13.2 352.7,14.9 353.8,15.8 352.7,16.7 352.0,18.4 351.4,20.6" fill="#3c3c3c"/><polygon points="375.1,15.8 375.6,12.2 376.2,13.8 376.7,15.2 377.7,15.8 376.7,16.4 376.2,17.8 375.6,19.4" fill="#3c3c3c"/><rect x="0" y="43.9" width="386" height="0.8" fill="#a8a8a8"/><polygon points="12.1,44.3 12.6,39.5 13.2,41.7 13.9,43.4 15.0,44.3 13.9,45.2 13.2,46.9 12.6,49.1" fill="#3c3c3c"/><polygon points="36.3,44.3 36.8,40.7 37.4,42.3 37.9,43.7 38.9,44.3 37.9,44.9 37.4,46.3 36.8,47.9" fill="#3c3c3c"/><polygon points="60.5,44.3 61.0,39.5 61.6,41.7 62.3,43.4 63.4,44.3 62.3,45.2 61.6,46.9 61.0,49.1" fill="#3c3c3c"/><polygon points="84.7,44.3 85.2,40.7 85.8,42.3 86.3,43.7 87.3,44.3 86.3,44.9 85.8,46.3 85.2,47.9" fill="#3c3c3c"/><polygon points="108.9,44.3 109.4,39.5 110.0,41.7 110.7,43.4 111.8,44.3 110.7,45.2 110.0,46.9 109.4,49.1" fill="#3c3c3c"/><polygon points="133.1,44.3 133.6,40.7 134.2,42.3 134.7,43.7 135.7,44.3 134.7,44.9 134.2,46.3 133.6,47.9" fill="#3c3c3c"/><polygon points="157.3,44.3 157.8,39.5 158.4,41.7 159.1,43.4 160.2,44.3 159.1,45.2 158.4,46.9 157.8,49.1" fill="#3c3c3c"/><polygon points="181.5,44.3 182.0,40.7 182.6,42.3 183.1,43.7 184.1,44.3 183.1,44.9 182.6,46.3 182.0,47.9" fill="#3c3c3c"/><polygon points="205.7,44.3 206.2,39.5 206.8,41.7 207.5,43.4 208.6,44.3 207.5,45.2 206.8,46.9 206.2,49.1" fill="#3c3c3c"/><polygon points="229.9,44.3 230.4,40.7 231.0,42.3 231.5,43.7 232.5,44.3 231.5,44.9 231.0,46.3 230.4,47.9" fill="#3c3c3c"/><polygon points="254.1,44.3 254.6,39.5 255.2,41.7 255.9,43.4 257.0,44.3 255.9,45.2 255.2,46.9 254.6,49.1" fill="#3c3c3c"/><polygon points="278.3,44.3 278.8,40.7 279.4,42.3 279.9,43.7 280.9,44.3 279.9,44.9 279.4,46.3 278.8,47.9" fill="#3c3c3c"/><polygon points="302.5,44.3 303.0,39.5 303.6,41.7 304.3,43.4 305.4,44.3 304.3,45.2 303.6,46.9 303.0,49.1" fill="#3c3c3c"/><polygon points="326.7,44.3 327.2,40.7 327.8,42.3 328.3,43.7 329.3,44.3 328.3,44.9 327.8,46.3 327.2,47.9" fill="#3c3c3c"/><polygon points="350.9,44.3 351.4,39.5 352.0,41.7 352.7,43.4 353.8,44.3 352.7,45.2 352.0,46.9 351.4,49.1" fill="#3c3c3c"/><polygon points="375.1,44.3 375.6,40.7 376.2,42.3 376.7,43.7 377.7,44.3 376.7,44.9 376.2,46.3 375.6,47.9" fill="#3c3c3c"/></svg>
<svg style="position:absolute;left:207px;top:168px" width="66" height="9" viewBox="0 0 66 9"><polygon points="0,0 66,0 59,8.5 0,8.5" fill="#4a4a4a"/></svg>
<div style="left:208.5px;top:165.8px;height:14px;line-height:14px;font-size:7px;color:#e2e2e2;font-weight:normal;white-space:nowrap;">07 Snow Snare 01</div>
<svg style="position:absolute;left:207px;top:220px" width="22" height="8" viewBox="0 0 22 8"><polygon points="0,0 13,0 19,7.5 0,7.5" fill="#4a4a4a"/><circle cx="6.5" cy="4" r="1.7" fill="none" stroke="#ccc" stroke-width="0.8"/></svg>
<svg style="position:absolute;left:207px;top:169px" width="5" height="5" viewBox="0 0 5 5"><polygon points="0,0 4.5,0 0,4.5" fill="#eee"/></svg>
<div style="left:593px;top:168px;width:388px;height:59px;background:#d4d4d4;"></div>
<svg style="position:absolute;left:593px;top:168px" width="388" height="59" viewBox="0 0 388 59"><rect x="0" y="15.4" width="388" height="0.8" fill="#a8a8a8"/><polygon points="12.1,15.8 12.6,11.0 13.2,13.2 13.9,14.9 15.0,15.8 13.9,16.7 13.2,18.4 12.6,20.6" fill="#3c3c3c"/><polygon points="36.3,15.8 36.8,12.2 37.4,13.8 37.9,15.2 38.9,15.8 37.9,16.4 37.4,17.8 36.8,19.4" fill="#3c3c3c"/><polygon points="60.5,15.8 61.0,11.0 61.6,13.2 62.3,14.9 63.4,15.8 62.3,16.7 61.6,18.4 61.0,20.6" fill="#3c3c3c"/><polygon points="84.7,15.8 85.2,12.2 85.8,13.8 86.3,15.2 87.3,15.8 86.3,16.4 85.8,17.8 85.2,19.4" fill="#3c3c3c"/><polygon points="90.8,15.8 91.2,14.8 93.2,15.8 91.2,16.8" fill="#3c3c3c"/><polygon points="108.9,15.8 109.4,11.0 110.0,13.2 110.7,14.9 111.8,15.8 110.7,16.7 110.0,18.4 109.4,20.6" fill="#3c3c3c"/><polygon points="133.1,15.8 133.6,12.2 134.2,13.8 134.7,15.2 135.7,15.8 134.7,16.4 134.2,17.8 133.6,19.4" fill="#3c3c3c"/><polygon points="157.3,15.8 157.8,11.0 158.4,13.2 159.1,14.9 160.2,15.8 159.1,16.7 158.4,18.4 157.8,20.6" fill="#3c3c3c"/><polygon points="172.4,15.8 172.9,12.8 173.5,14.2 174.0,15.3 175.0,15.8 174.0,16.3 173.5,17.4 172.9,18.8" fill="#3c3c3c"/><polygon points="181.5,15.8 182.0,12.2 182.6,13.8 183.1,15.2 184.1,15.8 183.1,16.4 182.6,17.8 182.0,19.4" fill="#3c3c3c"/><polygon points="184.5,15.8 185.0,12.8 185.6,14.2 186.1,15.3 187.1,15.8 186.1,16.3 185.6,17.4 185.0,18.8" fill="#3c3c3c"/><polygon points="205.7,15.8 206.2,11.0 206.8,13.2 207.5,14.9 208.6,15.8 207.5,16.7 206.8,18.4 206.2,20.6" fill="#3c3c3c"/><polygon points="229.9,15.8 230.4,12.2 231.0,13.8 231.5,15.2 232.5,15.8 231.5,16.4 231.0,17.8 230.4,19.4" fill="#3c3c3c"/><polygon points="254.1,15.8 254.6,11.0 255.2,13.2 255.9,14.9 257.0,15.8 255.9,16.7 255.2,18.4 254.6,20.6" fill="#3c3c3c"/><polygon points="278.3,15.8 278.8,12.2 279.4,13.8 279.9,15.2 280.9,15.8 279.9,16.4 279.4,17.8 278.8,19.4" fill="#3c3c3c"/><polygon points="284.3,15.8 284.7,14.8 286.8,15.8 284.7,16.8" fill="#3c3c3c"/><polygon points="302.5,15.8 303.0,11.0 303.6,13.2 304.3,14.9 305.4,15.8 304.3,16.7 303.6,18.4 303.0,20.6" fill="#3c3c3c"/><polygon points="326.7,15.8 327.2,12.2 327.8,13.8 328.3,15.2 329.3,15.8 328.3,16.4 327.8,17.8 327.2,19.4" fill="#3c3c3c"/><polygon points="332.8,15.8 333.1,14.8 335.2,15.8 333.1,16.8" fill="#3c3c3c"/><polygon points="350.9,15.8 351.4,11.0 352.0,13.2 352.7,14.9 353.8,15.8 352.7,16.7 352.0,18.4 351.4,20.6" fill="#3c3c3c"/><polygon points="366.0,15.8 366.5,12.8 367.1,14.2 367.6,15.3 368.6,15.8 367.6,16.3 367.1,17.4 366.5,18.8" fill="#3c3c3c"/><polygon points="375.1,15.8 375.6,12.2 376.2,13.8 376.7,15.2 377.7,15.8 376.7,16.4 376.2,17.8 375.6,19.4" fill="#3c3c3c"/><polygon points="378.1,15.8 378.6,12.8 379.2,14.2 379.7,15.3 380.7,15.8 379.7,16.3 379.2,17.4 378.6,18.8" fill="#3c3c3c"/><rect x="0" y="43.9" width="388" height="0.8" fill="#a8a8a8"/><polygon points="12.1,44.3 12.6,39.5 13.2,41.7 13.9,43.4 15.0,44.3 13.9,45.2 13.2,46.9 12.6,49.1" fill="#3c3c3c"/><polygon points="36.3,44.3 36.8,40.7 37.4,42.3 37.9,43.7 38.9,44.3 37.9,44.9 37.4,46.3 36.8,47.9" fill="#3c3c3c"/><polygon points="60.5,44.3 61.0,39.5 61.6,41.7 62.3,43.4 63.4,44.3 62.3,45.2 61.6,46.9 61.0,49.1" fill="#3c3c3c"/><polygon points="84.7,44.3 85.2,40.7 85.8,42.3 86.3,43.7 87.3,44.3 86.3,44.9 85.8,46.3 85.2,47.9" fill="#3c3c3c"/><polygon points="90.8,44.3 91.2,43.3 93.2,44.3 91.2,45.3" fill="#3c3c3c"/><polygon points="108.9,44.3 109.4,39.5 110.0,41.7 110.7,43.4 111.8,44.3 110.7,45.2 110.0,46.9 109.4,49.1" fill="#3c3c3c"/><polygon points="133.1,44.3 133.6,40.7 134.2,42.3 134.7,43.7 135.7,44.3 134.7,44.9 134.2,46.3 133.6,47.9" fill="#3c3c3c"/><polygon points="157.3,44.3 157.8,39.5 158.4,41.7 159.1,43.4 160.2,44.3 159.1,45.2 158.4,46.9 157.8,49.1" fill="#3c3c3c"/><polygon points="172.4,44.3 172.9,41.3 173.5,42.6 174.0,43.8 175.0,44.3 174.0,44.8 173.5,45.9 172.9,47.3" fill="#3c3c3c"/><polygon points="181.5,44.3 182.0,40.7 182.6,42.3 183.1,43.7 184.1,44.3 183.1,44.9 182.6,46.3 182.0,47.9" fill="#3c3c3c"/><polygon points="184.5,44.3 185.0,41.3 185.6,42.6 186.1,43.8 187.1,44.3 186.1,44.8 185.6,45.9 185.0,47.3" fill="#3c3c3c"/><polygon points="205.7,44.3 206.2,39.5 206.8,41.7 207.5,43.4 208.6,44.3 207.5,45.2 206.8,46.9 206.2,49.1" fill="#3c3c3c"/><polygon points="229.9,44.3 230.4,40.7 231.0,42.3 231.5,43.7 232.5,44.3 231.5,44.9 231.0,46.3 230.4,47.9" fill="#3c3c3c"/><polygon points="254.1,44.3 254.6,39.5 255.2,41.7 255.9,43.4 257.0,44.3 255.9,45.2 255.2,46.9 254.6,49.1" fill="#3c3c3c"/><polygon points="278.3,44.3 278.8,40.7 279.4,42.3 279.9,43.7 280.9,44.3 279.9,44.9 279.4,46.3 278.8,47.9" fill="#3c3c3c"/><polygon points="284.3,44.3 284.7,43.3 286.8,44.3 284.7,45.3" fill="#3c3c3c"/><polygon points="302.5,44.3 303.0,39.5 303.6,41.7 304.3,43.4 305.4,44.3 304.3,45.2 303.6,46.9 303.0,49.1" fill="#3c3c3c"/><polygon points="326.7,44.3 327.2,40.7 327.8,42.3 328.3,43.7 329.3,44.3 328.3,44.9 327.8,46.3 327.2,47.9" fill="#3c3c3c"/><polygon points="332.8,44.3 333.1,43.3 335.2,44.3 333.1,45.3" fill="#3c3c3c"/><polygon points="350.9,44.3 351.4,39.5 352.0,41.7 352.7,43.4 353.8,44.3 352.7,45.2 352.0,46.9 351.4,49.1" fill="#3c3c3c"/><polygon points="366.0,44.3 366.5,41.3 367.1,42.6 367.6,43.8 368.6,44.3 367.6,44.8 367.1,45.9 366.5,47.3" fill="#3c3c3c"/><polygon points="375.1,44.3 375.6,40.7 376.2,42.3 376.7,43.7 377.7,44.3 376.7,44.9 376.2,46.3 375.6,47.9" fill="#3c3c3c"/><polygon points="378.1,44.3 378.6,41.3 379.2,42.6 379.7,43.8 380.7,44.3 379.7,44.8 379.2,45.9 378.6,47.3" fill="#3c3c3c"/></svg>
<svg style="position:absolute;left:593px;top:168px" width="66" height="9" viewBox="0 0 66 9"><polygon points="0,0 66,0 59,8.5 0,8.5" fill="#4a4a4a"/></svg>
<div style="left:594.5px;top:165.8px;height:14px;line-height:14px;font-size:7px;color:#e2e2e2;font-weight:normal;white-space:nowrap;">07 Snow Snare 02</div>
<svg style="position:absolute;left:593px;top:220px" width="22" height="8" viewBox="0 0 22 8"><polygon points="0,0 13,0 19,7.5 0,7.5" fill="#4a4a4a"/><circle cx="6.5" cy="4" r="1.7" fill="none" stroke="#ccc" stroke-width="0.8"/></svg>
<svg style="position:absolute;left:593px;top:169px" width="5" height="5" viewBox="0 0 5 5"><polygon points="0,0 4.5,0 0,4.5" fill="#eee"/></svg>
<div style="left:207px;top:228px;width:386px;height:59px;background:#d4d4d4;"></div>
<svg style="position:absolute;left:207px;top:228px" width="386" height="59" viewBox="0 0 386 59"><rect x="0" y="15.4" width="386" height="0.8" fill="#a8a8a8"/><polygon points="12.1,15.8 12.6,12.0 13.2,13.7 13.9,15.1 15.0,15.8 13.9,16.5 13.2,17.9 12.6,19.6" fill="#3c3c3c"/><polygon points="36.3,15.8 36.8,12.0 37.4,13.7 38.1,15.1 39.2,15.8 38.1,16.5 37.4,17.9 36.8,19.6" fill="#3c3c3c"/><polygon points="60.5,15.8 61.0,12.0 61.6,13.7 62.3,15.1 63.4,15.8 62.3,16.5 61.6,17.9 61.0,19.6" fill="#3c3c3c"/><polygon points="84.7,15.8 85.2,12.0 85.8,13.7 86.5,15.1 87.6,15.8 86.5,16.5 85.8,17.9 85.2,19.6" fill="#3c3c3c"/><polygon points="108.9,15.8 109.4,12.0 110.0,13.7 110.7,15.1 111.8,15.8 110.7,16.5 110.0,17.9 109.4,19.6" fill="#3c3c3c"/><polygon points="133.1,15.8 133.6,12.0 134.2,13.7 134.9,15.1 136.0,15.8 134.9,16.5 134.2,17.9 133.6,19.6" fill="#3c3c3c"/><polygon points="157.3,15.8 157.8,12.0 158.4,13.7 159.1,15.1 160.2,15.8 159.1,16.5 158.4,17.9 157.8,19.6" fill="#3c3c3c"/><polygon points="175.4,15.8 175.8,15.0 177.9,15.8 175.8,16.6" fill="#3c3c3c"/><polygon points="181.5,15.8 182.0,12.0 182.6,13.7 183.3,15.1 184.4,15.8 183.3,16.5 182.6,17.9 182.0,19.6" fill="#3c3c3c"/><polygon points="205.7,15.8 206.2,12.0 206.8,13.7 207.5,15.1 208.6,15.8 207.5,16.5 206.8,17.9 206.2,19.6" fill="#3c3c3c"/><polygon points="229.9,15.8 230.4,12.0 231.0,13.7 231.7,15.1 232.8,15.8 231.7,16.5 231.0,17.9 230.4,19.6" fill="#3c3c3c"/><polygon points="254.1,15.8 254.6,12.0 255.2,13.7 255.9,15.1 257.0,15.8 255.9,16.5 255.2,17.9 254.6,19.6" fill="#3c3c3c"/><polygon points="272.2,15.8 272.6,15.0 274.8,15.8 272.6,16.6" fill="#3c3c3c"/><polygon points="278.3,15.8 278.8,12.0 279.4,13.7 280.1,15.1 281.2,15.8 280.1,16.5 279.4,17.9 278.8,19.6" fill="#3c3c3c"/><polygon points="302.5,15.8 303.0,12.0 303.6,13.7 304.3,15.1 305.4,15.8 304.3,16.5 303.6,17.9 303.0,19.6" fill="#3c3c3c"/><polygon points="326.7,15.8 327.2,12.0 327.8,13.7 328.5,15.1 329.6,15.8 328.5,16.5 327.8,17.9 327.2,19.6" fill="#3c3c3c"/><polygon points="350.9,15.8 351.4,12.0 352.0,13.7 352.7,15.1 353.8,15.8 352.7,16.5 352.0,17.9 351.4,19.6" fill="#3c3c3c"/><polygon points="375.1,15.8 375.6,12.0 376.2,13.7 376.9,15.1 378.0,15.8 376.9,16.5 376.2,17.9 375.6,19.6" fill="#3c3c3c"/><rect x="0" y="43.9" width="386" height="0.8" fill="#a8a8a8"/><polygon points="12.1,44.3 12.6,40.5 13.2,42.2 13.9,43.6 15.0,44.3 13.9,45.0 13.2,46.4 12.6,48.1" fill="#3c3c3c"/><polygon points="36.3,44.3 36.8,40.5 37.4,42.2 38.1,43.6 39.2,44.3 38.1,45.0 37.4,46.4 36.8,48.1" fill="#3c3c3c"/><polygon points="60.5,44.3 61.0,40.5 61.6,42.2 62.3,43.6 63.4,44.3 62.3,45.0 61.6,46.4 61.0,48.1" fill="#3c3c3c"/><polygon points="84.7,44.3 85.2,40.5 85.8,42.2 86.5,43.6 87.6,44.3 86.5,45.0 85.8,46.4 85.2,48.1" fill="#3c3c3c"/><polygon points="108.9,44.3 109.4,40.5 110.0,42.2 110.7,43.6 111.8,44.3 110.7,45.0 110.0,46.4 109.4,48.1" fill="#3c3c3c"/><polygon points="133.1,44.3 133.6,40.5 134.2,42.2 134.9,43.6 136.0,44.3 134.9,45.0 134.2,46.4 133.6,48.1" fill="#3c3c3c"/><polygon points="157.3,44.3 157.8,40.5 158.4,42.2 159.1,43.6 160.2,44.3 159.1,45.0 158.4,46.4 157.8,48.1" fill="#3c3c3c"/><polygon points="175.4,44.3 175.8,43.5 177.9,44.3 175.8,45.1" fill="#3c3c3c"/><polygon points="181.5,44.3 182.0,40.5 182.6,42.2 183.3,43.6 184.4,44.3 183.3,45.0 182.6,46.4 182.0,48.1" fill="#3c3c3c"/><polygon points="205.7,44.3 206.2,40.5 206.8,42.2 207.5,43.6 208.6,44.3 207.5,45.0 206.8,46.4 206.2,48.1" fill="#3c3c3c"/><polygon points="229.9,44.3 230.4,40.5 231.0,42.2 231.7,43.6 232.8,44.3 231.7,45.0 231.0,46.4 230.4,48.1" fill="#3c3c3c"/><polygon points="254.1,44.3 254.6,40.5 255.2,42.2 255.9,43.6 257.0,44.3 255.9,45.0 255.2,46.4 254.6,48.1" fill="#3c3c3c"/><polygon points="272.2,44.3 272.6,43.5 274.8,44.3 272.6,45.1" fill="#3c3c3c"/><polygon points="278.3,44.3 278.8,40.5 279.4,42.2 280.1,43.6 281.2,44.3 280.1,45.0 279.4,46.4 278.8,48.1" fill="#3c3c3c"/><polygon points="302.5,44.3 303.0,40.5 303.6,42.2 304.3,43.6 305.4,44.3 304.3,45.0 303.6,46.4 303.0,48.1" fill="#3c3c3c"/><polygon points="326.7,44.3 327.2,40.5 327.8,42.2 328.5,43.6 329.6,44.3 328.5,45.0 327.8,46.4 327.2,48.1" fill="#3c3c3c"/><polygon points="350.9,44.3 351.4,40.5 352.0,42.2 352.7,43.6 353.8,44.3 352.7,45.0 352.0,46.4 351.4,48.1" fill="#3c3c3c"/><polygon points="375.1,44.3 375.6,40.5 376.2,42.2 376.9,43.6 378.0,44.3 376.9,45.0 376.2,46.4 375.6,48.1" fill="#3c3c3c"/></svg>
<svg style="position:absolute;left:207px;top:228px" width="77" height="9" viewBox="0 0 77 9"><polygon points="0,0 77,0 70,8.5 0,8.5" fill="#4a4a4a"/></svg>
<div style="left:208.5px;top:225.8px;height:14px;line-height:14px;font-size:7px;color:#e2e2e2;font-weight:normal;white-space:nowrap;">07 Klapper Claps 01</div>
<svg style="position:absolute;left:207px;top:280px" width="22" height="8" viewBox="0 0 22 8"><polygon points="0,0 13,0 19,7.5 0,7.5" fill="#4a4a4a"/><circle cx="6.5" cy="4" r="1.7" fill="none" stroke="#ccc" stroke-width="0.8"/></svg>
<svg style="position:absolute;left:207px;top:229px" width="5" height="5" viewBox="0 0 5 5"><polygon points="0,0 4.5,0 0,4.5" fill="#eee"/></svg>
<div style="left:593px;top:228px;width:388px;height:59px;background:#d4d4d4;"></div>
<svg style="position:absolute;left:593px;top:228px" width="388" height="59" viewBox="0 0 388 59"><rect x="0" y="15.4" width="388" height="0.8" fill="#a8a8a8"/><polygon points="12.1,15.8 12.6,12.0 13.2,13.7 13.9,15.1 15.0,15.8 13.9,16.5 13.2,17.9 12.6,19.6" fill="#3c3c3c"/><polygon points="24.2,15.8 24.6,15.0 26.2,15.8 24.6,16.6" fill="#3c3c3c"/><polygon points="36.3,15.8 36.8,12.0 37.4,13.7 38.1,15.1 39.2,15.8 38.1,16.5 37.4,17.9 36.8,19.6" fill="#3c3c3c"/><polygon points="60.5,15.8 61.0,12.0 61.6,13.7 62.3,15.1 63.4,15.8 62.3,16.5 61.6,17.9 61.0,19.6" fill="#3c3c3c"/><polygon points="84.7,15.8 85.2,12.0 85.8,13.7 86.5,15.1 87.6,15.8 86.5,16.5 85.8,17.9 85.2,19.6" fill="#3c3c3c"/><polygon points="90.8,15.8 91.2,12.3 91.8,13.9 92.3,15.2 93.3,15.8 92.3,16.4 91.8,17.7 91.2,19.3" fill="#3c3c3c"/><polygon points="108.9,15.8 109.4,12.0 110.0,13.7 110.7,15.1 111.8,15.8 110.7,16.5 110.0,17.9 109.4,19.6" fill="#3c3c3c"/><polygon points="133.1,15.8 133.6,12.0 134.2,13.7 134.9,15.1 136.0,15.8 134.9,16.5 134.2,17.9 133.6,19.6" fill="#3c3c3c"/><polygon points="157.3,15.8 157.8,12.0 158.4,13.7 159.1,15.1 160.2,15.8 159.1,16.5 158.4,17.9 157.8,19.6" fill="#3c3c3c"/><polygon points="169.4,15.8 169.8,15.0 171.4,15.8 169.8,16.6" fill="#3c3c3c"/><polygon points="181.5,15.8 182.0,12.0 182.6,13.7 183.3,15.1 184.4,15.8 183.3,16.5 182.6,17.9 182.0,19.6" fill="#3c3c3c"/><polygon points="205.7,15.8 206.2,12.0 206.8,13.7 207.5,15.1 208.6,15.8 207.5,16.5 206.8,17.9 206.2,19.6" fill="#3c3c3c"/><polygon points="223.9,15.8 224.3,15.0 226.4,15.8 224.3,16.6" fill="#3c3c3c"/><polygon points="229.9,15.8 230.4,12.0 231.0,13.7 231.7,15.1 232.8,15.8 231.7,16.5 231.0,17.9 230.4,19.6" fill="#3c3c3c"/><polygon points="254.1,15.8 254.6,12.0 255.2,13.7 255.9,15.1 257.0,15.8 255.9,16.5 255.2,17.9 254.6,19.6" fill="#3c3c3c"/><polygon points="278.3,15.8 278.8,12.0 279.4,13.7 280.1,15.1 281.2,15.8 280.1,16.5 279.4,17.9 278.8,19.6" fill="#3c3c3c"/><polygon points="284.3,15.8 284.8,12.3 285.4,13.9 285.9,15.2 286.9,15.8 285.9,16.4 285.4,17.7 284.8,19.3" fill="#3c3c3c"/><polygon points="302.5,15.8 303.0,12.0 303.6,13.7 304.3,15.1 305.4,15.8 304.3,16.5 303.6,17.9 303.0,19.6" fill="#3c3c3c"/><polygon points="326.7,15.8 327.2,12.0 327.8,13.7 328.5,15.1 329.6,15.8 328.5,16.5 327.8,17.9 327.2,19.6" fill="#3c3c3c"/><polygon points="350.9,15.8 351.4,12.0 352.0,13.7 352.7,15.1 353.8,15.8 352.7,16.5 352.0,17.9 351.4,19.6" fill="#3c3c3c"/><polygon points="369.0,15.8 369.4,15.0 371.5,15.8 369.4,16.6" fill="#3c3c3c"/><polygon points="375.1,15.8 375.6,12.0 376.2,13.7 376.9,15.1 378.0,15.8 376.9,16.5 376.2,17.9 375.6,19.6" fill="#3c3c3c"/><rect x="0" y="43.9" width="388" height="0.8" fill="#a8a8a8"/><polygon points="12.1,44.3 12.6,40.5 13.2,42.2 13.9,43.6 15.0,44.3 13.9,45.0 13.2,46.4 12.6,48.1" fill="#3c3c3c"/><polygon points="24.2,44.3 24.6,43.5 26.2,44.3 24.6,45.1" fill="#3c3c3c"/><polygon points="36.3,44.3 36.8,40.5 37.4,42.2 38.1,43.6 39.2,44.3 38.1,45.0 37.4,46.4 36.8,48.1" fill="#3c3c3c"/><polygon points="60.5,44.3 61.0,40.5 61.6,42.2 62.3,43.6 63.4,44.3 62.3,45.0 61.6,46.4 61.0,48.1" fill="#3c3c3c"/><polygon points="84.7,44.3 85.2,40.5 85.8,42.2 86.5,43.6 87.6,44.3 86.5,45.0 85.8,46.4 85.2,48.1" fill="#3c3c3c"/><polygon points="90.8,44.3 91.2,40.8 91.8,42.4 92.3,43.7 93.3,44.3 92.3,44.9 91.8,46.2 91.2,47.8" fill="#3c3c3c"/><polygon points="108.9,44.3 109.4,40.5 110.0,42.2 110.7,43.6 111.8,44.3 110.7,45.0 110.0,46.4 109.4,48.1" fill="#3c3c3c"/><polygon points="133.1,44.3 133.6,40.5 134.2,42.2 134.9,43.6 136.0,44.3 134.9,45.0 134.2,46.4 133.6,48.1" fill="#3c3c3c"/><polygon points="157.3,44.3 157.8,40.5 158.4,42.2 159.1,43.6 160.2,44.3 159.1,45.0 158.4,46.4 157.8,48.1" fill="#3c3c3c"/><polygon points="169.4,44.3 169.8,43.5 171.4,44.3 169.8,45.1" fill="#3c3c3c"/><polygon points="181.5,44.3 182.0,40.5 182.6,42.2 183.3,43.6 184.4,44.3 183.3,45.0 182.6,46.4 182.0,48.1" fill="#3c3c3c"/><polygon points="205.7,44.3 206.2,40.5 206.8,42.2 207.5,43.6 208.6,44.3 207.5,45.0 206.8,46.4 206.2,48.1" fill="#3c3c3c"/><polygon points="223.9,44.3 224.3,43.5 226.4,44.3 224.3,45.1" fill="#3c3c3c"/><polygon points="229.9,44.3 230.4,40.5 231.0,42.2 231.7,43.6 232.8,44.3 231.7,45.0 231.0,46.4 230.4,48.1" fill="#3c3c3c"/><polygon points="254.1,44.3 254.6,40.5 255.2,42.2 255.9,43.6 257.0,44.3 255.9,45.0 255.2,46.4 254.6,48.1" fill="#3c3c3c"/><polygon points="278.3,44.3 278.8,40.5 279.4,42.2 280.1,43.6 281.2,44.3 280.1,45.0 279.4,46.4 278.8,48.1" fill="#3c3c3c"/><polygon points="284.3,44.3 284.8,40.8 285.4,42.4 285.9,43.7 286.9,44.3 285.9,44.9 285.4,46.2 284.8,47.8" fill="#3c3c3c"/><polygon points="302.5,44.3 303.0,40.5 303.6,42.2 304.3,43.6 305.4,44.3 304.3,45.0 303.6,46.4 303.0,48.1" fill="#3c3c3c"/><polygon points="326.7,44.3 327.2,40.5 327.8,42.2 328.5,43.6 329.6,44.3 328.5,45.0 327.8,46.4 327.2,48.1" fill="#3c3c3c"/><polygon points="350.9,44.3 351.4,40.5 352.0,42.2 352.7,43.6 353.8,44.3 352.7,45.0 352.0,46.4 351.4,48.1" fill="#3c3c3c"/><polygon points="369.0,44.3 369.4,43.5 371.5,44.3 369.4,45.1" fill="#3c3c3c"/><polygon points="375.1,44.3 375.6,40.5 376.2,42.2 376.9,43.6 378.0,44.3 376.9,45.0 376.2,46.4 375.6,48.1" fill="#3c3c3c"/></svg>
<svg style="position:absolute;left:593px;top:228px" width="77" height="9" viewBox="0 0 77 9"><polygon points="0,0 77,0 70,8.5 0,8.5" fill="#4a4a4a"/></svg>
<div style="left:594.5px;top:225.8px;height:14px;line-height:14px;font-size:7px;color:#e2e2e2;font-weight:normal;white-space:nowrap;">07 Klapper Claps 02</div>
<svg style="position:absolute;left:593px;top:280px" width="22" height="8" viewBox="0 0 22 8"><polygon points="0,0 13,0 19,7.5 0,7.5" fill="#4a4a4a"/><circle cx="6.5" cy="4" r="1.7" fill="none" stroke="#ccc" stroke-width="0.8"/></svg>
<svg style="position:absolute;left:593px;top:229px" width="5" height="5" viewBox="0 0 5 5"><polygon points="0,0 4.5,0 0,4.5" fill="#eee"/></svg>
<div style="left:207px;top:288px;width:386px;height:59px;background:#d4d4d4;"></div>
<svg style="position:absolute;left:207px;top:288px" width="386" height="59" viewBox="0 0 386 59"><rect x="0" y="15.4" width="386" height="0.8" fill="#a8a8a8"/><polygon points="0.0,15.8 0.5,11.8 1.1,13.6 1.6,15.1 2.6,15.8 1.6,16.5 1.1,18.0 0.5,19.8" fill="#3c3c3c"/><polygon points="3.0,15.8 3.4,14.6 4.4,15.8 3.4,17.0" fill="#3c3c3c"/><polygon points="6.1,15.8 6.6,12.2 7.2,13.8 7.7,15.2 8.7,15.8 7.7,16.4 7.2,17.8 6.6,19.4" fill="#3c3c3c"/><polygon points="9.1,15.8 9.5,14.6 10.5,15.8 9.5,17.0" fill="#3c3c3c"/><polygon points="12.1,15.8 12.6,11.8 13.2,13.6 13.7,15.1 14.7,15.8 13.7,16.5 13.2,18.0 12.6,19.8" fill="#3c3c3c"/><polygon points="15.1,15.8 15.5,14.6 16.5,15.8 15.5,17.0" fill="#3c3c3c"/><polygon points="18.2,15.8 18.7,12.2 19.3,13.8 19.8,15.2 20.8,15.8 19.8,16.4 19.3,17.8 18.7,19.4" fill="#3c3c3c"/><polygon points="21.2,15.8 21.6,14.6 22.6,15.8 21.6,17.0" fill="#3c3c3c"/><polygon points="24.2,15.8 24.7,11.8 25.3,13.6 25.8,15.1 26.8,15.8 25.8,16.5 25.3,18.0 24.7,19.8" fill="#3c3c3c"/><polygon points="30.2,15.8 30.8,12.2 31.4,13.8 31.9,15.2 32.9,15.8 31.9,16.4 31.4,17.8 30.8,19.4" fill="#3c3c3c"/><polygon points="36.3,15.8 36.8,11.8 37.4,13.6 37.9,15.1 38.9,15.8 37.9,16.5 37.4,18.0 36.8,19.8" fill="#3c3c3c"/><polygon points="39.3,15.8 39.7,14.6 40.7,15.8 39.7,17.0" fill="#3c3c3c"/><polygon points="42.3,15.8 42.8,12.2 43.4,13.8 43.9,15.2 44.9,15.8 43.9,16.4 43.4,17.8 42.8,19.4" fill="#3c3c3c"/><polygon points="48.4,15.8 48.9,11.8 49.5,13.6 50.0,15.1 51.0,15.8 50.0,16.5 49.5,18.0 48.9,19.8" fill="#3c3c3c"/><polygon points="54.4,15.8 54.9,12.2 55.5,13.8 56.0,15.2 57.0,15.8 56.0,16.4 55.5,17.8 54.9,19.4" fill="#3c3c3c"/><polygon points="57.5,15.8 57.9,14.6 58.9,15.8 57.9,17.0" fill="#3c3c3c"/><polygon points="60.5,15.8 61.0,11.8 61.6,13.6 62.1,15.1 63.1,15.8 62.1,16.5 61.6,18.0 61.0,19.8" fill="#3c3c3c"/><polygon points="63.5,15.8 63.9,14.6 64.9,15.8 63.9,17.0" fill="#3c3c3c"/><polygon points="66.6,15.8 67.1,12.2 67.7,13.8 68.2,15.2 69.2,15.8 68.2,16.4 67.7,17.8 67.1,19.4" fill="#3c3c3c"/><polygon points="69.6,15.8 70.0,14.6 71.0,15.8 70.0,17.0" fill="#3c3c3c"/><polygon points="72.6,15.8 73.1,11.8 73.7,13.6 74.2,15.1 75.2,15.8 74.2,16.5 73.7,18.0 73.1,19.8" fill="#3c3c3c"/><polygon points="78.6,15.8 79.1,12.2 79.7,13.8 80.2,15.2 81.2,15.8 80.2,16.4 79.7,17.8 79.1,19.4" fill="#3c3c3c"/><polygon points="81.7,15.8 82.1,14.6 83.1,15.8 82.1,17.0" fill="#3c3c3c"/><polygon points="84.7,15.8 85.2,11.8 85.8,13.6 86.3,15.1 87.3,15.8 86.3,16.5 85.8,18.0 85.2,19.8" fill="#3c3c3c"/><polygon points="87.7,15.8 88.1,14.6 89.1,15.8 88.1,17.0" fill="#3c3c3c"/><polygon points="90.8,15.8 91.2,12.2 91.8,13.8 92.3,15.2 93.3,15.8 92.3,16.4 91.8,17.8 91.2,19.4" fill="#3c3c3c"/><polygon points="96.8,15.8 97.3,11.8 97.9,13.6 98.4,15.1 99.4,15.8 98.4,16.5 97.9,18.0 97.3,19.8" fill="#3c3c3c"/><polygon points="99.8,15.8 100.2,14.6 101.2,15.8 100.2,17.0" fill="#3c3c3c"/><polygon points="102.9,15.8 103.4,12.2 104.0,13.8 104.5,15.2 105.5,15.8 104.5,16.4 104.0,17.8 103.4,19.4" fill="#3c3c3c"/><polygon points="105.9,15.8 106.3,14.6 107.3,15.8 106.3,17.0" fill="#3c3c3c"/><polygon points="108.9,15.8 109.4,11.8 110.0,13.6 110.5,15.1 111.5,15.8 110.5,16.5 110.0,18.0 109.4,19.8" fill="#3c3c3c"/><polygon points="111.9,15.8 112.3,14.6 113.3,15.8 112.3,17.0" fill="#3c3c3c"/><polygon points="114.9,15.8 115.4,12.2 116.0,13.8 116.5,15.2 117.5,15.8 116.5,16.4 116.0,17.8 115.4,19.4" fill="#3c3c3c"/><polygon points="118.0,15.8 118.4,14.6 119.4,15.8 118.4,17.0" fill="#3c3c3c"/><polygon points="121.0,15.8 121.5,11.8 122.1,13.6 122.6,15.1 123.6,15.8 122.6,16.5 122.1,18.0 121.5,19.8" fill="#3c3c3c"/><polygon points="124.0,15.8 124.4,14.6 125.4,15.8 124.4,17.0" fill="#3c3c3c"/><polygon points="127.1,15.8 127.6,12.2 128.2,13.8 128.7,15.2 129.7,15.8 128.7,16.4 128.2,17.8 127.6,19.4" fill="#3c3c3c"/><polygon points="133.1,15.8 133.6,11.8 134.2,13.6 134.7,15.1 135.7,15.8 134.7,16.5 134.2,18.0 133.6,19.8" fill="#3c3c3c"/><polygon points="139.1,15.8 139.6,12.2 140.2,13.8 140.7,15.2 141.7,15.8 140.7,16.4 140.2,17.8 139.6,19.4" fill="#3c3c3c"/><polygon points="142.2,15.8 142.6,14.6 143.6,15.8 142.6,17.0" fill="#3c3c3c"/><polygon points="145.2,15.8 145.7,11.8 146.3,13.6 146.8,15.1 147.8,15.8 146.8,16.5 146.3,18.0 145.7,19.8" fill="#3c3c3c"/><polygon points="151.2,15.8 151.8,12.2 152.3,13.8 152.8,15.2 153.8,15.8 152.8,16.4 152.3,17.8 151.8,19.4" fill="#3c3c3c"/><polygon points="154.3,15.8 154.7,14.6 155.7,15.8 154.7,17.0" fill="#3c3c3c"/><polygon points="157.3,15.8 157.8,11.8 158.4,13.6 158.9,15.1 159.9,15.8 158.9,16.5 158.4,18.0 157.8,19.8" fill="#3c3c3c"/><polygon points="160.3,15.8 160.7,14.6 161.7,15.8 160.7,17.0" fill="#3c3c3c"/><polygon points="163.4,15.8 163.9,12.2 164.5,13.8 165.0,15.2 166.0,15.8 165.0,16.4 164.5,17.8 163.9,19.4" fill="#3c3c3c"/><polygon points="166.4,15.8 166.8,14.6 167.8,15.8 166.8,17.0" fill="#3c3c3c"/><polygon points="169.4,15.8 169.9,11.8 170.5,13.6 171.0,15.1 172.0,15.8 171.0,16.5 170.5,18.0 169.9,19.8" fill="#3c3c3c"/><polygon points="172.4,15.8 172.8,14.6 173.8,15.8 172.8,17.0" fill="#3c3c3c"/><polygon points="175.4,15.8 175.9,12.2 176.5,13.8 177.0,15.2 178.0,15.8 177.0,16.4 176.5,17.8 175.9,19.4" fill="#3c3c3c"/><polygon points="178.5,15.8 178.9,14.6 179.9,15.8 178.9,17.0" fill="#3c3c3c"/><polygon points="181.5,15.8 182.0,11.8 182.6,13.6 183.1,15.1 184.1,15.8 183.1,16.5 182.6,18.0 182.0,19.8" fill="#3c3c3c"/><polygon points="187.5,15.8 188.0,12.2 188.6,13.8 189.1,15.2 190.1,15.8 189.1,16.4 188.6,17.8 188.0,19.4" fill="#3c3c3c"/><polygon points="193.6,15.8 194.1,11.8 194.7,13.6 195.2,15.1 196.2,15.8 195.2,16.5 194.7,18.0 194.1,19.8" fill="#3c3c3c"/><polygon points="196.6,15.8 197.0,14.6 198.0,15.8 197.0,17.0" fill="#3c3c3c"/><polygon points="199.6,15.8 200.1,12.2 200.7,13.8 201.2,15.2 202.2,15.8 201.2,16.4 200.7,17.8 200.1,19.4" fill="#3c3c3c"/><polygon points="202.7,15.8 203.1,14.6 204.1,15.8 203.1,17.0" fill="#3c3c3c"/><polygon points="205.7,15.8 206.2,11.8 206.8,13.6 207.3,15.1 208.3,15.8 207.3,16.5 206.8,18.0 206.2,19.8" fill="#3c3c3c"/><polygon points="211.8,15.8 212.2,12.2 212.8,13.8 213.3,15.2 214.3,15.8 213.3,16.4 212.8,17.8 212.2,19.4" fill="#3c3c3c"/><polygon points="214.8,15.8 215.2,14.6 216.2,15.8 215.2,17.0" fill="#3c3c3c"/><polygon points="217.8,15.8 218.3,11.8 218.9,13.6 219.4,15.1 220.4,15.8 219.4,16.5 218.9,18.0 218.3,19.8" fill="#3c3c3c"/><polygon points="220.8,15.8 221.2,14.6 222.2,15.8 221.2,17.0" fill="#3c3c3c"/><polygon points="223.9,15.8 224.4,12.2 225.0,13.8 225.5,15.2 226.5,15.8 225.5,16.4 225.0,17.8 224.4,19.4" fill="#3c3c3c"/><polygon points="226.9,15.8 227.3,14.6 228.3,15.8 227.3,17.0" fill="#3c3c3c"/><polygon points="229.9,15.8 230.4,11.8 231.0,13.6 231.5,15.1 232.5,15.8 231.5,16.5 231.0,18.0 230.4,19.8" fill="#3c3c3c"/><polygon points="232.9,15.8 233.3,14.6 234.3,15.8 233.3,17.0" fill="#3c3c3c"/><polygon points="235.9,15.8 236.4,12.2 237.0,13.8 237.5,15.2 238.5,15.8 237.5,16.4 237.0,17.8 236.4,19.4" fill="#3c3c3c"/><polygon points="239.0,15.8 239.4,14.6 240.4,15.8 239.4,17.0" fill="#3c3c3c"/><polygon points="242.0,15.8 242.5,11.8 243.1,13.6 243.6,15.1 244.6,15.8 243.6,16.5 243.1,18.0 242.5,19.8" fill="#3c3c3c"/><polygon points="245.0,15.8 245.4,14.6 246.4,15.8 245.4,17.0" fill="#3c3c3c"/><polygon points="248.0,15.8 248.5,12.2 249.1,13.8 249.6,15.2 250.6,15.8 249.6,16.4 249.1,17.8 248.5,19.4" fill="#3c3c3c"/><polygon points="251.1,15.8 251.5,14.6 252.5,15.8 251.5,17.0" fill="#3c3c3c"/><polygon points="254.1,15.8 254.6,11.8 255.2,13.6 255.7,15.1 256.7,15.8 255.7,16.5 255.2,18.0 254.6,19.8" fill="#3c3c3c"/><polygon points="257.1,15.8 257.5,14.6 258.5,15.8 257.5,17.0" fill="#3c3c3c"/><polygon points="260.1,15.8 260.6,12.2 261.2,13.8 261.8,15.2 262.8,15.8 261.8,16.4 261.2,17.8 260.6,19.4" fill="#3c3c3c"/><polygon points="263.2,15.8 263.6,14.6 264.6,15.8 263.6,17.0" fill="#3c3c3c"/><polygon points="266.2,15.8 266.7,11.8 267.3,13.6 267.8,15.1 268.8,15.8 267.8,16.5 267.3,18.0 266.7,19.8" fill="#3c3c3c"/><polygon points="272.2,15.8 272.8,12.2 273.4,13.8 273.9,15.2 274.9,15.8 273.9,16.4 273.4,17.8 272.8,19.4" fill="#3c3c3c"/><polygon points="275.3,15.8 275.7,14.6 276.7,15.8 275.7,17.0" fill="#3c3c3c"/><polygon points="278.3,15.8 278.8,11.8 279.4,13.6 279.9,15.1 280.9,15.8 279.9,16.5 279.4,18.0 278.8,19.8" fill="#3c3c3c"/><polygon points="281.3,15.8 281.7,14.6 282.7,15.8 281.7,17.0" fill="#3c3c3c"/><polygon points="284.3,15.8 284.8,12.2 285.4,13.8 285.9,15.2 286.9,15.8 285.9,16.4 285.4,17.8 284.8,19.4" fill="#3c3c3c"/><polygon points="287.4,15.8 287.8,14.6 288.8,15.8 287.8,17.0" fill="#3c3c3c"/><polygon points="290.4,15.8 290.9,11.8 291.5,13.6 292.0,15.1 293.0,15.8 292.0,16.5 291.5,18.0 290.9,19.8" fill="#3c3c3c"/><polygon points="293.4,15.8 293.8,14.6 294.8,15.8 293.8,17.0" fill="#3c3c3c"/><polygon points="296.4,15.8 296.9,12.2 297.6,13.8 298.1,15.2 299.1,15.8 298.1,16.4 297.6,17.8 296.9,19.4" fill="#3c3c3c"/><polygon points="302.5,15.8 303.0,11.8 303.6,13.6 304.1,15.1 305.1,15.8 304.1,16.5 303.6,18.0 303.0,19.8" fill="#3c3c3c"/><polygon points="305.5,15.8 305.9,14.6 306.9,15.8 305.9,17.0" fill="#3c3c3c"/><polygon points="308.5,15.8 309.0,12.2 309.6,13.8 310.1,15.2 311.1,15.8 310.1,16.4 309.6,17.8 309.0,19.4" fill="#3c3c3c"/><polygon points="314.6,15.8 315.1,11.8 315.7,13.6 316.2,15.1 317.2,15.8 316.2,16.5 315.7,18.0 315.1,19.8" fill="#3c3c3c"/><polygon points="317.6,15.8 318.0,14.6 319.0,15.8 318.0,17.0" fill="#3c3c3c"/><polygon points="320.6,15.8 321.1,12.2 321.8,13.8 322.2,15.2 323.2,15.8 322.2,16.4 321.8,17.8 321.1,19.4" fill="#3c3c3c"/><polygon points="323.7,15.8 324.1,14.6 325.1,15.8 324.1,17.0" fill="#3c3c3c"/><polygon points="326.7,15.8 327.2,11.8 327.8,13.6 328.3,15.1 329.3,15.8 328.3,16.5 327.8,18.0 327.2,19.8" fill="#3c3c3c"/><polygon points="329.7,15.8 330.1,14.6 331.1,15.8 330.1,17.0" fill="#3c3c3c"/><polygon points="332.8,15.8 333.2,12.2 333.9,13.8 334.4,15.2 335.4,15.8 334.4,16.4 333.9,17.8 333.2,19.4" fill="#3c3c3c"/><polygon points="335.8,15.8 336.2,14.6 337.2,15.8 336.2,17.0" fill="#3c3c3c"/><polygon points="338.8,15.8 339.3,11.8 339.9,13.6 340.4,15.1 341.4,15.8 340.4,16.5 339.9,18.0 339.3,19.8" fill="#3c3c3c"/><polygon points="341.8,15.8 342.2,14.6 343.2,15.8 342.2,17.0" fill="#3c3c3c"/><polygon points="344.8,15.8 345.3,12.2 345.9,13.8 346.4,15.2 347.4,15.8 346.4,16.4 345.9,17.8 345.3,19.4" fill="#3c3c3c"/><polygon points="350.9,15.8 351.4,11.8 352.0,13.6 352.5,15.1 353.5,15.8 352.5,16.5 352.0,18.0 351.4,19.8" fill="#3c3c3c"/><polygon points="353.9,15.8 354.3,14.6 355.3,15.8 354.3,17.0" fill="#3c3c3c"/><polygon points="357.0,15.8 357.5,12.2 358.1,13.8 358.6,15.2 359.6,15.8 358.6,16.4 358.1,17.8 357.5,19.4" fill="#3c3c3c"/><polygon points="363.0,15.8 363.5,11.8 364.1,13.6 364.6,15.1 365.6,15.8 364.6,16.5 364.1,18.0 363.5,19.8" fill="#3c3c3c"/><polygon points="369.0,15.8 369.5,12.2 370.1,13.8 370.6,15.2 371.6,15.8 370.6,16.4 370.1,17.8 369.5,19.4" fill="#3c3c3c"/><polygon points="372.1,15.8 372.5,14.6 373.5,15.8 372.5,17.0" fill="#3c3c3c"/><polygon points="375.1,15.8 375.6,11.8 376.2,13.6 376.7,15.1 377.7,15.8 376.7,16.5 376.2,18.0 375.6,19.8" fill="#3c3c3c"/><polygon points="378.1,15.8 378.5,14.6 379.5,15.8 378.5,17.0" fill="#3c3c3c"/><polygon points="381.1,15.8 381.6,12.2 382.2,13.8 382.8,15.2 383.8,15.8 382.8,16.4 382.2,17.8 381.6,19.4" fill="#3c3c3c"/><rect x="0" y="43.9" width="386" height="0.8" fill="#a8a8a8"/><polygon points="0.0,44.3 0.5,40.3 1.1,42.1 1.6,43.6 2.6,44.3 1.6,45.0 1.1,46.5 0.5,48.3" fill="#3c3c3c"/><polygon points="3.0,44.3 3.4,43.1 4.4,44.3 3.4,45.5" fill="#3c3c3c"/><polygon points="6.1,44.3 6.6,40.7 7.2,42.3 7.7,43.7 8.7,44.3 7.7,44.9 7.2,46.3 6.6,47.9" fill="#3c3c3c"/><polygon points="9.1,44.3 9.5,43.1 10.5,44.3 9.5,45.5" fill="#3c3c3c"/><polygon points="12.1,44.3 12.6,40.3 13.2,42.1 13.7,43.6 14.7,44.3 13.7,45.0 13.2,46.5 12.6,48.3" fill="#3c3c3c"/><polygon points="15.1,44.3 15.5,43.1 16.5,44.3 15.5,45.5" fill="#3c3c3c"/><polygon points="18.2,44.3 18.7,40.7 19.3,42.3 19.8,43.7 20.8,44.3 19.8,44.9 19.3,46.3 18.7,47.9" fill="#3c3c3c"/><polygon points="21.2,44.3 21.6,43.1 22.6,44.3 21.6,45.5" fill="#3c3c3c"/><polygon points="24.2,44.3 24.7,40.3 25.3,42.1 25.8,43.6 26.8,44.3 25.8,45.0 25.3,46.5 24.7,48.3" fill="#3c3c3c"/><polygon points="30.2,44.3 30.8,40.7 31.4,42.3 31.9,43.7 32.9,44.3 31.9,44.9 31.4,46.3 30.8,47.9" fill="#3c3c3c"/><polygon points="36.3,44.3 36.8,40.3 37.4,42.1 37.9,43.6 38.9,44.3 37.9,45.0 37.4,46.5 36.8,48.3" fill="#3c3c3c"/><polygon points="39.3,44.3 39.7,43.1 40.7,44.3 39.7,45.5" fill="#3c3c3c"/><polygon points="42.3,44.3 42.8,40.7 43.4,42.3 43.9,43.7 44.9,44.3 43.9,44.9 43.4,46.3 42.8,47.9" fill="#3c3c3c"/><polygon points="48.4,44.3 48.9,40.3 49.5,42.1 50.0,43.6 51.0,44.3 50.0,45.0 49.5,46.5 48.9,48.3" fill="#3c3c3c"/><polygon points="54.4,44.3 54.9,40.7 55.5,42.3 56.0,43.7 57.0,44.3 56.0,44.9 55.5,46.3 54.9,47.9" fill="#3c3c3c"/><polygon points="57.5,44.3 57.9,43.1 58.9,44.3 57.9,45.5" fill="#3c3c3c"/><polygon points="60.5,44.3 61.0,40.3 61.6,42.1 62.1,43.6 63.1,44.3 62.1,45.0 61.6,46.5 61.0,48.3" fill="#3c3c3c"/><polygon points="63.5,44.3 63.9,43.1 64.9,44.3 63.9,45.5" fill="#3c3c3c"/><polygon points="66.6,44.3 67.1,40.7 67.7,42.3 68.2,43.7 69.2,44.3 68.2,44.9 67.7,46.3 67.1,47.9" fill="#3c3c3c"/><polygon points="69.6,44.3 70.0,43.1 71.0,44.3 70.0,45.5" fill="#3c3c3c"/><polygon points="72.6,44.3 73.1,40.3 73.7,42.1 74.2,43.6 75.2,44.3 74.2,45.0 73.7,46.5 73.1,48.3" fill="#3c3c3c"/><polygon points="78.6,44.3 79.1,40.7 79.7,42.3 80.2,43.7 81.2,44.3 80.2,44.9 79.7,46.3 79.1,47.9" fill="#3c3c3c"/><polygon points="81.7,44.3 82.1,43.1 83.1,44.3 82.1,45.5" fill="#3c3c3c"/><polygon points="84.7,44.3 85.2,40.3 85.8,42.1 86.3,43.6 87.3,44.3 86.3,45.0 85.8,46.5 85.2,48.3" fill="#3c3c3c"/><polygon points="87.7,44.3 88.1,43.1 89.1,44.3 88.1,45.5" fill="#3c3c3c"/><polygon points="90.8,44.3 91.2,40.7 91.8,42.3 92.3,43.7 93.3,44.3 92.3,44.9 91.8,46.3 91.2,47.9" fill="#3c3c3c"/><polygon points="96.8,44.3 97.3,40.3 97.9,42.1 98.4,43.6 99.4,44.3 98.4,45.0 97.9,46.5 97.3,48.3" fill="#3c3c3c"/><polygon points="99.8,44.3 100.2,43.1 101.2,44.3 100.2,45.5" fill="#3c3c3c"/><polygon points="102.9,44.3 103.4,40.7 104.0,42.3 104.5,43.7 105.5,44.3 104.5,44.9 104.0,46.3 103.4,47.9" fill="#3c3c3c"/><polygon points="105.9,44.3 106.3,43.1 107.3,44.3 106.3,45.5" fill="#3c3c3c"/><polygon points="108.9,44.3 109.4,40.3 110.0,42.1 110.5,43.6 111.5,44.3 110.5,45.0 110.0,46.5 109.4,48.3" fill="#3c3c3c"/><polygon points="111.9,44.3 112.3,43.1 113.3,44.3 112.3,45.5" fill="#3c3c3c"/><polygon points="114.9,44.3 115.4,40.7 116.0,42.3 116.5,43.7 117.5,44.3 116.5,44.9 116.0,46.3 115.4,47.9" fill="#3c3c3c"/><polygon points="118.0,44.3 118.4,43.1 119.4,44.3 118.4,45.5" fill="#3c3c3c"/><polygon points="121.0,44.3 121.5,40.3 122.1,42.1 122.6,43.6 123.6,44.3 122.6,45.0 122.1,46.5 121.5,48.3" fill="#3c3c3c"/><polygon points="124.0,44.3 124.4,43.1 125.4,44.3 124.4,45.5" fill="#3c3c3c"/><polygon points="127.1,44.3 127.6,40.7 128.2,42.3 128.7,43.7 129.7,44.3 128.7,44.9 128.2,46.3 127.6,47.9" fill="#3c3c3c"/><polygon points="133.1,44.3 133.6,40.3 134.2,42.1 134.7,43.6 135.7,44.3 134.7,45.0 134.2,46.5 133.6,48.3" fill="#3c3c3c"/><polygon points="139.1,44.3 139.6,40.7 140.2,42.3 140.7,43.7 141.7,44.3 140.7,44.9 140.2,46.3 139.6,47.9" fill="#3c3c3c"/><polygon points="142.2,44.3 142.6,43.1 143.6,44.3 142.6,45.5" fill="#3c3c3c"/><polygon points="145.2,44.3 145.7,40.3 146.3,42.1 146.8,43.6 147.8,44.3 146.8,45.0 146.3,46.5 145.7,48.3" fill="#3c3c3c"/><polygon points="151.2,44.3 151.8,40.7 152.3,42.3 152.8,43.7 153.8,44.3 152.8,44.9 152.3,46.3 151.8,47.9" fill="#3c3c3c"/><polygon points="154.3,44.3 154.7,43.1 155.7,44.3 154.7,45.5" fill="#3c3c3c"/><polygon points="157.3,44.3 157.8,40.3 158.4,42.1 158.9,43.6 159.9,44.3 158.9,45.0 158.4,46.5 157.8,48.3" fill="#3c3c3c"/><polygon points="160.3,44.3 160.7,43.1 161.7,44.3 160.7,45.5" fill="#3c3c3c"/><polygon points="163.4,44.3 163.9,40.7 164.5,42.3 165.0,43.7 166.0,44.3 165.0,44.9 164.5,46.3 163.9,47.9" fill="#3c3c3c"/><polygon points="166.4,44.3 166.8,43.1 167.8,44.3 166.8,45.5" fill="#3c3c3c"/><polygon points="169.4,44.3 169.9,40.3 170.5,42.1 171.0,43.6 172.0,44.3 171.0,45.0 170.5,46.5 169.9,48.3" fill="#3c3c3c"/><polygon points="172.4,44.3 172.8,43.1 173.8,44.3 172.8,45.5" fill="#3c3c3c"/><polygon points="175.4,44.3 175.9,40.7 176.5,42.3 177.0,43.7 178.0,44.3 177.0,44.9 176.5,46.3 175.9,47.9" fill="#3c3c3c"/><polygon points="178.5,44.3 178.9,43.1 179.9,44.3 178.9,45.5" fill="#3c3c3c"/><polygon points="181.5,44.3 182.0,40.3 182.6,42.1 183.1,43.6 184.1,44.3 183.1,45.0 182.6,46.5 182.0,48.3" fill="#3c3c3c"/><polygon points="187.5,44.3 188.0,40.7 188.6,42.3 189.1,43.7 190.1,44.3 189.1,44.9 188.6,46.3 188.0,47.9" fill="#3c3c3c"/><polygon points="193.6,44.3 194.1,40.3 194.7,42.1 195.2,43.6 196.2,44.3 195.2,45.0 194.7,46.5 194.1,48.3" fill="#3c3c3c"/><polygon points="196.6,44.3 197.0,43.1 198.0,44.3 197.0,45.5" fill="#3c3c3c"/><polygon points="199.6,44.3 200.1,40.7 200.7,42.3 201.2,43.7 202.2,44.3 201.2,44.9 200.7,46.3 200.1,47.9" fill="#3c3c3c"/><polygon points="202.7,44.3 203.1,43.1 204.1,44.3 203.1,45.5" fill="#3c3c3c"/><polygon points="205.7,44.3 206.2,40.3 206.8,42.1 207.3,43.6 208.3,44.3 207.3,45.0 206.8,46.5 206.2,48.3" fill="#3c3c3c"/><polygon points="211.8,44.3 212.2,40.7 212.8,42.3 213.3,43.7 214.3,44.3 213.3,44.9 212.8,46.3 212.2,47.9" fill="#3c3c3c"/><polygon points="214.8,44.3 215.2,43.1 216.2,44.3 215.2,45.5" fill="#3c3c3c"/><polygon points="217.8,44.3 218.3,40.3 218.9,42.1 219.4,43.6 220.4,44.3 219.4,45.0 218.9,46.5 218.3,48.3" fill="#3c3c3c"/><polygon points="220.8,44.3 221.2,43.1 222.2,44.3 221.2,45.5" fill="#3c3c3c"/><polygon points="223.9,44.3 224.4,40.7 225.0,42.3 225.5,43.7 226.5,44.3 225.5,44.9 225.0,46.3 224.4,47.9" fill="#3c3c3c"/><polygon points="226.9,44.3 227.3,43.1 228.3,44.3 227.3,45.5" fill="#3c3c3c"/><polygon points="229.9,44.3 230.4,40.3 231.0,42.1 231.5,43.6 232.5,44.3 231.5,45.0 231.0,46.5 230.4,48.3" fill="#3c3c3c"/><polygon points="232.9,44.3 233.3,43.1 234.3,44.3 233.3,45.5" fill="#3c3c3c"/><polygon points="235.9,44.3 236.4,40.7 237.0,42.3 237.5,43.7 238.5,44.3 237.5,44.9 237.0,46.3 236.4,47.9" fill="#3c3c3c"/><polygon points="239.0,44.3 239.4,43.1 240.4,44.3 239.4,45.5" fill="#3c3c3c"/><polygon points="242.0,44.3 242.5,40.3 243.1,42.1 243.6,43.6 244.6,44.3 243.6,45.0 243.1,46.5 242.5,48.3" fill="#3c3c3c"/><polygon points="245.0,44.3 245.4,43.1 246.4,44.3 245.4,45.5" fill="#3c3c3c"/><polygon points="248.0,44.3 248.5,40.7 249.1,42.3 249.6,43.7 250.6,44.3 249.6,44.9 249.1,46.3 248.5,47.9" fill="#3c3c3c"/><polygon points="251.1,44.3 251.5,43.1 252.5,44.3 251.5,45.5" fill="#3c3c3c"/><polygon points="254.1,44.3 254.6,40.3 255.2,42.1 255.7,43.6 256.7,44.3 255.7,45.0 255.2,46.5 254.6,48.3" fill="#3c3c3c"/><polygon points="257.1,44.3 257.5,43.1 258.5,44.3 257.5,45.5" fill="#3c3c3c"/><polygon points="260.1,44.3 260.6,40.7 261.2,42.3 261.8,43.7 262.8,44.3 261.8,44.9 261.2,46.3 260.6,47.9" fill="#3c3c3c"/><polygon points="263.2,44.3 263.6,43.1 264.6,44.3 263.6,45.5" fill="#3c3c3c"/><polygon points="266.2,44.3 266.7,40.3 267.3,42.1 267.8,43.6 268.8,44.3 267.8,45.0 267.3,46.5 266.7,48.3" fill="#3c3c3c"/><polygon points="272.2,44.3 272.8,40.7 273.4,42.3 273.9,43.7 274.9,44.3 273.9,44.9 273.4,46.3 272.8,47.9" fill="#3c3c3c"/><polygon points="275.3,44.3 275.7,43.1 276.7,44.3 275.7,45.5" fill="#3c3c3c"/><polygon points="278.3,44.3 278.8,40.3 279.4,42.1 279.9,43.6 280.9,44.3 279.9,45.0 279.4,46.5 278.8,48.3" fill="#3c3c3c"/><polygon points="281.3,44.3 281.7,43.1 282.7,44.3 281.7,45.5" fill="#3c3c3c"/><polygon points="284.3,44.3 284.8,40.7 285.4,42.3 285.9,43.7 286.9,44.3 285.9,44.9 285.4,46.3 284.8,47.9" fill="#3c3c3c"/><polygon points="287.4,44.3 287.8,43.1 288.8,44.3 287.8,45.5" fill="#3c3c3c"/><polygon points="290.4,44.3 290.9,40.3 291.5,42.1 292.0,43.6 293.0,44.3 292.0,45.0 291.5,46.5 290.9,48.3" fill="#3c3c3c"/><polygon points="293.4,44.3 293.8,43.1 294.8,44.3 293.8,45.5" fill="#3c3c3c"/><polygon points="296.4,44.3 296.9,40.7 297.6,42.3 298.1,43.7 299.1,44.3 298.1,44.9 297.6,46.3 296.9,47.9" fill="#3c3c3c"/><polygon points="302.5,44.3 303.0,40.3 303.6,42.1 304.1,43.6 305.1,44.3 304.1,45.0 303.6,46.5 303.0,48.3" fill="#3c3c3c"/><polygon points="305.5,44.3 305.9,43.1 306.9,44.3 305.9,45.5" fill="#3c3c3c"/><polygon points="308.5,44.3 309.0,40.7 309.6,42.3 310.1,43.7 311.1,44.3 310.1,44.9 309.6,46.3 309.0,47.9" fill="#3c3c3c"/><polygon points="314.6,44.3 315.1,40.3 315.7,42.1 316.2,43.6 317.2,44.3 316.2,45.0 315.7,46.5 315.1,48.3" fill="#3c3c3c"/><polygon points="317.6,44.3 318.0,43.1 319.0,44.3 318.0,45.5" fill="#3c3c3c"/><polygon points="320.6,44.3 321.1,40.7 321.8,42.3 322.2,43.7 323.2,44.3 322.2,44.9 321.8,46.3 321.1,47.9" fill="#3c3c3c"/><polygon points="323.7,44.3 324.1,43.1 325.1,44.3 324.1,45.5" fill="#3c3c3c"/><polygon points="326.7,44.3 327.2,40.3 327.8,42.1 328.3,43.6 329.3,44.3 328.3,45.0 327.8,46.5 327.2,48.3" fill="#3c3c3c"/><polygon points="329.7,44.3 330.1,43.1 331.1,44.3 330.1,45.5" fill="#3c3c3c"/><polygon points="332.8,44.3 333.2,40.7 333.9,42.3 334.4,43.7 335.4,44.3 334.4,44.9 333.9,46.3 333.2,47.9" fill="#3c3c3c"/><polygon points="335.8,44.3 336.2,43.1 337.2,44.3 336.2,45.5" fill="#3c3c3c"/><polygon points="338.8,44.3 339.3,40.3 339.9,42.1 340.4,43.6 341.4,44.3 340.4,45.0 339.9,46.5 339.3,48.3" fill="#3c3c3c"/><polygon points="341.8,44.3 342.2,43.1 343.2,44.3 342.2,45.5" fill="#3c3c3c"/><polygon points="344.8,44.3 345.3,40.7 345.9,42.3 346.4,43.7 347.4,44.3 346.4,44.9 345.9,46.3 345.3,47.9" fill="#3c3c3c"/><polygon points="350.9,44.3 351.4,40.3 352.0,42.1 352.5,43.6 353.5,44.3 352.5,45.0 352.0,46.5 351.4,48.3" fill="#3c3c3c"/><polygon points="353.9,44.3 354.3,43.1 355.3,44.3 354.3,45.5" fill="#3c3c3c"/><polygon points="357.0,44.3 357.5,40.7 358.1,42.3 358.6,43.7 359.6,44.3 358.6,44.9 358.1,46.3 357.5,47.9" fill="#3c3c3c"/><polygon points="363.0,44.3 363.5,40.3 364.1,42.1 364.6,43.6 365.6,44.3 364.6,45.0 364.1,46.5 363.5,48.3" fill="#3c3c3c"/><polygon points="369.0,44.3 369.5,40.7 370.1,42.3 370.6,43.7 371.6,44.3 370.6,44.9 370.1,46.3 369.5,47.9" fill="#3c3c3c"/><polygon points="372.1,44.3 372.5,43.1 373.5,44.3 372.5,45.5" fill="#3c3c3c"/><polygon points="375.1,44.3 375.6,40.3 376.2,42.1 376.7,43.6 377.7,44.3 376.7,45.0 376.2,46.5 375.6,48.3" fill="#3c3c3c"/><polygon points="378.1,44.3 378.5,43.1 379.5,44.3 378.5,45.5" fill="#3c3c3c"/><polygon points="381.1,44.3 381.6,40.7 382.2,42.3 382.8,43.7 383.8,44.3 382.8,44.9 382.2,46.3 381.6,47.9" fill="#3c3c3c"/></svg>
<svg style="position:absolute;left:207px;top:288px" width="59" height="9" viewBox="0 0 59 9"><polygon points="0,0 59,0 52,8.5 0,8.5" fill="#4a4a4a"/></svg>
<div style="left:208.5px;top:285.8px;height:14px;line-height:14px;font-size:7px;color:#e2e2e2;font-weight:normal;white-space:nowrap;">07 Mels Hat 01</div>
<svg style="position:absolute;left:207px;top:340px" width="22" height="8" viewBox="0 0 22 8"><polygon points="0,0 13,0 19,7.5 0,7.5" fill="#4a4a4a"/><circle cx="6.5" cy="4" r="1.7" fill="none" stroke="#ccc" stroke-width="0.8"/></svg>
<svg style="position:absolute;left:207px;top:289px" width="5" height="5" viewBox="0 0 5 5"><polygon points="0,0 4.5,0 0,4.5" fill="#eee"/></svg>
<div style="left:593px;top:288px;width:388px;height:59px;background:#d4d4d4;"></div>
<svg style="position:absolute;left:593px;top:288px" width="388" height="59" viewBox="0 0 388 59"><rect x="0" y="15.4" width="388" height="0.8" fill="#a8a8a8"/><polygon points="0.0,15.8 0.5,12.0 1.1,13.7 1.6,15.1 2.6,15.8 1.6,16.5 1.1,17.9 0.5,19.6" fill="#3c3c3c"/><polygon points="3.0,15.8 3.5,13.2 4.1,14.4 4.3,15.3 5.1,15.8 4.3,16.3 4.1,17.2 3.5,18.4" fill="#3c3c3c"/><polygon points="6.0,15.8 6.5,12.6 7.1,14.0 7.6,15.2 8.6,15.8 7.6,16.4 7.1,17.6 6.5,19.0" fill="#3c3c3c"/><polygon points="9.1,15.8 9.5,14.6 10.5,15.8 9.5,17.0" fill="#3c3c3c"/><polygon points="12.1,15.8 12.6,12.0 13.2,13.7 13.7,15.1 14.7,15.8 13.7,16.5 13.2,17.9 12.6,19.6" fill="#3c3c3c"/><polygon points="15.1,15.8 15.6,13.2 16.2,14.4 16.4,15.3 17.2,15.8 16.4,16.3 16.2,17.2 15.6,18.4" fill="#3c3c3c"/><polygon points="18.1,15.8 18.6,12.6 19.2,14.0 19.7,15.2 20.7,15.8 19.7,16.4 19.2,17.6 18.6,19.0" fill="#3c3c3c"/><polygon points="21.2,15.8 21.6,14.6 22.6,15.8 21.6,17.0" fill="#3c3c3c"/><polygon points="24.2,15.8 24.7,12.0 25.3,13.7 25.8,15.1 26.8,15.8 25.8,16.5 25.3,17.9 24.7,19.6" fill="#3c3c3c"/><polygon points="30.2,15.8 30.8,12.6 31.4,14.0 31.9,15.2 32.9,15.8 31.9,16.4 31.4,17.6 30.8,19.0" fill="#3c3c3c"/><polygon points="33.3,15.8 33.7,14.6 34.7,15.8 33.7,17.0" fill="#3c3c3c"/><polygon points="36.3,15.8 36.8,12.0 37.4,13.7 37.9,15.1 38.9,15.8 37.9,16.5 37.4,17.9 36.8,19.6" fill="#3c3c3c"/><polygon points="42.4,15.8 42.9,12.6 43.5,14.0 44.0,15.2 45.0,15.8 44.0,16.4 43.5,17.6 42.9,19.0" fill="#3c3c3c"/><polygon points="45.4,15.8 45.8,14.6 46.8,15.8 45.8,17.0" fill="#3c3c3c"/><polygon points="48.4,15.8 48.9,12.0 49.5,13.7 50.0,15.1 51.0,15.8 50.0,16.5 49.5,17.9 48.9,19.6" fill="#3c3c3c"/><polygon points="51.4,15.8 51.8,14.6 52.8,15.8 51.8,17.0" fill="#3c3c3c"/><polygon points="54.5,15.8 55.0,12.6 55.6,14.0 56.1,15.2 57.1,15.8 56.1,16.4 55.6,17.6 55.0,19.0" fill="#3c3c3c"/><polygon points="60.5,15.8 61.0,12.0 61.6,13.7 62.1,15.1 63.1,15.8 62.1,16.5 61.6,17.9 61.0,19.6" fill="#3c3c3c"/><polygon points="63.5,15.8 63.9,14.6 64.9,15.8 63.9,17.0" fill="#3c3c3c"/><polygon points="66.5,15.8 67.0,12.6 67.6,14.0 68.1,15.2 69.1,15.8 68.1,16.4 67.6,17.6 67.0,19.0" fill="#3c3c3c"/><polygon points="69.6,15.8 70.0,14.6 71.0,15.8 70.0,17.0" fill="#3c3c3c"/><polygon points="72.6,15.8 73.1,12.0 73.7,13.7 74.2,15.1 75.2,15.8 74.2,16.5 73.7,17.9 73.1,19.6" fill="#3c3c3c"/><polygon points="78.6,15.8 79.1,12.6 79.7,14.0 80.2,15.2 81.2,15.8 80.2,16.4 79.7,17.6 79.1,19.0" fill="#3c3c3c"/><polygon points="84.7,15.8 85.2,12.0 85.8,13.7 86.3,15.1 87.3,15.8 86.3,16.5 85.8,17.9 85.2,19.6" fill="#3c3c3c"/><polygon points="87.7,15.8 88.1,14.6 89.1,15.8 88.1,17.0" fill="#3c3c3c"/><polygon points="90.8,15.8 91.2,12.6 91.8,14.0 92.3,15.2 93.3,15.8 92.3,16.4 91.8,17.6 91.2,19.0" fill="#3c3c3c"/><polygon points="93.8,15.8 94.2,14.6 95.2,15.8 94.2,17.0" fill="#3c3c3c"/><polygon points="96.8,15.8 97.3,12.0 97.9,13.7 98.4,15.1 99.4,15.8 98.4,16.5 97.9,17.9 97.3,19.6" fill="#3c3c3c"/><polygon points="99.8,15.8 100.3,13.2 100.9,14.4 101.1,15.3 101.9,15.8 101.1,16.3 100.9,17.2 100.3,18.4" fill="#3c3c3c"/><polygon points="102.9,15.8 103.4,12.6 104.0,14.0 104.5,15.2 105.5,15.8 104.5,16.4 104.0,17.6 103.4,19.0" fill="#3c3c3c"/><polygon points="105.9,15.8 106.3,14.6 107.3,15.8 106.3,17.0" fill="#3c3c3c"/><polygon points="108.9,15.8 109.4,12.0 110.0,13.7 110.5,15.1 111.5,15.8 110.5,16.5 110.0,17.9 109.4,19.6" fill="#3c3c3c"/><polygon points="115.0,15.8 115.5,12.6 116.1,14.0 116.6,15.2 117.6,15.8 116.6,16.4 116.1,17.6 115.5,19.0" fill="#3c3c3c"/><polygon points="118.0,15.8 118.4,14.6 119.4,15.8 118.4,17.0" fill="#3c3c3c"/><polygon points="121.0,15.8 121.5,12.0 122.1,13.7 122.6,15.1 123.6,15.8 122.6,16.5 122.1,17.9 121.5,19.6" fill="#3c3c3c"/><polygon points="124.0,15.8 124.4,14.6 125.4,15.8 124.4,17.0" fill="#3c3c3c"/><polygon points="127.0,15.8 127.5,12.6 128.1,14.0 128.6,15.2 129.6,15.8 128.6,16.4 128.1,17.6 127.5,19.0" fill="#3c3c3c"/><polygon points="130.1,15.8 130.5,14.6 131.5,15.8 130.5,17.0" fill="#3c3c3c"/><polygon points="133.1,15.8 133.6,12.0 134.2,13.7 134.7,15.1 135.7,15.8 134.7,16.5 134.2,17.9 133.6,19.6" fill="#3c3c3c"/><polygon points="139.1,15.8 139.6,12.6 140.2,14.0 140.7,15.2 141.7,15.8 140.7,16.4 140.2,17.6 139.6,19.0" fill="#3c3c3c"/><polygon points="142.2,15.8 142.6,14.6 143.6,15.8 142.6,17.0" fill="#3c3c3c"/><polygon points="145.2,15.8 145.7,12.0 146.3,13.7 146.8,15.1 147.8,15.8 146.8,16.5 146.3,17.9 145.7,19.6" fill="#3c3c3c"/><polygon points="148.2,15.8 148.6,14.6 149.6,15.8 148.6,17.0" fill="#3c3c3c"/><polygon points="151.2,15.8 151.8,12.6 152.3,14.0 152.8,15.2 153.8,15.8 152.8,16.4 152.3,17.6 151.8,19.0" fill="#3c3c3c"/><polygon points="154.3,15.8 154.7,14.6 155.7,15.8 154.7,17.0" fill="#3c3c3c"/><polygon points="157.3,15.8 157.8,12.0 158.4,13.7 158.9,15.1 159.9,15.8 158.9,16.5 158.4,17.9 157.8,19.6" fill="#3c3c3c"/><polygon points="160.3,15.8 160.7,14.6 161.7,15.8 160.7,17.0" fill="#3c3c3c"/><polygon points="163.4,15.8 163.9,12.6 164.5,14.0 165.0,15.2 166.0,15.8 165.0,16.4 164.5,17.6 163.9,19.0" fill="#3c3c3c"/><polygon points="166.4,15.8 166.8,14.6 167.8,15.8 166.8,17.0" fill="#3c3c3c"/><polygon points="169.4,15.8 169.9,12.0 170.5,13.7 171.0,15.1 172.0,15.8 171.0,16.5 170.5,17.9 169.9,19.6" fill="#3c3c3c"/><polygon points="175.5,15.8 176.0,12.6 176.6,14.0 177.1,15.2 178.1,15.8 177.1,16.4 176.6,17.6 176.0,19.0" fill="#3c3c3c"/><polygon points="178.5,15.8 178.9,14.6 179.9,15.8 178.9,17.0" fill="#3c3c3c"/><polygon points="181.5,15.8 182.0,12.0 182.6,13.7 183.1,15.1 184.1,15.8 183.1,16.5 182.6,17.9 182.0,19.6" fill="#3c3c3c"/><polygon points="184.5,15.8 184.9,14.6 185.9,15.8 184.9,17.0" fill="#3c3c3c"/><polygon points="187.5,15.8 188.0,12.6 188.6,14.0 189.1,15.2 190.1,15.8 189.1,16.4 188.6,17.6 188.0,19.0" fill="#3c3c3c"/><polygon points="190.6,15.8 191.0,14.6 192.0,15.8 191.0,17.0" fill="#3c3c3c"/><polygon points="193.6,15.8 194.1,12.0 194.7,13.7 195.2,15.1 196.2,15.8 195.2,16.5 194.7,17.9 194.1,19.6" fill="#3c3c3c"/><polygon points="199.6,15.8 200.1,12.6 200.7,14.0 201.2,15.2 202.2,15.8 201.2,16.4 200.7,17.6 200.1,19.0" fill="#3c3c3c"/><polygon points="202.7,15.8 203.1,14.6 204.1,15.8 203.1,17.0" fill="#3c3c3c"/><polygon points="205.7,15.8 206.2,12.0 206.8,13.7 207.3,15.1 208.3,15.8 207.3,16.5 206.8,17.9 206.2,19.6" fill="#3c3c3c"/><polygon points="211.8,15.8 212.2,12.6 212.8,14.0 213.3,15.2 214.3,15.8 213.3,16.4 212.8,17.6 212.2,19.0" fill="#3c3c3c"/><polygon points="214.8,15.8 215.2,14.6 216.2,15.8 215.2,17.0" fill="#3c3c3c"/><polygon points="217.8,15.8 218.3,12.0 218.9,13.7 219.4,15.1 220.4,15.8 219.4,16.5 218.9,17.9 218.3,19.6" fill="#3c3c3c"/><polygon points="220.8,15.8 221.2,14.6 222.2,15.8 221.2,17.0" fill="#3c3c3c"/><polygon points="223.9,15.8 224.4,12.6 225.0,14.0 225.5,15.2 226.5,15.8 225.5,16.4 225.0,17.6 224.4,19.0" fill="#3c3c3c"/><polygon points="226.9,15.8 227.3,14.6 228.3,15.8 227.3,17.0" fill="#3c3c3c"/><polygon points="229.9,15.8 230.4,12.0 231.0,13.7 231.5,15.1 232.5,15.8 231.5,16.5 231.0,17.9 230.4,19.6" fill="#3c3c3c"/><polygon points="232.9,15.8 233.3,14.6 234.3,15.8 233.3,17.0" fill="#3c3c3c"/><polygon points="236.0,15.8 236.5,12.6 237.1,14.0 237.6,15.2 238.6,15.8 237.6,16.4 237.1,17.6 236.5,19.0" fill="#3c3c3c"/><polygon points="242.0,15.8 242.5,12.0 243.1,13.7 243.6,15.1 244.6,15.8 243.6,16.5 243.1,17.9 242.5,19.6" fill="#3c3c3c"/><polygon points="245.0,15.8 245.4,14.6 246.4,15.8 245.4,17.0" fill="#3c3c3c"/><polygon points="248.0,15.8 248.5,12.6 249.1,14.0 249.6,15.2 250.6,15.8 249.6,16.4 249.1,17.6 248.5,19.0" fill="#3c3c3c"/><polygon points="251.1,15.8 251.5,14.6 252.5,15.8 251.5,17.0" fill="#3c3c3c"/><polygon points="254.1,15.8 254.6,12.0 255.2,13.7 255.7,15.1 256.7,15.8 255.7,16.5 255.2,17.9 254.6,19.6" fill="#3c3c3c"/><polygon points="257.1,15.8 257.5,14.6 258.5,15.8 257.5,17.0" fill="#3c3c3c"/><polygon points="260.1,15.8 260.6,12.6 261.2,14.0 261.8,15.2 262.8,15.8 261.8,16.4 261.2,17.6 260.6,19.0" fill="#3c3c3c"/><polygon points="263.2,15.8 263.7,13.2 264.3,14.4 264.5,15.3 265.3,15.8 264.5,16.3 264.3,17.2 263.7,18.4" fill="#3c3c3c"/><polygon points="266.2,15.8 266.7,12.0 267.3,13.7 267.8,15.1 268.8,15.8 267.8,16.5 267.3,17.9 266.7,19.6" fill="#3c3c3c"/><polygon points="272.2,15.8 272.8,12.6 273.4,14.0 273.9,15.2 274.9,15.8 273.9,16.4 273.4,17.6 272.8,19.0" fill="#3c3c3c"/><polygon points="278.3,15.8 278.8,12.0 279.4,13.7 279.9,15.1 280.9,15.8 279.9,16.5 279.4,17.9 278.8,19.6" fill="#3c3c3c"/><polygon points="281.3,15.8 281.8,13.2 282.4,14.4 282.6,15.3 283.4,15.8 282.6,16.3 282.4,17.2 281.8,18.4" fill="#3c3c3c"/><polygon points="284.3,15.8 284.8,12.6 285.4,14.0 285.9,15.2 286.9,15.8 285.9,16.4 285.4,17.6 284.8,19.0" fill="#3c3c3c"/><polygon points="287.4,15.8 287.8,14.6 288.8,15.8 287.8,17.0" fill="#3c3c3c"/><polygon points="290.4,15.8 290.9,12.0 291.5,13.7 292.0,15.1 293.0,15.8 292.0,16.5 291.5,17.9 290.9,19.6" fill="#3c3c3c"/><polygon points="293.4,15.8 293.8,14.6 294.8,15.8 293.8,17.0" fill="#3c3c3c"/><polygon points="296.5,15.8 297.0,12.6 297.6,14.0 298.1,15.2 299.1,15.8 298.1,16.4 297.6,17.6 297.0,19.0" fill="#3c3c3c"/><polygon points="299.5,15.8 299.9,14.6 300.9,15.8 299.9,17.0" fill="#3c3c3c"/><polygon points="302.5,15.8 303.0,12.0 303.6,13.7 304.1,15.1 305.1,15.8 304.1,16.5 303.6,17.9 303.0,19.6" fill="#3c3c3c"/><polygon points="305.5,15.8 305.9,14.6 306.9,15.8 305.9,17.0" fill="#3c3c3c"/><polygon points="308.5,15.8 309.0,12.6 309.6,14.0 310.1,15.2 311.1,15.8 310.1,16.4 309.6,17.6 309.0,19.0" fill="#3c3c3c"/><polygon points="311.6,15.8 312.0,14.6 313.0,15.8 312.0,17.0" fill="#3c3c3c"/><polygon points="314.6,15.8 315.1,12.0 315.7,13.7 316.2,15.1 317.2,15.8 316.2,16.5 315.7,17.9 315.1,19.6" fill="#3c3c3c"/><polygon points="320.6,15.8 321.1,12.6 321.8,14.0 322.2,15.2 323.2,15.8 322.2,16.4 321.8,17.6 321.1,19.0" fill="#3c3c3c"/><polygon points="326.7,15.8 327.2,12.0 327.8,13.7 328.3,15.1 329.3,15.8 328.3,16.5 327.8,17.9 327.2,19.6" fill="#3c3c3c"/><polygon points="329.7,15.8 330.1,14.6 331.1,15.8 330.1,17.0" fill="#3c3c3c"/><polygon points="332.8,15.8 333.2,12.6 333.9,14.0 334.4,15.2 335.4,15.8 334.4,16.4 333.9,17.6 333.2,19.0" fill="#3c3c3c"/><polygon points="335.8,15.8 336.2,14.6 337.2,15.8 336.2,17.0" fill="#3c3c3c"/><polygon points="338.8,15.8 339.3,12.0 339.9,13.7 340.4,15.1 341.4,15.8 340.4,16.5 339.9,17.9 339.3,19.6" fill="#3c3c3c"/><polygon points="341.8,15.8 342.2,14.6 343.2,15.8 342.2,17.0" fill="#3c3c3c"/><polygon points="344.8,15.8 345.3,12.6 345.9,14.0 346.4,15.2 347.4,15.8 346.4,16.4 345.9,17.6 345.3,19.0" fill="#3c3c3c"/><polygon points="347.9,15.8 348.3,14.6 349.3,15.8 348.3,17.0" fill="#3c3c3c"/><polygon points="350.9,15.8 351.4,12.0 352.0,13.7 352.5,15.1 353.5,15.8 352.5,16.5 352.0,17.9 351.4,19.6" fill="#3c3c3c"/><polygon points="353.9,15.8 354.3,14.6 355.3,15.8 354.3,17.0" fill="#3c3c3c"/><polygon points="357.0,15.8 357.5,12.6 358.1,14.0 358.6,15.2 359.6,15.8 358.6,16.4 358.1,17.6 357.5,19.0" fill="#3c3c3c"/><polygon points="360.0,15.8 360.5,13.2 361.1,14.4 361.3,15.3 362.1,15.8 361.3,16.3 361.1,17.2 360.5,18.4" fill="#3c3c3c"/><polygon points="363.0,15.8 363.5,12.0 364.1,13.7 364.6,15.1 365.6,15.8 364.6,16.5 364.1,17.9 363.5,19.6" fill="#3c3c3c"/><polygon points="369.0,15.8 369.5,12.6 370.1,14.0 370.6,15.2 371.6,15.8 370.6,16.4 370.1,17.6 369.5,19.0" fill="#3c3c3c"/><polygon points="372.1,15.8 372.5,14.6 373.5,15.8 372.5,17.0" fill="#3c3c3c"/><polygon points="375.1,15.8 375.6,12.0 376.2,13.7 376.7,15.1 377.7,15.8 376.7,16.5 376.2,17.9 375.6,19.6" fill="#3c3c3c"/><polygon points="381.1,15.8 381.6,12.6 382.2,14.0 382.8,15.2 383.8,15.8 382.8,16.4 382.2,17.6 381.6,19.0" fill="#3c3c3c"/><polygon points="384.2,15.8 384.6,14.6 385.6,15.8 384.6,17.0" fill="#3c3c3c"/><rect x="0" y="43.9" width="388" height="0.8" fill="#a8a8a8"/><polygon points="0.0,44.3 0.5,40.5 1.1,42.2 1.6,43.6 2.6,44.3 1.6,45.0 1.1,46.4 0.5,48.1" fill="#3c3c3c"/><polygon points="3.0,44.3 3.5,41.7 4.1,42.9 4.3,43.8 5.1,44.3 4.3,44.8 4.1,45.7 3.5,46.9" fill="#3c3c3c"/><polygon points="6.0,44.3 6.5,41.1 7.1,42.5 7.6,43.7 8.6,44.3 7.6,44.9 7.1,46.1 6.5,47.5" fill="#3c3c3c"/><polygon points="9.1,44.3 9.5,43.1 10.5,44.3 9.5,45.5" fill="#3c3c3c"/><polygon points="12.1,44.3 12.6,40.5 13.2,42.2 13.7,43.6 14.7,44.3 13.7,45.0 13.2,46.4 12.6,48.1" fill="#3c3c3c"/><polygon points="15.1,44.3 15.6,41.7 16.2,42.9 16.4,43.8 17.2,44.3 16.4,44.8 16.2,45.7 15.6,46.9" fill="#3c3c3c"/><polygon points="18.1,44.3 18.6,41.1 19.2,42.5 19.7,43.7 20.7,44.3 19.7,44.9 19.2,46.1 18.6,47.5" fill="#3c3c3c"/><polygon points="21.2,44.3 21.6,43.1 22.6,44.3 21.6,45.5" fill="#3c3c3c"/><polygon points="24.2,44.3 24.7,40.5 25.3,42.2 25.8,43.6 26.8,44.3 25.8,45.0 25.3,46.4 24.7,48.1" fill="#3c3c3c"/><polygon points="30.2,44.3 30.8,41.1 31.4,42.5 31.9,43.7 32.9,44.3 31.9,44.9 31.4,46.1 30.8,47.5" fill="#3c3c3c"/><polygon points="33.3,44.3 33.7,43.1 34.7,44.3 33.7,45.5" fill="#3c3c3c"/><polygon points="36.3,44.3 36.8,40.5 37.4,42.2 37.9,43.6 38.9,44.3 37.9,45.0 37.4,46.4 36.8,48.1" fill="#3c3c3c"/><polygon points="42.4,44.3 42.9,41.1 43.5,42.5 44.0,43.7 45.0,44.3 44.0,44.9 43.5,46.1 42.9,47.5" fill="#3c3c3c"/><polygon points="45.4,44.3 45.8,43.1 46.8,44.3 45.8,45.5" fill="#3c3c3c"/><polygon points="48.4,44.3 48.9,40.5 49.5,42.2 50.0,43.6 51.0,44.3 50.0,45.0 49.5,46.4 48.9,48.1" fill="#3c3c3c"/><polygon points="51.4,44.3 51.8,43.1 52.8,44.3 51.8,45.5" fill="#3c3c3c"/><polygon points="54.5,44.3 55.0,41.1 55.6,42.5 56.1,43.7 57.1,44.3 56.1,44.9 55.6,46.1 55.0,47.5" fill="#3c3c3c"/><polygon points="60.5,44.3 61.0,40.5 61.6,42.2 62.1,43.6 63.1,44.3 62.1,45.0 61.6,46.4 61.0,48.1" fill="#3c3c3c"/><polygon points="63.5,44.3 63.9,43.1 64.9,44.3 63.9,45.5" fill="#3c3c3c"/><polygon points="66.5,44.3 67.0,41.1 67.6,42.5 68.1,43.7 69.1,44.3 68.1,44.9 67.6,46.1 67.0,47.5" fill="#3c3c3c"/><polygon points="69.6,44.3 70.0,43.1 71.0,44.3 70.0,45.5" fill="#3c3c3c"/><polygon points="72.6,44.3 73.1,40.5 73.7,42.2 74.2,43.6 75.2,44.3 74.2,45.0 73.7,46.4 73.1,48.1" fill="#3c3c3c"/><polygon points="78.6,44.3 79.1,41.1 79.7,42.5 80.2,43.7 81.2,44.3 80.2,44.9 79.7,46.1 79.1,47.5" fill="#3c3c3c"/><polygon points="84.7,44.3 85.2,40.5 85.8,42.2 86.3,43.6 87.3,44.3 86.3,45.0 85.8,46.4 85.2,48.1" fill="#3c3c3c"/><polygon points="87.7,44.3 88.1,43.1 89.1,44.3 88.1,45.5" fill="#3c3c3c"/><polygon points="90.8,44.3 91.2,41.1 91.8,42.5 92.3,43.7 93.3,44.3 92.3,44.9 91.8,46.1 91.2,47.5" fill="#3c3c3c"/><polygon points="93.8,44.3 94.2,43.1 95.2,44.3 94.2,45.5" fill="#3c3c3c"/><polygon points="96.8,44.3 97.3,40.5 97.9,42.2 98.4,43.6 99.4,44.3 98.4,45.0 97.9,46.4 97.3,48.1" fill="#3c3c3c"/><polygon points="99.8,44.3 100.3,41.7 100.9,42.9 101.1,43.8 101.9,44.3 101.1,44.8 100.9,45.7 100.3,46.9" fill="#3c3c3c"/><polygon points="102.9,44.3 103.4,41.1 104.0,42.5 104.5,43.7 105.5,44.3 104.5,44.9 104.0,46.1 103.4,47.5" fill="#3c3c3c"/><polygon points="105.9,44.3 106.3,43.1 107.3,44.3 106.3,45.5" fill="#3c3c3c"/><polygon points="108.9,44.3 109.4,40.5 110.0,42.2 110.5,43.6 111.5,44.3 110.5,45.0 110.0,46.4 109.4,48.1" fill="#3c3c3c"/><polygon points="115.0,44.3 115.5,41.1 116.1,42.5 116.6,43.7 117.6,44.3 116.6,44.9 116.1,46.1 115.5,47.5" fill="#3c3c3c"/><polygon points="118.0,44.3 118.4,43.1 119.4,44.3 118.4,45.5" fill="#3c3c3c"/><polygon points="121.0,44.3 121.5,40.5 122.1,42.2 122.6,43.6 123.6,44.3 122.6,45.0 122.1,46.4 121.5,48.1" fill="#3c3c3c"/><polygon points="124.0,44.3 124.4,43.1 125.4,44.3 124.4,45.5" fill="#3c3c3c"/><polygon points="127.0,44.3 127.5,41.1 128.1,42.5 128.6,43.7 129.6,44.3 128.6,44.9 128.1,46.1 127.5,47.5" fill="#3c3c3c"/><polygon points="130.1,44.3 130.5,43.1 131.5,44.3 130.5,45.5" fill="#3c3c3c"/><polygon points="133.1,44.3 133.6,40.5 134.2,42.2 134.7,43.6 135.7,44.3 134.7,45.0 134.2,46.4 133.6,48.1" fill="#3c3c3c"/><polygon points="139.1,44.3 139.6,41.1 140.2,42.5 140.7,43.7 141.7,44.3 140.7,44.9 140.2,46.1 139.6,47.5" fill="#3c3c3c"/><polygon points="142.2,44.3 142.6,43.1 143.6,44.3 142.6,45.5" fill="#3c3c3c"/><polygon points="145.2,44.3 145.7,40.5 146.3,42.2 146.8,43.6 147.8,44.3 146.8,45.0 146.3,46.4 145.7,48.1" fill="#3c3c3c"/><polygon points="148.2,44.3 148.6,43.1 149.6,44.3 148.6,45.5" fill="#3c3c3c"/><polygon points="151.2,44.3 151.8,41.1 152.3,42.5 152.8,43.7 153.8,44.3 152.8,44.9 152.3,46.1 151.8,47.5" fill="#3c3c3c"/><polygon points="154.3,44.3 154.7,43.1 155.7,44.3 154.7,45.5" fill="#3c3c3c"/><polygon points="157.3,44.3 157.8,40.5 158.4,42.2 158.9,43.6 159.9,44.3 158.9,45.0 158.4,46.4 157.8,48.1" fill="#3c3c3c"/><polygon points="160.3,44.3 160.7,43.1 161.7,44.3 160.7,45.5" fill="#3c3c3c"/><polygon points="163.4,44.3 163.9,41.1 164.5,42.5 165.0,43.7 166.0,44.3 165.0,44.9 164.5,46.1 163.9,47.5" fill="#3c3c3c"/><polygon points="166.4,44.3 166.8,43.1 167.8,44.3 166.8,45.5" fill="#3c3c3c"/><polygon points="169.4,44.3 169.9,40.5 170.5,42.2 171.0,43.6 172.0,44.3 171.0,45.0 170.5,46.4 169.9,48.1" fill="#3c3c3c"/><polygon points="175.5,44.3 176.0,41.1 176.6,42.5 177.1,43.7 178.1,44.3 177.1,44.9 176.6,46.1 176.0,47.5" fill="#3c3c3c"/><polygon points="178.5,44.3 178.9,43.1 179.9,44.3 178.9,45.5" fill="#3c3c3c"/><polygon points="181.5,44.3 182.0,40.5 182.6,42.2 183.1,43.6 184.1,44.3 183.1,45.0 182.6,46.4 182.0,48.1" fill="#3c3c3c"/><polygon points="184.5,44.3 184.9,43.1 185.9,44.3 184.9,45.5" fill="#3c3c3c"/><polygon points="187.5,44.3 188.0,41.1 188.6,42.5 189.1,43.7 190.1,44.3 189.1,44.9 188.6,46.1 188.0,47.5" fill="#3c3c3c"/><polygon points="190.6,44.3 191.0,43.1 192.0,44.3 191.0,45.5" fill="#3c3c3c"/><polygon points="193.6,44.3 194.1,40.5 194.7,42.2 195.2,43.6 196.2,44.3 195.2,45.0 194.7,46.4 194.1,48.1" fill="#3c3c3c"/><polygon points="199.6,44.3 200.1,41.1 200.7,42.5 201.2,43.7 202.2,44.3 201.2,44.9 200.7,46.1 200.1,47.5" fill="#3c3c3c"/><polygon points="202.7,44.3 203.1,43.1 204.1,44.3 203.1,45.5" fill="#3c3c3c"/><polygon points="205.7,44.3 206.2,40.5 206.8,42.2 207.3,43.6 208.3,44.3 207.3,45.0 206.8,46.4 206.2,48.1" fill="#3c3c3c"/><polygon points="211.8,44.3 212.2,41.1 212.8,42.5 213.3,43.7 214.3,44.3 213.3,44.9 212.8,46.1 212.2,47.5" fill="#3c3c3c"/><polygon points="214.8,44.3 215.2,43.1 216.2,44.3 215.2,45.5" fill="#3c3c3c"/><polygon points="217.8,44.3 218.3,40.5 218.9,42.2 219.4,43.6 220.4,44.3 219.4,45.0 218.9,46.4 218.3,48.1" fill="#3c3c3c"/><polygon points="220.8,44.3 221.2,43.1 222.2,44.3 221.2,45.5" fill="#3c3c3c"/><polygon points="223.9,44.3 224.4,41.1 225.0,42.5 225.5,43.7 226.5,44.3 225.5,44.9 225.0,46.1 224.4,47.5" fill="#3c3c3c"/><polygon points="226.9,44.3 227.3,43.1 228.3,44.3 227.3,45.5" fill="#3c3c3c"/><polygon points="229.9,44.3 230.4,40.5 231.0,42.2 231.5,43.6 232.5,44.3 231.5,45.0 231.0,46.4 230.4,48.1" fill="#3c3c3c"/><polygon points="232.9,44.3 233.3,43.1 234.3,44.3 233.3,45.5" fill="#3c3c3c"/><polygon points="236.0,44.3 236.5,41.1 237.1,42.5 237.6,43.7 238.6,44.3 237.6,44.9 237.1,46.1 236.5,47.5" fill="#3c3c3c"/><polygon points="242.0,44.3 242.5,40.5 243.1,42.2 243.6,43.6 244.6,44.3 243.6,45.0 243.1,46.4 242.5,48.1" fill="#3c3c3c"/><polygon points="245.0,44.3 245.4,43.1 246.4,44.3 245.4,45.5" fill="#3c3c3c"/><polygon points="248.0,44.3 248.5,41.1 249.1,42.5 249.6,43.7 250.6,44.3 249.6,44.9 249.1,46.1 248.5,47.5" fill="#3c3c3c"/><polygon points="251.1,44.3 251.5,43.1 252.5,44.3 251.5,45.5" fill="#3c3c3c"/><polygon points="254.1,44.3 254.6,40.5 255.2,42.2 255.7,43.6 256.7,44.3 255.7,45.0 255.2,46.4 254.6,48.1" fill="#3c3c3c"/><polygon points="257.1,44.3 257.5,43.1 258.5,44.3 257.5,45.5" fill="#3c3c3c"/><polygon points="260.1,44.3 260.6,41.1 261.2,42.5 261.8,43.7 262.8,44.3 261.8,44.9 261.2,46.1 260.6,47.5" fill="#3c3c3c"/><polygon points="263.2,44.3 263.7,41.7 264.3,42.9 264.5,43.8 265.3,44.3 264.5,44.8 264.3,45.7 263.7,46.9" fill="#3c3c3c"/><polygon points="266.2,44.3 266.7,40.5 267.3,42.2 267.8,43.6 268.8,44.3 267.8,45.0 267.3,46.4 266.7,48.1" fill="#3c3c3c"/><polygon points="272.2,44.3 272.8,41.1 273.4,42.5 273.9,43.7 274.9,44.3 273.9,44.9 273.4,46.1 272.8,47.5" fill="#3c3c3c"/><polygon points="278.3,44.3 278.8,40.5 279.4,42.2 279.9,43.6 280.9,44.3 279.9,45.0 279.4,46.4 278.8,48.1" fill="#3c3c3c"/><polygon points="281.3,44.3 281.8,41.7 282.4,42.9 282.6,43.8 283.4,44.3 282.6,44.8 282.4,45.7 281.8,46.9" fill="#3c3c3c"/><polygon points="284.3,44.3 284.8,41.1 285.4,42.5 285.9,43.7 286.9,44.3 285.9,44.9 285.4,46.1 284.8,47.5" fill="#3c3c3c"/><polygon points="287.4,44.3 287.8,43.1 288.8,44.3 287.8,45.5" fill="#3c3c3c"/><polygon points="290.4,44.3 290.9,40.5 291.5,42.2 292.0,43.6 293.0,44.3 292.0,45.0 291.5,46.4 290.9,48.1" fill="#3c3c3c"/><polygon points="293.4,44.3 293.8,43.1 294.8,44.3 293.8,45.5" fill="#3c3c3c"/><polygon points="296.5,44.3 297.0,41.1 297.6,42.5 298.1,43.7 299.1,44.3 298.1,44.9 297.6,46.1 297.0,47.5" fill="#3c3c3c"/><polygon points="299.5,44.3 299.9,43.1 300.9,44.3 299.9,45.5" fill="#3c3c3c"/><polygon points="302.5,44.3 303.0,40.5 303.6,42.2 304.1,43.6 305.1,44.3 304.1,45.0 303.6,46.4 303.0,48.1" fill="#3c3c3c"/><polygon points="305.5,44.3 305.9,43.1 306.9,44.3 305.9,45.5" fill="#3c3c3c"/><polygon points="308.5,44.3 309.0,41.1 309.6,42.5 310.1,43.7 311.1,44.3 310.1,44.9 309.6,46.1 309.0,47.5" fill="#3c3c3c"/><polygon points="311.6,44.3 312.0,43.1 313.0,44.3 312.0,45.5" fill="#3c3c3c"/><polygon points="314.6,44.3 315.1,40.5 315.7,42.2 316.2,43.6 317.2,44.3 316.2,45.0 315.7,46.4 315.1,48.1" fill="#3c3c3c"/><polygon points="320.6,44.3 321.1,41.1 321.8,42.5 322.2,43.7 323.2,44.3 322.2,44.9 321.8,46.1 321.1,47.5" fill="#3c3c3c"/><polygon points="326.7,44.3 327.2,40.5 327.8,42.2 328.3,43.6 329.3,44.3 328.3,45.0 327.8,46.4 327.2,48.1" fill="#3c3c3c"/><polygon points="329.7,44.3 330.1,43.1 331.1,44.3 330.1,45.5" fill="#3c3c3c"/><polygon points="332.8,44.3 333.2,41.1 333.9,42.5 334.4,43.7 335.4,44.3 334.4,44.9 333.9,46.1 333.2,47.5" fill="#3c3c3c"/><polygon points="335.8,44.3 336.2,43.1 337.2,44.3 336.2,45.5" fill="#3c3c3c"/><polygon points="338.8,44.3 339.3,40.5 339.9,42.2 340.4,43.6 341.4,44.3 340.4,45.0 339.9,46.4 339.3,48.1" fill="#3c3c3c"/><polygon points="341.8,44.3 342.2,43.1 343.2,44.3 342.2,45.5" fill="#3c3c3c"/><polygon points="344.8,44.3 345.3,41.1 345.9,42.5 346.4,43.7 347.4,44.3 346.4,44.9 345.9,46.1 345.3,47.5" fill="#3c3c3c"/><polygon points="347.9,44.3 348.3,43.1 349.3,44.3 348.3,45.5" fill="#3c3c3c"/><polygon points="350.9,44.3 351.4,40.5 352.0,42.2 352.5,43.6 353.5,44.3 352.5,45.0 352.0,46.4 351.4,48.1" fill="#3c3c3c"/><polygon points="353.9,44.3 354.3,43.1 355.3,44.3 354.3,45.5" fill="#3c3c3c"/><polygon points="357.0,44.3 357.5,41.1 358.1,42.5 358.6,43.7 359.6,44.3 358.6,44.9 358.1,46.1 357.5,47.5" fill="#3c3c3c"/><polygon points="360.0,44.3 360.5,41.7 361.1,42.9 361.3,43.8 362.1,44.3 361.3,44.8 361.1,45.7 360.5,46.9" fill="#3c3c3c"/><polygon points="363.0,44.3 363.5,40.5 364.1,42.2 364.6,43.6 365.6,44.3 364.6,45.0 364.1,46.4 363.5,48.1" fill="#3c3c3c"/><polygon points="369.0,44.3 369.5,41.1 370.1,42.5 370.6,43.7 371.6,44.3 370.6,44.9 370.1,46.1 369.5,47.5" fill="#3c3c3c"/><polygon points="372.1,44.3 372.5,43.1 373.5,44.3 372.5,45.5" fill="#3c3c3c"/><polygon points="375.1,44.3 375.6,40.5 376.2,42.2 376.7,43.6 377.7,44.3 376.7,45.0 376.2,46.4 375.6,48.1" fill="#3c3c3c"/><polygon points="381.1,44.3 381.6,41.1 382.2,42.5 382.8,43.7 383.8,44.3 382.8,44.9 382.2,46.1 381.6,47.5" fill="#3c3c3c"/><polygon points="384.2,44.3 384.6,43.1 385.6,44.3 384.6,45.5" fill="#3c3c3c"/></svg>
<svg style="position:absolute;left:593px;top:288px" width="59" height="9" viewBox="0 0 59 9"><polygon points="0,0 59,0 52,8.5 0,8.5" fill="#4a4a4a"/></svg>
<div style="left:594.5px;top:285.8px;height:14px;line-height:14px;font-size:7px;color:#e2e2e2;font-weight:normal;white-space:nowrap;">07 Mels Hat 02</div>
<svg style="position:absolute;left:593px;top:340px" width="22" height="8" viewBox="0 0 22 8"><polygon points="0,0 13,0 19,7.5 0,7.5" fill="#4a4a4a"/><circle cx="6.5" cy="4" r="1.7" fill="none" stroke="#ccc" stroke-width="0.8"/></svg>
<svg style="position:absolute;left:593px;top:289px" width="5" height="5" viewBox="0 0 5 5"><polygon points="0,0 4.5,0 0,4.5" fill="#eee"/></svg>
<div style="left:207px;top:348px;width:386px;height:59px;background:#1f8e76;"></div>
<svg style="position:absolute;left:207px;top:348px" width="386" height="59" viewBox="0 0 386 59"><rect x="0" y="15.4" width="386" height="0.8" fill="#1a7a64"/><polygon points="0.0,15.8 0.5,11.3 1.1,13.3 1.8,15.0 2.9,15.8 1.8,16.6 1.1,18.3 0.5,20.3" fill="#15443a"/><polygon points="21.2,15.8 21.7,11.3 22.3,13.3 22.9,15.0 24.0,15.8 22.9,16.6 22.3,18.3 21.7,20.3" fill="#15443a"/><polygon points="30.2,15.8 30.8,11.3 31.4,13.3 32.0,15.0 33.1,15.8 32.0,16.6 31.4,18.3 30.8,20.3" fill="#15443a"/><polygon points="39.3,15.8 39.8,11.8 40.4,13.6 40.9,15.1 41.9,15.8 40.9,16.5 40.4,18.0 39.8,19.8" fill="#15443a"/><polygon points="48.4,15.8 48.9,11.3 49.5,13.3 50.2,15.0 51.3,15.8 50.2,16.6 49.5,18.3 48.9,20.3" fill="#15443a"/><polygon points="69.6,15.8 70.1,11.3 70.7,13.3 71.3,15.0 72.4,15.8 71.3,16.6 70.7,18.3 70.1,20.3" fill="#15443a"/><polygon points="78.6,15.8 79.1,11.3 79.7,13.3 80.4,15.0 81.5,15.8 80.4,16.6 79.7,18.3 79.1,20.3" fill="#15443a"/><polygon points="96.8,15.8 97.3,11.3 97.9,13.3 98.6,15.0 99.7,15.8 98.6,16.6 97.9,18.3 97.3,20.3" fill="#15443a"/><polygon points="118.0,15.8 118.5,11.3 119.1,13.3 119.7,15.0 120.8,15.8 119.7,16.6 119.1,18.3 118.5,20.3" fill="#15443a"/><polygon points="127.1,15.8 127.6,11.3 128.2,13.3 128.8,15.0 129.9,15.8 128.8,16.6 128.2,18.3 127.6,20.3" fill="#15443a"/><polygon points="145.2,15.8 145.7,11.3 146.3,13.3 147.0,15.0 148.1,15.8 147.0,16.6 146.3,18.3 145.7,20.3" fill="#15443a"/><polygon points="166.4,15.8 166.9,11.3 167.5,13.3 168.1,15.0 169.2,15.8 168.1,16.6 167.5,18.3 166.9,20.3" fill="#15443a"/><polygon points="175.4,15.8 175.9,11.3 176.5,13.3 177.2,15.0 178.3,15.8 177.2,16.6 176.5,18.3 175.9,20.3" fill="#15443a"/><polygon points="193.6,15.8 194.1,11.3 194.7,13.3 195.4,15.0 196.5,15.8 195.4,16.6 194.7,18.3 194.1,20.3" fill="#15443a"/><polygon points="214.8,15.8 215.3,11.3 215.9,13.3 216.5,15.0 217.6,15.8 216.5,16.6 215.9,18.3 215.3,20.3" fill="#15443a"/><polygon points="223.9,15.8 224.4,11.3 225.0,13.3 225.6,15.0 226.7,15.8 225.6,16.6 225.0,18.3 224.4,20.3" fill="#15443a"/><polygon points="232.9,15.8 233.4,11.8 234.0,13.6 234.5,15.1 235.5,15.8 234.5,16.5 234.0,18.0 233.4,19.8" fill="#15443a"/><polygon points="242.0,15.8 242.5,11.3 243.1,13.3 243.8,15.0 244.9,15.8 243.8,16.6 243.1,18.3 242.5,20.3" fill="#15443a"/><polygon points="263.2,15.8 263.7,11.3 264.3,13.3 264.9,15.0 266.0,15.8 264.9,16.6 264.3,18.3 263.7,20.3" fill="#15443a"/><polygon points="272.2,15.8 272.8,11.3 273.4,13.3 274.0,15.0 275.1,15.8 274.0,16.6 273.4,18.3 272.8,20.3" fill="#15443a"/><polygon points="281.3,15.8 281.8,11.8 282.4,13.6 282.9,15.1 283.9,15.8 282.9,16.5 282.4,18.0 281.8,19.8" fill="#15443a"/><polygon points="290.4,15.8 290.9,11.3 291.5,13.3 292.2,15.0 293.3,15.8 292.2,16.6 291.5,18.3 290.9,20.3" fill="#15443a"/><polygon points="311.6,15.8 312.1,11.3 312.7,13.3 313.3,15.0 314.4,15.8 313.3,16.6 312.7,18.3 312.1,20.3" fill="#15443a"/><polygon points="320.6,15.8 321.1,11.3 321.8,13.3 322.4,15.0 323.5,15.8 322.4,16.6 321.8,18.3 321.1,20.3" fill="#15443a"/><polygon points="338.8,15.8 339.3,11.3 339.9,13.3 340.6,15.0 341.7,15.8 340.6,16.6 339.9,18.3 339.3,20.3" fill="#15443a"/><polygon points="360.0,15.8 360.5,11.3 361.1,13.3 361.7,15.0 362.8,15.8 361.7,16.6 361.1,18.3 360.5,20.3" fill="#15443a"/><polygon points="369.0,15.8 369.5,11.3 370.1,13.3 370.8,15.0 371.9,15.8 370.8,16.6 370.1,18.3 369.5,20.3" fill="#15443a"/><polygon points="378.1,15.8 378.6,11.8 379.2,13.6 379.7,15.1 380.7,15.8 379.7,16.5 379.2,18.0 378.6,19.8" fill="#15443a"/><rect x="0" y="43.9" width="386" height="0.8" fill="#1a7a64"/><polygon points="0.0,44.3 0.5,39.8 1.1,41.8 1.8,43.5 2.9,44.3 1.8,45.1 1.1,46.8 0.5,48.8" fill="#15443a"/><polygon points="21.2,44.3 21.7,39.8 22.3,41.8 22.9,43.5 24.0,44.3 22.9,45.1 22.3,46.8 21.7,48.8" fill="#15443a"/><polygon points="30.2,44.3 30.8,39.8 31.4,41.8 32.0,43.5 33.1,44.3 32.0,45.1 31.4,46.8 30.8,48.8" fill="#15443a"/><polygon points="39.3,44.3 39.8,40.3 40.4,42.1 40.9,43.6 41.9,44.3 40.9,45.0 40.4,46.5 39.8,48.3" fill="#15443a"/><polygon points="48.4,44.3 48.9,39.8 49.5,41.8 50.2,43.5 51.3,44.3 50.2,45.1 49.5,46.8 48.9,48.8" fill="#15443a"/><polygon points="69.6,44.3 70.1,39.8 70.7,41.8 71.3,43.5 72.4,44.3 71.3,45.1 70.7,46.8 70.1,48.8" fill="#15443a"/><polygon points="78.6,44.3 79.1,39.8 79.7,41.8 80.4,43.5 81.5,44.3 80.4,45.1 79.7,46.8 79.1,48.8" fill="#15443a"/><polygon points="96.8,44.3 97.3,39.8 97.9,41.8 98.6,43.5 99.7,44.3 98.6,45.1 97.9,46.8 97.3,48.8" fill="#15443a"/><polygon points="118.0,44.3 118.5,39.8 119.1,41.8 119.7,43.5 120.8,44.3 119.7,45.1 119.1,46.8 118.5,48.8" fill="#15443a"/><polygon points="127.1,44.3 127.6,39.8 128.2,41.8 128.8,43.5 129.9,44.3 128.8,45.1 128.2,46.8 127.6,48.8" fill="#15443a"/><polygon points="145.2,44.3 145.7,39.8 146.3,41.8 147.0,43.5 148.1,44.3 147.0,45.1 146.3,46.8 145.7,48.8" fill="#15443a"/><polygon points="166.4,44.3 166.9,39.8 167.5,41.8 168.1,43.5 169.2,44.3 168.1,45.1 167.5,46.8 166.9,48.8" fill="#15443a"/><polygon points="175.4,44.3 175.9,39.8 176.5,41.8 177.2,43.5 178.3,44.3 177.2,45.1 176.5,46.8 175.9,48.8" fill="#15443a"/><polygon points="193.6,44.3 194.1,39.8 194.7,41.8 195.4,43.5 196.5,44.3 195.4,45.1 194.7,46.8 194.1,48.8" fill="#15443a"/><polygon points="214.8,44.3 215.3,39.8 215.9,41.8 216.5,43.5 217.6,44.3 216.5,45.1 215.9,46.8 215.3,48.8" fill="#15443a"/><polygon points="223.9,44.3 224.4,39.8 225.0,41.8 225.6,43.5 226.7,44.3 225.6,45.1 225.0,46.8 224.4,48.8" fill="#15443a"/><polygon points="232.9,44.3 233.4,40.3 234.0,42.1 234.5,43.6 235.5,44.3 234.5,45.0 234.0,46.5 233.4,48.3" fill="#15443a"/><polygon points="242.0,44.3 242.5,39.8 243.1,41.8 243.8,43.5 244.9,44.3 243.8,45.1 243.1,46.8 242.5,48.8" fill="#15443a"/><polygon points="263.2,44.3 263.7,39.8 264.3,41.8 264.9,43.5 266.0,44.3 264.9,45.1 264.3,46.8 263.7,48.8" fill="#15443a"/><polygon points="272.2,44.3 272.8,39.8 273.4,41.8 274.0,43.5 275.1,44.3 274.0,45.1 273.4,46.8 272.8,48.8" fill="#15443a"/><polygon points="281.3,44.3 281.8,40.3 282.4,42.1 282.9,43.6 283.9,44.3 282.9,45.0 282.4,46.5 281.8,48.3" fill="#15443a"/><polygon points="290.4,44.3 290.9,39.8 291.5,41.8 292.2,43.5 293.3,44.3 292.2,45.1 291.5,46.8 290.9,48.8" fill="#15443a"/><polygon points="311.6,44.3 312.1,39.8 312.7,41.8 313.3,43.5 314.4,44.3 313.3,45.1 312.7,46.8 312.1,48.8" fill="#15443a"/><polygon points="320.6,44.3 321.1,39.8 321.8,41.8 322.4,43.5 323.5,44.3 322.4,45.1 321.8,46.8 321.1,48.8" fill="#15443a"/><polygon points="338.8,44.3 339.3,39.8 339.9,41.8 340.6,43.5 341.7,44.3 340.6,45.1 339.9,46.8 339.3,48.8" fill="#15443a"/><polygon points="360.0,44.3 360.5,39.8 361.1,41.8 361.7,43.5 362.8,44.3 361.7,45.1 361.1,46.8 360.5,48.8" fill="#15443a"/><polygon points="369.0,44.3 369.5,39.8 370.1,41.8 370.8,43.5 371.9,44.3 370.8,45.1 370.1,46.8 369.5,48.8" fill="#15443a"/><polygon points="378.1,44.3 378.6,40.3 379.2,42.1 379.7,43.6 380.7,44.3 379.7,45.0 379.2,46.5 378.6,48.3" fill="#15443a"/></svg>
<svg style="position:absolute;left:207px;top:348px" width="81" height="9" viewBox="0 0 81 9"><polygon points="0,0 81,0 74,8.5 0,8.5" fill="#17604f"/></svg>
<div style="left:208.5px;top:345.8px;height:14px;line-height:14px;font-size:7px;color:#e2e2e2;font-weight:normal;white-space:nowrap;">07 Elektric Spark 01</div>
<svg style="position:absolute;left:207px;top:400px" width="22" height="8" viewBox="0 0 22 8"><polygon points="0,0 13,0 19,7.5 0,7.5" fill="#17604f"/><circle cx="6.5" cy="4" r="1.7" fill="none" stroke="#ccc" stroke-width="0.8"/></svg>
<svg style="position:absolute;left:207px;top:349px" width="5" height="5" viewBox="0 0 5 5"><polygon points="0,0 4.5,0 0,4.5" fill="#eee"/></svg>
<div style="left:593px;top:348px;width:388px;height:59px;background:#1f8e76;"></div>
<svg style="position:absolute;left:593px;top:348px" width="388" height="59" viewBox="0 0 388 59"><rect x="0" y="15.4" width="388" height="0.8" fill="#1a7a64"/><polygon points="0.0,15.8 0.5,11.3 1.1,13.3 1.8,15.0 2.9,15.8 1.8,16.6 1.1,18.3 0.5,20.3" fill="#15443a"/><polygon points="18.1,15.8 18.6,11.3 19.2,13.3 19.9,15.0 21.0,15.8 19.9,16.6 19.2,18.3 18.6,20.3" fill="#15443a"/><polygon points="21.2,15.8 21.7,11.3 22.3,13.3 22.9,15.0 24.0,15.8 22.9,16.6 22.3,18.3 21.7,20.3" fill="#15443a"/><polygon points="27.2,15.8 27.6,14.8 28.7,15.8 27.6,16.8" fill="#15443a"/><polygon points="30.2,15.8 30.8,11.8 31.4,13.6 31.9,15.1 32.9,15.8 31.9,16.5 31.4,18.0 30.8,19.8" fill="#15443a"/><polygon points="36.3,15.8 36.8,11.3 37.4,13.3 38.1,15.0 39.2,15.8 38.1,16.6 37.4,18.3 36.8,20.3" fill="#15443a"/><polygon points="42.4,15.8 42.8,14.8 43.9,15.8 42.8,16.8" fill="#15443a"/><polygon points="48.4,15.8 48.9,11.3 49.5,13.3 50.2,15.0 51.3,15.8 50.2,16.6 49.5,18.3 48.9,20.3" fill="#15443a"/><polygon points="54.5,15.8 54.9,14.8 56.0,15.8 54.9,16.8" fill="#15443a"/><polygon points="66.5,15.8 67.0,11.3 67.6,13.3 68.3,15.0 69.4,15.8 68.3,16.6 67.6,18.3 67.0,20.3" fill="#15443a"/><polygon points="69.6,15.8 70.1,11.3 70.7,13.3 71.3,15.0 72.4,15.8 71.3,16.6 70.7,18.3 70.1,20.3" fill="#15443a"/><polygon points="78.6,15.8 79.1,11.8 79.7,13.6 80.2,15.1 81.2,15.8 80.2,16.5 79.7,18.0 79.1,19.8" fill="#15443a"/><polygon points="84.7,15.8 85.2,11.3 85.8,13.3 86.5,15.0 87.6,15.8 86.5,16.6 85.8,18.3 85.2,20.3" fill="#15443a"/><polygon points="90.8,15.8 91.2,14.8 92.2,15.8 91.2,16.8" fill="#15443a"/><polygon points="96.8,15.8 97.3,11.3 97.9,13.3 98.6,15.0 99.7,15.8 98.6,16.6 97.9,18.3 97.3,20.3" fill="#15443a"/><polygon points="102.9,15.8 103.3,14.8 104.4,15.8 103.3,16.8" fill="#15443a"/><polygon points="105.9,15.8 106.3,14.8 107.4,15.8 106.3,16.8" fill="#15443a"/><polygon points="115.0,15.8 115.5,11.3 116.1,13.3 116.7,15.0 117.8,15.8 116.7,16.6 116.1,18.3 115.5,20.3" fill="#15443a"/><polygon points="118.0,15.8 118.5,11.3 119.1,13.3 119.7,15.0 120.8,15.8 119.7,16.6 119.1,18.3 118.5,20.3" fill="#15443a"/><polygon points="133.1,15.8 133.6,11.3 134.2,13.3 134.9,15.0 136.0,15.8 134.9,16.6 134.2,18.3 133.6,20.3" fill="#15443a"/><polygon points="145.2,15.8 145.7,11.3 146.3,13.3 147.0,15.0 148.1,15.8 147.0,16.6 146.3,18.3 145.7,20.3" fill="#15443a"/><polygon points="154.3,15.8 154.7,14.8 155.8,15.8 154.7,16.8" fill="#15443a"/><polygon points="163.4,15.8 163.9,11.3 164.5,13.3 165.1,15.0 166.2,15.8 165.1,16.6 164.5,18.3 163.9,20.3" fill="#15443a"/><polygon points="166.4,15.8 166.9,11.3 167.5,13.3 168.1,15.0 169.2,15.8 168.1,16.6 167.5,18.3 166.9,20.3" fill="#15443a"/><polygon points="172.4,15.8 172.8,14.8 173.9,15.8 172.8,16.8" fill="#15443a"/><polygon points="181.5,15.8 182.0,11.3 182.6,13.3 183.3,15.0 184.4,15.8 183.3,16.6 182.6,18.3 182.0,20.3" fill="#15443a"/><polygon points="184.5,15.8 185.0,11.8 185.6,13.6 186.1,15.1 187.1,15.8 186.1,16.5 185.6,18.0 185.0,19.8" fill="#15443a"/><polygon points="187.5,15.8 187.9,14.8 189.0,15.8 187.9,16.8" fill="#15443a"/><polygon points="193.6,15.8 194.1,11.3 194.7,13.3 195.4,15.0 196.5,15.8 195.4,16.6 194.7,18.3 194.1,20.3" fill="#15443a"/><polygon points="211.8,15.8 212.2,11.3 212.8,13.3 213.5,15.0 214.6,15.8 213.5,16.6 212.8,18.3 212.2,20.3" fill="#15443a"/><polygon points="214.8,15.8 215.3,11.3 215.9,13.3 216.5,15.0 217.6,15.8 216.5,16.6 215.9,18.3 215.3,20.3" fill="#15443a"/><polygon points="220.8,15.8 221.2,14.8 222.3,15.8 221.2,16.8" fill="#15443a"/><polygon points="223.9,15.8 224.4,11.8 225.0,13.6 225.5,15.1 226.5,15.8 225.5,16.5 225.0,18.0 224.4,19.8" fill="#15443a"/><polygon points="229.9,15.8 230.4,11.3 231.0,13.3 231.7,15.0 232.8,15.8 231.7,16.6 231.0,18.3 230.4,20.3" fill="#15443a"/><polygon points="236.0,15.8 236.4,14.8 237.5,15.8 236.4,16.8" fill="#15443a"/><polygon points="242.0,15.8 242.5,11.3 243.1,13.3 243.8,15.0 244.9,15.8 243.8,16.6 243.1,18.3 242.5,20.3" fill="#15443a"/><polygon points="251.1,15.8 251.5,14.8 252.6,15.8 251.5,16.8" fill="#15443a"/><polygon points="260.1,15.8 260.6,11.3 261.2,13.3 261.9,15.0 263.0,15.8 261.9,16.6 261.2,18.3 260.6,20.3" fill="#15443a"/><polygon points="263.2,15.8 263.7,11.3 264.3,13.3 264.9,15.0 266.0,15.8 264.9,16.6 264.3,18.3 263.7,20.3" fill="#15443a"/><polygon points="269.2,15.8 269.6,14.8 270.7,15.8 269.6,16.8" fill="#15443a"/><polygon points="272.2,15.8 272.8,11.8 273.4,13.6 273.9,15.1 274.9,15.8 273.9,16.5 273.4,18.0 272.8,19.8" fill="#15443a"/><polygon points="278.3,15.8 278.8,11.3 279.4,13.3 280.1,15.0 281.2,15.8 280.1,16.6 279.4,18.3 278.8,20.3" fill="#15443a"/><polygon points="281.3,15.8 281.8,11.8 282.4,13.6 282.9,15.1 283.9,15.8 282.9,16.5 282.4,18.0 281.8,19.8" fill="#15443a"/><polygon points="290.4,15.8 290.9,11.3 291.5,13.3 292.2,15.0 293.3,15.8 292.2,16.6 291.5,18.3 290.9,20.3" fill="#15443a"/><polygon points="308.5,15.8 309.0,11.3 309.6,13.3 310.3,15.0 311.4,15.8 310.3,16.6 309.6,18.3 309.0,20.3" fill="#15443a"/><polygon points="311.6,15.8 312.1,11.3 312.7,13.3 313.3,15.0 314.4,15.8 313.3,16.6 312.7,18.3 312.1,20.3" fill="#15443a"/><polygon points="317.6,15.8 318.0,14.8 319.1,15.8 318.0,16.8" fill="#15443a"/><polygon points="320.6,15.8 321.1,11.8 321.8,13.6 322.2,15.1 323.2,15.8 322.2,16.5 321.8,18.0 321.1,19.8" fill="#15443a"/><polygon points="326.7,15.8 327.2,11.3 327.8,13.3 328.5,15.0 329.6,15.8 328.5,16.6 327.8,18.3 327.2,20.3" fill="#15443a"/><polygon points="332.8,15.8 333.1,14.8 334.2,15.8 333.1,16.8" fill="#15443a"/><polygon points="338.8,15.8 339.3,11.3 339.9,13.3 340.6,15.0 341.7,15.8 340.6,16.6 339.9,18.3 339.3,20.3" fill="#15443a"/><polygon points="347.9,15.8 348.3,14.8 349.4,15.8 348.3,16.8" fill="#15443a"/><polygon points="357.0,15.8 357.5,11.3 358.1,13.3 358.7,15.0 359.8,15.8 358.7,16.6 358.1,18.3 357.5,20.3" fill="#15443a"/><polygon points="360.0,15.8 360.5,11.3 361.1,13.3 361.7,15.0 362.8,15.8 361.7,16.6 361.1,18.3 360.5,20.3" fill="#15443a"/><polygon points="366.0,15.8 366.4,14.8 367.5,15.8 366.4,16.8" fill="#15443a"/><polygon points="375.1,15.8 375.6,11.3 376.2,13.3 376.9,15.0 378.0,15.8 376.9,16.6 376.2,18.3 375.6,20.3" fill="#15443a"/><rect x="0" y="43.9" width="388" height="0.8" fill="#1a7a64"/><polygon points="0.0,44.3 0.5,39.8 1.1,41.8 1.8,43.5 2.9,44.3 1.8,45.1 1.1,46.8 0.5,48.8" fill="#15443a"/><polygon points="18.1,44.3 18.6,39.8 19.2,41.8 19.9,43.5 21.0,44.3 19.9,45.1 19.2,46.8 18.6,48.8" fill="#15443a"/><polygon points="21.2,44.3 21.7,39.8 22.3,41.8 22.9,43.5 24.0,44.3 22.9,45.1 22.3,46.8 21.7,48.8" fill="#15443a"/><polygon points="27.2,44.3 27.6,43.3 28.7,44.3 27.6,45.3" fill="#15443a"/><polygon points="30.2,44.3 30.8,40.3 31.4,42.1 31.9,43.6 32.9,44.3 31.9,45.0 31.4,46.5 30.8,48.3" fill="#15443a"/><polygon points="36.3,44.3 36.8,39.8 37.4,41.8 38.1,43.5 39.2,44.3 38.1,45.1 37.4,46.8 36.8,48.8" fill="#15443a"/><polygon points="42.4,44.3 42.8,43.3 43.9,44.3 42.8,45.3" fill="#15443a"/><polygon points="48.4,44.3 48.9,39.8 49.5,41.8 50.2,43.5 51.3,44.3 50.2,45.1 49.5,46.8 48.9,48.8" fill="#15443a"/><polygon points="54.5,44.3 54.9,43.3 56.0,44.3 54.9,45.3" fill="#15443a"/><polygon points="66.5,44.3 67.0,39.8 67.6,41.8 68.3,43.5 69.4,44.3 68.3,45.1 67.6,46.8 67.0,48.8" fill="#15443a"/><polygon points="69.6,44.3 70.1,39.8 70.7,41.8 71.3,43.5 72.4,44.3 71.3,45.1 70.7,46.8 70.1,48.8" fill="#15443a"/><polygon points="78.6,44.3 79.1,40.3 79.7,42.1 80.2,43.6 81.2,44.3 80.2,45.0 79.7,46.5 79.1,48.3" fill="#15443a"/><polygon points="84.7,44.3 85.2,39.8 85.8,41.8 86.5,43.5 87.6,44.3 86.5,45.1 85.8,46.8 85.2,48.8" fill="#15443a"/><polygon points="90.8,44.3 91.2,43.3 92.2,44.3 91.2,45.3" fill="#15443a"/><polygon points="96.8,44.3 97.3,39.8 97.9,41.8 98.6,43.5 99.7,44.3 98.6,45.1 97.9,46.8 97.3,48.8" fill="#15443a"/><polygon points="102.9,44.3 103.3,43.3 104.4,44.3 103.3,45.3" fill="#15443a"/><polygon points="105.9,44.3 106.3,43.3 107.4,44.3 106.3,45.3" fill="#15443a"/><polygon points="115.0,44.3 115.5,39.8 116.1,41.8 116.7,43.5 117.8,44.3 116.7,45.1 116.1,46.8 115.5,48.8" fill="#15443a"/><polygon points="118.0,44.3 118.5,39.8 119.1,41.8 119.7,43.5 120.8,44.3 119.7,45.1 119.1,46.8 118.5,48.8" fill="#15443a"/><polygon points="133.1,44.3 133.6,39.8 134.2,41.8 134.9,43.5 136.0,44.3 134.9,45.1 134.2,46.8 133.6,48.8" fill="#15443a"/><polygon points="145.2,44.3 145.7,39.8 146.3,41.8 147.0,43.5 148.1,44.3 147.0,45.1 146.3,46.8 145.7,48.8" fill="#15443a"/><polygon points="154.3,44.3 154.7,43.3 155.8,44.3 154.7,45.3" fill="#15443a"/><polygon points="163.4,44.3 163.9,39.8 164.5,41.8 165.1,43.5 166.2,44.3 165.1,45.1 164.5,46.8 163.9,48.8" fill="#15443a"/><polygon points="166.4,44.3 166.9,39.8 167.5,41.8 168.1,43.5 169.2,44.3 168.1,45.1 167.5,46.8 166.9,48.8" fill="#15443a"/><polygon points="172.4,44.3 172.8,43.3 173.9,44.3 172.8,45.3" fill="#15443a"/><polygon points="181.5,44.3 182.0,39.8 182.6,41.8 183.3,43.5 184.4,44.3 183.3,45.1 182.6,46.8 182.0,48.8" fill="#15443a"/><polygon points="184.5,44.3 185.0,40.3 185.6,42.1 186.1,43.6 187.1,44.3 186.1,45.0 185.6,46.5 185.0,48.3" fill="#15443a"/><polygon points="187.5,44.3 187.9,43.3 189.0,44.3 187.9,45.3" fill="#15443a"/><polygon points="193.6,44.3 194.1,39.8 194.7,41.8 195.4,43.5 196.5,44.3 195.4,45.1 194.7,46.8 194.1,48.8" fill="#15443a"/><polygon points="211.8,44.3 212.2,39.8 212.8,41.8 213.5,43.5 214.6,44.3 213.5,45.1 212.8,46.8 212.2,48.8" fill="#15443a"/><polygon points="214.8,44.3 215.3,39.8 215.9,41.8 216.5,43.5 217.6,44.3 216.5,45.1 215.9,46.8 215.3,48.8" fill="#15443a"/><polygon points="220.8,44.3 221.2,43.3 222.3,44.3 221.2,45.3" fill="#15443a"/><polygon points="223.9,44.3 224.4,40.3 225.0,42.1 225.5,43.6 226.5,44.3 225.5,45.0 225.0,46.5 224.4,48.3" fill="#15443a"/><polygon points="229.9,44.3 230.4,39.8 231.0,41.8 231.7,43.5 232.8,44.3 231.7,45.1 231.0,46.8 230.4,48.8" fill="#15443a"/><polygon points="236.0,44.3 236.4,43.3 237.5,44.3 236.4,45.3" fill="#15443a"/><polygon points="242.0,44.3 242.5,39.8 243.1,41.8 243.8,43.5 244.9,44.3 243.8,45.1 243.1,46.8 242.5,48.8" fill="#15443a"/><polygon points="251.1,44.3 251.5,43.3 252.6,44.3 251.5,45.3" fill="#15443a"/><polygon points="260.1,44.3 260.6,39.8 261.2,41.8 261.9,43.5 263.0,44.3 261.9,45.1 261.2,46.8 260.6,48.8" fill="#15443a"/><polygon points="263.2,44.3 263.7,39.8 264.3,41.8 264.9,43.5 266.0,44.3 264.9,45.1 264.3,46.8 263.7,48.8" fill="#15443a"/><polygon points="269.2,44.3 269.6,43.3 270.7,44.3 269.6,45.3" fill="#15443a"/><polygon points="272.2,44.3 272.8,40.3 273.4,42.1 273.9,43.6 274.9,44.3 273.9,45.0 273.4,46.5 272.8,48.3" fill="#15443a"/><polygon points="278.3,44.3 278.8,39.8 279.4,41.8 280.1,43.5 281.2,44.3 280.1,45.1 279.4,46.8 278.8,48.8" fill="#15443a"/><polygon points="281.3,44.3 281.8,40.3 282.4,42.1 282.9,43.6 283.9,44.3 282.9,45.0 282.4,46.5 281.8,48.3" fill="#15443a"/><polygon points="290.4,44.3 290.9,39.8 291.5,41.8 292.2,43.5 293.3,44.3 292.2,45.1 291.5,46.8 290.9,48.8" fill="#15443a"/><polygon points="308.5,44.3 309.0,39.8 309.6,41.8 310.3,43.5 311.4,44.3 310.3,45.1 309.6,46.8 309.0,48.8" fill="#15443a"/><polygon points="311.6,44.3 312.1,39.8 312.7,41.8 313.3,43.5 314.4,44.3 313.3,45.1 312.7,46.8 312.1,48.8" fill="#15443a"/><polygon points="317.6,44.3 318.0,43.3 319.1,44.3 318.0,45.3" fill="#15443a"/><polygon points="320.6,44.3 321.1,40.3 321.8,42.1 322.2,43.6 323.2,44.3 322.2,45.0 321.8,46.5 321.1,48.3" fill="#15443a"/><polygon points="326.7,44.3 327.2,39.8 327.8,41.8 328.5,43.5 329.6,44.3 328.5,45.1 327.8,46.8 327.2,48.8" fill="#15443a"/><polygon points="332.8,44.3 333.1,43.3 334.2,44.3 333.1,45.3" fill="#15443a"/><polygon points="338.8,44.3 339.3,39.8 339.9,41.8 340.6,43.5 341.7,44.3 340.6,45.1 339.9,46.8 339.3,48.8" fill="#15443a"/><polygon points="347.9,44.3 348.3,43.3 349.4,44.3 348.3,45.3" fill="#15443a"/><polygon points="357.0,44.3 357.5,39.8 358.1,41.8 358.7,43.5 359.8,44.3 358.7,45.1 358.1,46.8 357.5,48.8" fill="#15443a"/><polygon points="360.0,44.3 360.5,39.8 361.1,41.8 361.7,43.5 362.8,44.3 361.7,45.1 361.1,46.8 360.5,48.8" fill="#15443a"/><polygon points="366.0,44.3 366.4,43.3 367.5,44.3 366.4,45.3" fill="#15443a"/><polygon points="375.1,44.3 375.6,39.8 376.2,41.8 376.9,43.5 378.0,44.3 376.9,45.1 376.2,46.8 375.6,48.8" fill="#15443a"/></svg>
<svg style="position:absolute;left:593px;top:348px" width="81" height="9" viewBox="0 0 81 9"><polygon points="0,0 81,0 74,8.5 0,8.5" fill="#17604f"/></svg>
<div style="left:594.5px;top:345.8px;height:14px;line-height:14px;font-size:7px;color:#e2e2e2;font-weight:normal;white-space:nowrap;">07 Elektric Spark 02</div>
<svg style="position:absolute;left:593px;top:400px" width="22" height="8" viewBox="0 0 22 8"><polygon points="0,0 13,0 19,7.5 0,7.5" fill="#17604f"/><circle cx="6.5" cy="4" r="1.7" fill="none" stroke="#ccc" stroke-width="0.8"/></svg>
<svg style="position:absolute;left:593px;top:349px" width="5" height="5" viewBox="0 0 5 5"><polygon points="0,0 4.5,0 0,4.5" fill="#eee"/></svg>
<div style="left:587px;top:48px;width:1px;height:367px;background:rgba(220,220,235,0.45);"></div>
<div style="left:1px;top:408px;width:181px;height:8px;background:#303133;"></div>
<div style="left:1px;top:416px;width:1197px;height:12px;background:#2a2b2d;"></div>
<div style="left:2px;top:417px;width:30px;height:10px;background:#b8292d;"></div>
<div style="left:7.0px;width:20px;text-align:center;top:415.0px;height:15.0px;line-height:15.0px;font-size:7.5px;color:#f0f0f0;font-weight:normal;white-space:nowrap;">M</div>
<div style="left:37.0px;width:20px;text-align:center;top:415.0px;height:15.0px;line-height:15.0px;font-size:7.5px;color:#cfcfcf;font-weight:normal;white-space:nowrap;">S</div>
<svg style="position:absolute;left:72px;top:416px" width="12" height="12" viewBox="0 0 12 12"><path d="M4.3,4.3 A3,3 0 1 0 7.7,4.3" stroke="#4a9fe0" stroke-width="1.2" fill="none"/><path d="M6,3 L6,6.5" stroke="#4a9fe0" stroke-width="1.2"/></svg>
<div style="left:94px;top:417px;width:80px;height:10px;background:#2f3032;"></div>
<div style="left:106.0px;width:40px;text-align:center;top:415.0px;height:15.0px;line-height:15.0px;font-size:7.5px;color:#cfcfcf;font-weight:normal;white-space:nowrap;">Normal</div>
<svg style="position:absolute;left:159px;top:420px" width="7" height="5" viewBox="0 0 7 5"><polygon points="0.5,0.5 6,0.5 3.25,4" fill="#8a8b8d"/></svg>
<svg style="position:absolute;left:171px;top:418px" width="9" height="9" viewBox="0 0 9 9"><path d="M1,2 L8,2 M1,4.5 L8,4.5 M1,7 L8,7" stroke="#6a6b6d" stroke-width="1"/></svg>
<svg style="position:absolute;left:184px;top:418px" width="9" height="9" viewBox="0 0 9 9"><polygon points="7,1 7,8 2,4.5" fill="#6a6b6d"/></svg>
<div style="left:220px;top:420.5px;width:135px;height:3.5px;background:#6e6f71;"></div>
<svg style="position:absolute;left:1105px;top:416px" width="90" height="12" viewBox="0 0 90 12"><polygon points="5,2 9,6 5,10" fill="#6a6b6d"/><polygon points="20,3 24,9 16,9" fill="#77787a"/><rect x="28" y="5.5" width="38" height="1" fill="#77787a"/><rect x="27" y="3" width="2" height="7" fill="#8a8b8d"/><polygon points="73,2 79,9 67,9" fill="#77787a"/><path d="M84,9 L88,9 M86,5 L88,5" stroke="#555" stroke-width="1"/></svg>
<div style="left:1187px;top:48px;width:11px;height:368px;background:#2c2d2f;"></div>
<svg style="position:absolute;left:1189px;top:49px" width="9" height="8" viewBox="0 0 9 8"><polygon points="4,1 8,6 0,6" fill="#77787a"/></svg>
<div style="left:1191.5px;top:60px;width:3.5px;height:331px;background:#606165;"></div>
<svg style="position:absolute;left:1189px;top:407px" width="9" height="8" viewBox="0 0 9 8"><polygon points="0,1 8,1 4,6" fill="#77787a"/></svg>
<div style="left:0px;top:429px;width:1200px;height:215px;background:#2e2f31;"></div>
<div style="left:0px;top:429px;width:1200px;height:2px;background:#232427;"></div>
<div style="left:2px;top:431px;width:35px;height:205px;background:#3a3b3e;"></div>
<div style="left:2px;top:431px;width:35px;height:14px;background:#45464a;"></div>
<div style="left:2px;top:445px;width:35px;height:13px;background:#3f4043;"></div>
<div style="left:2px;top:458px;width:35px;height:17px;background:#3c3d40;"></div>
<div style="left:2px;top:475px;width:35px;height:30px;background:#2e2f31;"></div>
<div style="left:2px;top:505px;width:35px;height:20px;background:#3c3d40;"></div>
<div style="left:2px;top:525px;width:35px;height:16px;background:#393a3d;"></div>
<div style="left:2px;top:541px;width:35px;height:15px;background:#393a3d;"></div>
<div style="left:2px;top:541px;width:35px;height:1px;background:#333437;"></div>
<div style="left:2px;top:556px;width:35px;height:15px;background:#393a3d;"></div>
<div style="left:2px;top:556px;width:35px;height:1px;background:#333437;"></div>
<div style="left:2px;top:571px;width:35px;height:15px;background:#393a3d;"></div>
<div style="left:2px;top:571px;width:35px;height:1px;background:#333437;"></div>
<div style="left:2px;top:586px;width:35px;height:15px;background:#393a3d;"></div>
<div style="left:2px;top:586px;width:35px;height:1px;background:#333437;"></div>
<div style="left:2px;top:601px;width:35px;height:15px;background:#393a3d;"></div>
<div style="left:2px;top:601px;width:35px;height:1px;background:#333437;"></div>
<div style="left:2px;top:616px;width:35px;height:15px;background:#393a3d;"></div>
<div style="left:2px;top:616px;width:35px;height:1px;background:#333437;"></div>
<svg style="position:absolute;left:2px;top:431px" width="35" height="14" viewBox="0 0 35 14"><path d="M5,3 L12,10 M12,3 L5,10" stroke="#d4d4d4" stroke-width="1.6"/><path d="M24,10 L31,3 M27,3 L31,3 L31,7" stroke="#d4d4d4" stroke-width="1.8" fill="none"/></svg>
<div style="left:5.0px;width:20px;text-align:center;top:443.5px;height:16px;line-height:16px;font-size:8px;color:#d4d4d4;font-weight:normal;white-space:nowrap;">I/O</div>
<svg style="position:absolute;left:27px;top:449px" width="8" height="6" viewBox="0 0 8 6"><polygon points="0.5,0.5 7,0.5 3.75,5" fill="#d4d4d4"/></svg>
<svg style="position:absolute;left:12px;top:460px" width="14" height="14" viewBox="0 0 14 14"><circle cx="5" cy="5" r="3" fill="#d4d4d4"/><circle cx="3.6" cy="3.6" r="1.3" fill="#3c3d40"/><path d="M5.5,5.5 L11,11" stroke="#d4d4d4" stroke-width="2"/></svg>
<svg style="position:absolute;left:2px;top:505px" width="35" height="20" viewBox="0 0 35 20"><polygon points="17.5,4 21,8 14,8" fill="#d4d4d4"/><polygon points="17.5,16 21,12 14,12" fill="#d4d4d4"/></svg>
<svg style="position:absolute;left:2px;top:525px" width="35" height="16" viewBox="0 0 35 16"><polygon points="12,4 17,8 12,12" fill="#d4d4d4"/><polygon points="24,4 19,8 24,12" fill="#d4d4d4"/></svg>
<div style="left:2.0px;width:35px;text-align:center;top:542px;height:14px;line-height:14px;font-size:7px;color:#d4d4d4;font-weight:normal;white-space:nowrap;">Inputs</div>
<div style="left:2.0px;width:35px;text-align:center;top:557px;height:14px;line-height:14px;font-size:7px;color:#d4d4d4;font-weight:normal;white-space:nowrap;">Outputs</div>
<div style="left:2.0px;width:35px;text-align:center;top:572px;height:14px;line-height:14px;font-size:7px;color:#d4d4d4;font-weight:normal;white-space:nowrap;">External</div>
<div style="left:2.0px;width:35px;text-align:center;top:587px;height:14px;line-height:14px;font-size:7px;color:#d4d4d4;font-weight:normal;white-space:nowrap;">Instr.</div>
<svg style="position:absolute;left:2px;top:601px" width="35" height="15" viewBox="0 0 35 15"><g fill="#d4d4d4"><rect x="13" y="7" width="2" height="6"/><rect x="16" y="4" width="2" height="9"/><rect x="19" y="5" width="2" height="8"/><rect x="22" y="7" width="2" height="6"/></g></svg>
<svg style="position:absolute;left:2px;top:616px" width="35" height="15" viewBox="0 0 35 15"><rect x="11" y="4" width="13" height="8" fill="#9a9b9d"/><path d="M11,6.5 L24,6.5 M11,9 L24,9" stroke="#3a3b3e" stroke-width="0.7"/></svg>
<div style="left:38px;top:431px;width:51px;height:200px;background:#3d2b4d;"></div>
<div style="left:38px;top:431px;width:51px;height:2.5px;background:#6d22b5;"></div>
<div style="left:41px;top:437px;width:45px;height:21px;background:#4f3e69;"></div>
<div style="left:38.0px;width:51px;text-align:center;top:435.0px;height:15.0px;line-height:15.0px;font-size:7.5px;color:#dedede;font-weight:normal;white-space:nowrap;">Input L+R</div>
<div style="left:38.0px;width:51px;text-align:center;top:445.5px;height:15.0px;line-height:15.0px;font-size:7.5px;color:#dedede;font-weight:normal;white-space:nowrap;">Main</div>
<div style="left:41px;top:458px;width:45px;height:11px;background:#2c2535;"></div>
<div style="left:62.5px;top:459.5px;width:2px;height:8px;background:#4aa3e6;"></div>
<div style="left:40.0px;width:24px;text-align:center;top:467.5px;height:15.0px;line-height:15.0px;font-size:7.5px;color:#e4e4e4;font-weight:normal;white-space:nowrap;">0dB</div>
<div style="left:62.0px;width:24px;text-align:center;top:467.5px;height:15.0px;line-height:15.0px;font-size:7.5px;color:#e4e4e4;font-weight:normal;white-space:nowrap;">&lt;C&gt;</div>
<div style="left:41px;top:483.5px;width:45px;height:26px;background:#33253f;"></div>
<div style="left:41.5px;top:484px;width:44px;height:25px;background:#45354f;"></div>
<div style="left:42px;top:484.5px;width:21px;height:12px;background:#b8282c;"></div>
<div style="left:63px;top:484px;width:0.8px;height:25px;background:#2e2240;"></div>
<div style="left:42px;top:496.5px;width:43px;height:0.8px;background:#2e2240;"></div>
<div style="left:42.5px;width:20px;text-align:center;top:481.5px;height:18px;line-height:18px;font-size:9px;color:#e8e8e8;font-weight:normal;white-space:nowrap;">M</div>
<div style="left:64.0px;width:20px;text-align:center;top:481.5px;height:18px;line-height:18px;font-size:9px;color:#d0d0d0;font-weight:normal;white-space:nowrap;">S</div>
<svg style="position:absolute;left:38px;top:497px" width="51" height="12" viewBox="0 0 51 12"><circle cx="14.5" cy="6" r="2.8" fill="#dcdcdc"/><path d="M34,3 L36,3 L37.5,1.5 L37.5,10.5 L36,9 L34,9 Z" fill="#dcdcdc"/><path d="M39,3.5 Q40.5,6 39,8.5" stroke="#dcdcdc" fill="none" stroke-width="0.9"/></svg>
<div style="left:75px;top:515px;width:7px;height:6px;background:#5a4a6e;"></div>
<div style="left:48px;top:514.5px;width:8px;height:79px;background:#252628;"></div>
<div style="left:48px;top:514.5px;width:8px;height:8px;background:#2e2638;"></div>
<div style="left:34.5px;width:12px;text-align:right;top:519.2px;height:9.6px;line-height:9.6px;font-size:4.8px;color:#c4c4c4;font-weight:normal;white-space:nowrap;">12</div>
<div style="left:34.5px;width:12px;text-align:right;top:524.2px;height:9.6px;line-height:9.6px;font-size:4.8px;color:#c4c4c4;font-weight:normal;white-space:nowrap;">6</div>
<div style="left:34.5px;width:12px;text-align:right;top:535.2px;height:9.6px;line-height:9.6px;font-size:4.8px;color:#c4c4c4;font-weight:normal;white-space:nowrap;">0</div>
<div style="left:34.5px;width:12px;text-align:right;top:543.2px;height:9.6px;line-height:9.6px;font-size:4.8px;color:#c4c4c4;font-weight:normal;white-space:nowrap;">-6</div>
<div style="left:34.5px;width:12px;text-align:right;top:552.2px;height:9.6px;line-height:9.6px;font-size:4.8px;color:#c4c4c4;font-weight:normal;white-space:nowrap;">-12</div>
<div style="left:34.5px;width:12px;text-align:right;top:562.2px;height:9.6px;line-height:9.6px;font-size:4.8px;color:#c4c4c4;font-weight:normal;white-space:nowrap;">-24</div>
<div style="left:34.5px;width:12px;text-align:right;top:571.2px;height:9.6px;line-height:9.6px;font-size:4.8px;color:#c4c4c4;font-weight:normal;white-space:nowrap;">-36</div>
<div style="left:34.5px;width:12px;text-align:right;top:577.7px;height:9.6px;line-height:9.6px;font-size:4.8px;color:#c4c4c4;font-weight:normal;white-space:nowrap;">-48</div>
<div style="left:49px;top:540px;width:6px;height:0.8px;background:#9a9a9a;"></div>
<div style="left:58px;top:550px;width:10px;height:43px;background:#5a4a78;"></div>
<div style="left:62.5px;top:547px;width:1px;height:36px;background:#1a1a1a;"></div>
<svg style="position:absolute;left:57.5px;top:527px" width="11" height="24" viewBox="0 0 11 24"><rect x="0.5" y="0.5" width="10" height="23" rx="1" fill="#d8d8d8" stroke="#2a2a2a" stroke-width="1"/><rect x="1.5" y="1.5" width="8" height="3" fill="#9a9a9a"/><rect x="1.5" y="4.5" width="8" height="6.5" fill="#f2f2f2"/><rect x="1.5" y="11" width="8" height="1.2" fill="#777"/><rect x="1.5" y="12.2" width="8" height="7.5" fill="#f0f0f0"/><rect x="1.5" y="19.7" width="8" height="3" fill="#aaa"/></svg>
<svg style="position:absolute;left:74px;top:565px" width="9" height="9" viewBox="0 0 9 9"><rect x="0.5" y="1" width="3.5" height="7" fill="#c8c8c8"/><rect x="4.8" y="1" width="3.5" height="7" fill="#a8a8a8"/></svg>
<svg style="position:absolute;left:73px;top:580px" width="11" height="11" viewBox="0 0 11 11"><circle cx="5.5" cy="5.5" r="4.5" fill="#d8d8d8"/><path d="M5.5,5.5 L2.5,2.5" stroke="#333" stroke-width="1.3"/></svg>
<div style="left:41.0px;width:12px;text-align:center;top:593px;height:16px;line-height:16px;font-size:8px;color:#e8e8e8;font-weight:bold;white-space:nowrap;">1</div>
<svg style="position:absolute;left:75px;top:597px" width="10" height="8" viewBox="0 0 10 8"><path d="M0.5,7 L2,3 L3,6 L4.5,0.5 L6,6 L7,3 L8.5,7" fill="none" stroke="#e0e0e0" stroke-width="1.1"/></svg>
<div style="left:41px;top:608px;width:45px;height:10px;background:#2f2540;"></div>
<div style="left:38.0px;width:51px;text-align:center;top:606px;height:14px;line-height:14px;font-size:7px;color:#8a8a8a;font-weight:normal;white-space:nowrap;">Auto: Off</div>
<div style="left:90px;top:431px;width:65px;height:200px;background:#3d2b4d;"></div>
<div style="left:90px;top:431px;width:64px;height:2.2px;background:#6d22b5;"></div>
<div style="left:89px;top:431px;width:1px;height:200px;background:#2e2040;"></div>
<svg style="position:absolute;left:91px;top:435px" width="12" height="10" viewBox="0 0 12 10"><path d="M3,2.5 A3.5,3.5 0 1 0 7,2.5" stroke="#8a7aa8" stroke-width="1" fill="none"/><path d="M5,1 L5,5" stroke="#8a7aa8" stroke-width="1"/></svg>
<div style="left:101px;top:432.5px;height:15.0px;line-height:15.0px;font-size:7.5px;color:#b8aacb;font-weight:normal;white-space:nowrap;">Inserts</div>
<svg style="position:absolute;left:139px;top:438px" width="6" height="5" viewBox="0 0 6 5"><polygon points="0.5,0.5 5.5,0.5 3,4" fill="#8a7da5"/></svg>
<svg style="position:absolute;left:146px;top:436px" width="8" height="8" viewBox="0 0 8 8"><path d="M4,0.5 L4,7.5 M0.5,4 L7.5,4" stroke="#8a7da5" stroke-width="1.2"/></svg>
<div style="left:38px;top:622px;width:117px;height:9px;background:#7023b5;"></div>
<div style="left:36.0px;width:120px;text-align:center;top:619.0px;height:15.0px;line-height:15.0px;font-size:7.5px;color:#f4f4f4;font-weight:normal;white-space:nowrap;">Drums</div>
<div style="left:156px;top:431px;width:50px;height:200px;background:#4f4f4f;"></div>
<div style="left:156px;top:431px;width:50px;height:2.5px;background:#e6e6e6;"></div>
<div style="left:159px;top:437px;width:44px;height:21px;background:#5d5e60;"></div>
<div style="left:156.0px;width:50px;text-align:center;top:435.0px;height:15.0px;line-height:15.0px;font-size:7.5px;color:#dedede;font-weight:normal;white-space:nowrap;">Input L+R</div>
<div style="left:156.0px;width:50px;text-align:center;top:445.5px;height:15.0px;line-height:15.0px;font-size:7.5px;color:#dedede;font-weight:normal;white-space:nowrap;">Main</div>
<div style="left:159px;top:458px;width:44px;height:11px;background:#2f3032;"></div>
<div style="left:180.0px;top:459.5px;width:2px;height:8px;background:#4aa3e6;"></div>
<div style="left:158.0px;width:24px;text-align:center;top:467.5px;height:15.0px;line-height:15.0px;font-size:7.5px;color:#e4e4e4;font-weight:normal;white-space:nowrap;">0dB</div>
<div style="left:180.0px;width:24px;text-align:center;top:467.5px;height:15.0px;line-height:15.0px;font-size:7.5px;color:#e4e4e4;font-weight:normal;white-space:nowrap;">&lt;C&gt;</div>
<div style="left:159px;top:483.5px;width:44px;height:26px;background:#39393b;"></div>
<div style="left:159.5px;top:484px;width:43px;height:25px;background:#454648;"></div>
<div style="left:181px;top:484px;width:0.8px;height:25px;background:#353638;"></div>
<div style="left:160px;top:496.5px;width:42px;height:0.8px;background:#353638;"></div>
<div style="left:160.5px;width:20px;text-align:center;top:481.5px;height:18px;line-height:18px;font-size:9px;color:#d0d0d0;font-weight:normal;white-space:nowrap;">M</div>
<div style="left:182.0px;width:20px;text-align:center;top:481.5px;height:18px;line-height:18px;font-size:9px;color:#d0d0d0;font-weight:normal;white-space:nowrap;">S</div>
<svg style="position:absolute;left:156px;top:497px" width="50" height="12" viewBox="0 0 50 12"><circle cx="14.5" cy="6" r="2.8" fill="#dcdcdc"/><path d="M34,3 L36,3 L37.5,1.5 L37.5,10.5 L36,9 L34,9 Z" fill="#dcdcdc"/><path d="M39,3.5 Q40.5,6 39,8.5" stroke="#dcdcdc" fill="none" stroke-width="0.9"/></svg>
<svg style="position:absolute;left:192.5px;top:514.5px" width="8" height="7" viewBox="0 0 8 7"><rect x="0.5" y="0.5" width="7" height="6" fill="none" stroke="#5a5b5d" stroke-width="1"/><path d="M0.5,2.5 L7.5,2.5 M0.5,4.5 L7.5,4.5" stroke="#5a5b5d" stroke-width="0.8"/></svg>
<div style="left:166px;top:514.5px;width:8px;height:79px;background:#252628;"></div>
<div style="left:166px;top:514.5px;width:8px;height:8px;background:#353638;"></div>
<div style="left:152.5px;width:12px;text-align:right;top:519.2px;height:9.6px;line-height:9.6px;font-size:4.8px;color:#c4c4c4;font-weight:normal;white-space:nowrap;">12</div>
<div style="left:152.5px;width:12px;text-align:right;top:524.2px;height:9.6px;line-height:9.6px;font-size:4.8px;color:#c4c4c4;font-weight:normal;white-space:nowrap;">6</div>
<div style="left:152.5px;width:12px;text-align:right;top:535.2px;height:9.6px;line-height:9.6px;font-size:4.8px;color:#c4c4c4;font-weight:normal;white-space:nowrap;">0</div>
<div style="left:152.5px;width:12px;text-align:right;top:543.2px;height:9.6px;line-height:9.6px;font-size:4.8px;color:#c4c4c4;font-weight:normal;white-space:nowrap;">-6</div>
<div style="left:152.5px;width:12px;text-align:right;top:552.2px;height:9.6px;line-height:9.6px;font-size:4.8px;color:#c4c4c4;font-weight:normal;white-space:nowrap;">-12</div>
<div style="left:152.5px;width:12px;text-align:right;top:562.2px;height:9.6px;line-height:9.6px;font-size:4.8px;color:#c4c4c4;font-weight:normal;white-space:nowrap;">-24</div>
<div style="left:152.5px;width:12px;text-align:right;top:571.2px;height:9.6px;line-height:9.6px;font-size:4.8px;color:#c4c4c4;font-weight:normal;white-space:nowrap;">-36</div>
<div style="left:152.5px;width:12px;text-align:right;top:577.7px;height:9.6px;line-height:9.6px;font-size:4.8px;color:#c4c4c4;font-weight:normal;white-space:nowrap;">-48</div>
<div style="left:167px;top:540px;width:6px;height:0.8px;background:#9a9a9a;"></div>
<div style="left:166.8px;top:562px;width:2.8px;height:31px;background:#3a80b3;"></div>
<div style="left:170.6px;top:560px;width:2.8px;height:33px;background:#3a80b3;"></div>
<div style="left:167.4px;top:562px;width:1px;height:31px;background:#5599c8;"></div>
<div style="left:171.2px;top:560px;width:1px;height:33px;background:#5599c8;"></div>
<div style="left:176px;top:550px;width:10px;height:43px;background:#5e5f61;"></div>
<div style="left:180.5px;top:547px;width:1px;height:36px;background:#1a1a1a;"></div>
<svg style="position:absolute;left:175.5px;top:527px" width="11" height="24" viewBox="0 0 11 24"><rect x="0.5" y="0.5" width="10" height="23" rx="1" fill="#d8d8d8" stroke="#2a2a2a" stroke-width="1"/><rect x="1.5" y="1.5" width="8" height="3" fill="#9a9a9a"/><rect x="1.5" y="4.5" width="8" height="6.5" fill="#f2f2f2"/><rect x="1.5" y="11" width="8" height="1.2" fill="#777"/><rect x="1.5" y="12.2" width="8" height="7.5" fill="#f0f0f0"/><rect x="1.5" y="19.7" width="8" height="3" fill="#aaa"/></svg>
<svg style="position:absolute;left:192px;top:565px" width="9" height="9" viewBox="0 0 9 9"><rect x="0.5" y="1" width="3.5" height="7" fill="#c8c8c8"/><rect x="4.8" y="1" width="3.5" height="7" fill="#a8a8a8"/></svg>
<svg style="position:absolute;left:191px;top:580px" width="11" height="11" viewBox="0 0 11 11"><circle cx="5.5" cy="5.5" r="4.5" fill="#d8d8d8"/><path d="M5.5,5.5 L2.5,2.5" stroke="#333" stroke-width="1.3"/></svg>
<div style="left:159.0px;width:12px;text-align:center;top:593px;height:16px;line-height:16px;font-size:8px;color:#e8e8e8;font-weight:bold;white-space:nowrap;">2</div>
<svg style="position:absolute;left:193px;top:597px" width="10" height="8" viewBox="0 0 10 8"><path d="M0.5,7 L2,3 L3,6 L4.5,0.5 L6,6 L7,3 L8.5,7" fill="none" stroke="#e0e0e0" stroke-width="1.1"/></svg>
<div style="left:159px;top:608px;width:44px;height:10px;background:#3a3b3d;"></div>
<div style="left:156.0px;width:50px;text-align:center;top:606px;height:14px;line-height:14px;font-size:7px;color:#8a8a8a;font-weight:normal;white-space:nowrap;">Auto: Off</div>
<div style="left:156px;top:622px;width:50px;height:9px;background:#d9d9d9;"></div>
<div style="left:121.0px;width:120px;text-align:center;top:619.0px;height:15.0px;line-height:15.0px;font-size:7.5px;color:#1a1a1a;font-weight:normal;white-space:nowrap;">Bam Kick</div>
<div style="left:208px;top:431px;width:50px;height:200px;background:#4f4f4f;"></div>
<div style="left:208px;top:431px;width:50px;height:2.5px;background:#e6e6e6;"></div>
<div style="left:211px;top:437px;width:44px;height:21px;background:#5d5e60;"></div>
<div style="left:208.0px;width:50px;text-align:center;top:435.0px;height:15.0px;line-height:15.0px;font-size:7.5px;color:#dedede;font-weight:normal;white-space:nowrap;">Input L+R</div>
<div style="left:208.0px;width:50px;text-align:center;top:445.5px;height:15.0px;line-height:15.0px;font-size:7.5px;color:#dedede;font-weight:normal;white-space:nowrap;">Main</div>
<div style="left:211px;top:458px;width:44px;height:11px;background:#2f3032;"></div>
<div style="left:232.0px;top:459.5px;width:2px;height:8px;background:#4aa3e6;"></div>
<div style="left:210.0px;width:24px;text-align:center;top:467.5px;height:15.0px;line-height:15.0px;font-size:7.5px;color:#e4e4e4;font-weight:normal;white-space:nowrap;">+3.3</div>
<div style="left:232.0px;width:24px;text-align:center;top:467.5px;height:15.0px;line-height:15.0px;font-size:7.5px;color:#e4e4e4;font-weight:normal;white-space:nowrap;">&lt;C&gt;</div>
<div style="left:211px;top:483.5px;width:44px;height:26px;background:#39393b;"></div>
<div style="left:211.5px;top:484px;width:43px;height:25px;background:#454648;"></div>
<div style="left:233px;top:484px;width:0.8px;height:25px;background:#353638;"></div>
<div style="left:212px;top:496.5px;width:42px;height:0.8px;background:#353638;"></div>
<div style="left:212.5px;width:20px;text-align:center;top:481.5px;height:18px;line-height:18px;font-size:9px;color:#d0d0d0;font-weight:normal;white-space:nowrap;">M</div>
<div style="left:234.0px;width:20px;text-align:center;top:481.5px;height:18px;line-height:18px;font-size:9px;color:#d0d0d0;font-weight:normal;white-space:nowrap;">S</div>
<svg style="position:absolute;left:208px;top:497px" width="50" height="12" viewBox="0 0 50 12"><circle cx="14.5" cy="6" r="2.8" fill="#dcdcdc"/><path d="M34,3 L36,3 L37.5,1.5 L37.5,10.5 L36,9 L34,9 Z" fill="#dcdcdc"/><path d="M39,3.5 Q40.5,6 39,8.5" stroke="#dcdcdc" fill="none" stroke-width="0.9"/></svg>
<svg style="position:absolute;left:244.5px;top:514.5px" width="8" height="7" viewBox="0 0 8 7"><rect x="0.5" y="0.5" width="7" height="6" fill="none" stroke="#5a5b5d" stroke-width="1"/><path d="M0.5,2.5 L7.5,2.5 M0.5,4.5 L7.5,4.5" stroke="#5a5b5d" stroke-width="0.8"/></svg>
<div style="left:218px;top:514.5px;width:8px;height:79px;background:#252628;"></div>
<div style="left:218px;top:514.5px;width:8px;height:8px;background:#353638;"></div>
<div style="left:204.5px;width:12px;text-align:right;top:519.2px;height:9.6px;line-height:9.6px;font-size:4.8px;color:#c4c4c4;font-weight:normal;white-space:nowrap;">12</div>
<div style="left:204.5px;width:12px;text-align:right;top:524.2px;height:9.6px;line-height:9.6px;font-size:4.8px;color:#c4c4c4;font-weight:normal;white-space:nowrap;">6</div>
<div style="left:204.5px;width:12px;text-align:right;top:535.2px;height:9.6px;line-height:9.6px;font-size:4.8px;color:#c4c4c4;font-weight:normal;white-space:nowrap;">0</div>
<div style="left:204.5px;width:12px;text-align:right;top:543.2px;height:9.6px;line-height:9.6px;font-size:4.8px;color:#c4c4c4;font-weight:normal;white-space:nowrap;">-6</div>
<div style="left:204.5px;width:12px;text-align:right;top:552.2px;height:9.6px;line-height:9.6px;font-size:4.8px;color:#c4c4c4;font-weight:normal;white-space:nowrap;">-12</div>
<div style="left:204.5px;width:12px;text-align:right;top:562.2px;height:9.6px;line-height:9.6px;font-size:4.8px;color:#c4c4c4;font-weight:normal;white-space:nowrap;">-24</div>
<div style="left:204.5px;width:12px;text-align:right;top:571.2px;height:9.6px;line-height:9.6px;font-size:4.8px;color:#c4c4c4;font-weight:normal;white-space:nowrap;">-36</div>
<div style="left:204.5px;width:12px;text-align:right;top:577.7px;height:9.6px;line-height:9.6px;font-size:4.8px;color:#c4c4c4;font-weight:normal;white-space:nowrap;">-48</div>
<div style="left:219px;top:540px;width:6px;height:0.8px;background:#9a9a9a;"></div>
<div style="left:218.8px;top:557px;width:2.8px;height:36px;background:#3a80b3;"></div>
<div style="left:222.6px;top:555px;width:2.8px;height:38px;background:#3a80b3;"></div>
<div style="left:219.4px;top:557px;width:1px;height:36px;background:#5599c8;"></div>
<div style="left:223.2px;top:555px;width:1px;height:38px;background:#5599c8;"></div>
<div style="left:228px;top:546px;width:10px;height:47px;background:#5e5f61;"></div>
<div style="left:232.5px;top:543px;width:1px;height:40px;background:#1a1a1a;"></div>
<svg style="position:absolute;left:227.5px;top:523px" width="11" height="24" viewBox="0 0 11 24"><rect x="0.5" y="0.5" width="10" height="23" rx="1" fill="#d8d8d8" stroke="#2a2a2a" stroke-width="1"/><rect x="1.5" y="1.5" width="8" height="3" fill="#9a9a9a"/><rect x="1.5" y="4.5" width="8" height="6.5" fill="#f2f2f2"/><rect x="1.5" y="11" width="8" height="1.2" fill="#777"/><rect x="1.5" y="12.2" width="8" height="7.5" fill="#f0f0f0"/><rect x="1.5" y="19.7" width="8" height="3" fill="#aaa"/></svg>
<svg style="position:absolute;left:244px;top:565px" width="9" height="9" viewBox="0 0 9 9"><rect x="0.5" y="1" width="3.5" height="7" fill="#c8c8c8"/><rect x="4.8" y="1" width="3.5" height="7" fill="#a8a8a8"/></svg>
<svg style="position:absolute;left:243px;top:580px" width="11" height="11" viewBox="0 0 11 11"><circle cx="5.5" cy="5.5" r="4.5" fill="#d8d8d8"/><path d="M5.5,5.5 L2.5,2.5" stroke="#333" stroke-width="1.3"/></svg>
<div style="left:211.0px;width:12px;text-align:center;top:593px;height:16px;line-height:16px;font-size:8px;color:#e8e8e8;font-weight:bold;white-space:nowrap;">3</div>
<svg style="position:absolute;left:245px;top:597px" width="10" height="8" viewBox="0 0 10 8"><path d="M0.5,7 L2,3 L3,6 L4.5,0.5 L6,6 L7,3 L8.5,7" fill="none" stroke="#e0e0e0" stroke-width="1.1"/></svg>
<div style="left:211px;top:608px;width:44px;height:10px;background:#3a3b3d;"></div>
<div style="left:208.0px;width:50px;text-align:center;top:606px;height:14px;line-height:14px;font-size:7px;color:#8a8a8a;font-weight:normal;white-space:nowrap;">Auto: Off</div>
<div style="left:208px;top:622px;width:50px;height:9px;background:#d9d9d9;"></div>
<div style="left:173.0px;width:120px;text-align:center;top:619.0px;height:15.0px;line-height:15.0px;font-size:7.5px;color:#1a1a1a;font-weight:normal;white-space:nowrap;">Snow Snare</div>
<div style="left:260px;top:431px;width:50px;height:200px;background:#4f4f4f;"></div>
<div style="left:260px;top:431px;width:50px;height:2.5px;background:#e6e6e6;"></div>
<div style="left:263px;top:437px;width:44px;height:21px;background:#5d5e60;"></div>
<div style="left:260.0px;width:50px;text-align:center;top:435.0px;height:15.0px;line-height:15.0px;font-size:7.5px;color:#dedede;font-weight:normal;white-space:nowrap;">Input L+R</div>
<div style="left:260.0px;width:50px;text-align:center;top:445.5px;height:15.0px;line-height:15.0px;font-size:7.5px;color:#dedede;font-weight:normal;white-space:nowrap;">Main</div>
<div style="left:263px;top:458px;width:44px;height:11px;background:#2f3032;"></div>
<div style="left:276.5px;top:459.5px;width:8.5px;height:8px;background:#2f6d9c;"></div>
<div style="left:276.5px;top:459.5px;width:2px;height:8px;background:#5ab0ee;"></div>
<div style="left:262.0px;width:24px;text-align:center;top:467.5px;height:15.0px;line-height:15.0px;font-size:7.5px;color:#e4e4e4;font-weight:normal;white-space:nowrap;">0dB</div>
<div style="left:284.0px;width:24px;text-align:center;top:467.5px;height:15.0px;line-height:15.0px;font-size:7.5px;color:#e4e4e4;font-weight:normal;white-space:nowrap;">L37</div>
<div style="left:263px;top:483.5px;width:44px;height:26px;background:#39393b;"></div>
<div style="left:263.5px;top:484px;width:43px;height:25px;background:#454648;"></div>
<div style="left:285px;top:484px;width:0.8px;height:25px;background:#353638;"></div>
<div style="left:264px;top:496.5px;width:42px;height:0.8px;background:#353638;"></div>
<div style="left:264.5px;width:20px;text-align:center;top:481.5px;height:18px;line-height:18px;font-size:9px;color:#d0d0d0;font-weight:normal;white-space:nowrap;">M</div>
<div style="left:286.0px;width:20px;text-align:center;top:481.5px;height:18px;line-height:18px;font-size:9px;color:#d0d0d0;font-weight:normal;white-space:nowrap;">S</div>
<svg style="position:absolute;left:260px;top:497px" width="50" height="12" viewBox="0 0 50 12"><circle cx="14.5" cy="6" r="2.8" fill="#dcdcdc"/><path d="M34,3 L36,3 L37.5,1.5 L37.5,10.5 L36,9 L34,9 Z" fill="#dcdcdc"/><path d="M39,3.5 Q40.5,6 39,8.5" stroke="#dcdcdc" fill="none" stroke-width="0.9"/></svg>
<svg style="position:absolute;left:296.5px;top:514.5px" width="8" height="7" viewBox="0 0 8 7"><rect x="0.5" y="0.5" width="7" height="6" fill="none" stroke="#5a5b5d" stroke-width="1"/><path d="M0.5,2.5 L7.5,2.5 M0.5,4.5 L7.5,4.5" stroke="#5a5b5d" stroke-width="0.8"/></svg>
<div style="left:270px;top:514.5px;width:8px;height:79px;background:#252628;"></div>
<div style="left:270px;top:514.5px;width:8px;height:8px;background:#353638;"></div>
<div style="left:256.5px;width:12px;text-align:right;top:519.2px;height:9.6px;line-height:9.6px;font-size:4.8px;color:#c4c4c4;font-weight:normal;white-space:nowrap;">12</div>
<div style="left:256.5px;width:12px;text-align:right;top:524.2px;height:9.6px;line-height:9.6px;font-size:4.8px;color:#c4c4c4;font-weight:normal;white-space:nowrap;">6</div>
<div style="left:256.5px;width:12px;text-align:right;top:535.2px;height:9.6px;line-height:9.6px;font-size:4.8px;color:#c4c4c4;font-weight:normal;white-space:nowrap;">0</div>
<div style="left:256.5px;width:12px;text-align:right;top:543.2px;height:9.6px;line-height:9.6px;font-size:4.8px;color:#c4c4c4;font-weight:normal;white-space:nowrap;">-6</div>
<div style="left:256.5px;width:12px;text-align:right;top:552.2px;height:9.6px;line-height:9.6px;font-size:4.8px;color:#c4c4c4;font-weight:normal;white-space:nowrap;">-12</div>
<div style="left:256.5px;width:12px;text-align:right;top:562.2px;height:9.6px;line-height:9.6px;font-size:4.8px;color:#c4c4c4;font-weight:normal;white-space:nowrap;">-24</div>
<div style="left:256.5px;width:12px;text-align:right;top:571.2px;height:9.6px;line-height:9.6px;font-size:4.8px;color:#c4c4c4;font-weight:normal;white-space:nowrap;">-36</div>
<div style="left:256.5px;width:12px;text-align:right;top:577.7px;height:9.6px;line-height:9.6px;font-size:4.8px;color:#c4c4c4;font-weight:normal;white-space:nowrap;">-48</div>
<div style="left:271px;top:540px;width:6px;height:0.8px;background:#9a9a9a;"></div>
<div style="left:270.8px;top:561px;width:2.8px;height:32px;background:#3a80b3;"></div>
<div style="left:274.6px;top:558px;width:2.8px;height:35px;background:#3a80b3;"></div>
<div style="left:271.4px;top:561px;width:1px;height:32px;background:#5599c8;"></div>
<div style="left:275.2px;top:558px;width:1px;height:35px;background:#5599c8;"></div>
<div style="left:280px;top:550px;width:10px;height:43px;background:#5e5f61;"></div>
<div style="left:284.5px;top:547px;width:1px;height:36px;background:#1a1a1a;"></div>
<svg style="position:absolute;left:279.5px;top:527px" width="11" height="24" viewBox="0 0 11 24"><rect x="0.5" y="0.5" width="10" height="23" rx="1" fill="#d8d8d8" stroke="#2a2a2a" stroke-width="1"/><rect x="1.5" y="1.5" width="8" height="3" fill="#9a9a9a"/><rect x="1.5" y="4.5" width="8" height="6.5" fill="#f2f2f2"/><rect x="1.5" y="11" width="8" height="1.2" fill="#777"/><rect x="1.5" y="12.2" width="8" height="7.5" fill="#f0f0f0"/><rect x="1.5" y="19.7" width="8" height="3" fill="#aaa"/></svg>
<svg style="position:absolute;left:296px;top:565px" width="9" height="9" viewBox="0 0 9 9"><rect x="0.5" y="1" width="3.5" height="7" fill="#c8c8c8"/><rect x="4.8" y="1" width="3.5" height="7" fill="#a8a8a8"/></svg>
<svg style="position:absolute;left:295px;top:580px" width="11" height="11" viewBox="0 0 11 11"><circle cx="5.5" cy="5.5" r="4.5" fill="#d8d8d8"/><path d="M5.5,5.5 L2.5,2.5" stroke="#333" stroke-width="1.3"/></svg>
<div style="left:263.0px;width:12px;text-align:center;top:593px;height:16px;line-height:16px;font-size:8px;color:#e8e8e8;font-weight:bold;white-space:nowrap;">4</div>
<svg style="position:absolute;left:297px;top:597px" width="10" height="8" viewBox="0 0 10 8"><path d="M0.5,7 L2,3 L3,6 L4.5,0.5 L6,6 L7,3 L8.5,7" fill="none" stroke="#e0e0e0" stroke-width="1.1"/></svg>
<div style="left:263px;top:608px;width:44px;height:10px;background:#3a3b3d;"></div>
<div style="left:260.0px;width:50px;text-align:center;top:606px;height:14px;line-height:14px;font-size:7px;color:#8a8a8a;font-weight:normal;white-space:nowrap;">Auto: Off</div>
<div style="left:260px;top:622px;width:50px;height:9px;background:#d9d9d9;"></div>
<div style="left:225.0px;width:120px;text-align:center;top:619.0px;height:15.0px;line-height:15.0px;font-size:7.5px;color:#1a1a1a;font-weight:normal;white-space:nowrap;">Klapper Claps</div>
<div style="left:312px;top:431px;width:50px;height:200px;background:#4f4f4f;"></div>
<div style="left:312px;top:431px;width:50px;height:2.5px;background:#e6e6e6;"></div>
<div style="left:315px;top:437px;width:44px;height:21px;background:#5d5e60;"></div>
<div style="left:312.0px;width:50px;text-align:center;top:435.0px;height:15.0px;line-height:15.0px;font-size:7.5px;color:#dedede;font-weight:normal;white-space:nowrap;">Input L+R</div>
<div style="left:312.0px;width:50px;text-align:center;top:445.5px;height:15.0px;line-height:15.0px;font-size:7.5px;color:#dedede;font-weight:normal;white-space:nowrap;">Main</div>
<div style="left:315px;top:458px;width:44px;height:11px;background:#2f3032;"></div>
<div style="left:336px;top:459.5px;width:8.5px;height:8px;background:#2f6d9c;"></div>
<div style="left:342.5px;top:459.5px;width:2px;height:8px;background:#5ab0ee;"></div>
<div style="left:314.0px;width:24px;text-align:center;top:467.5px;height:15.0px;line-height:15.0px;font-size:7.5px;color:#e4e4e4;font-weight:normal;white-space:nowrap;">+1.4</div>
<div style="left:336.0px;width:24px;text-align:center;top:467.5px;height:15.0px;line-height:15.0px;font-size:7.5px;color:#e4e4e4;font-weight:normal;white-space:nowrap;">R32</div>
<div style="left:315px;top:483.5px;width:44px;height:26px;background:#39393b;"></div>
<div style="left:315.5px;top:484px;width:43px;height:25px;background:#454648;"></div>
<div style="left:337px;top:484px;width:0.8px;height:25px;background:#353638;"></div>
<div style="left:316px;top:496.5px;width:42px;height:0.8px;background:#353638;"></div>
<div style="left:316.5px;width:20px;text-align:center;top:481.5px;height:18px;line-height:18px;font-size:9px;color:#d0d0d0;font-weight:normal;white-space:nowrap;">M</div>
<div style="left:338.0px;width:20px;text-align:center;top:481.5px;height:18px;line-height:18px;font-size:9px;color:#d0d0d0;font-weight:normal;white-space:nowrap;">S</div>
<svg style="position:absolute;left:312px;top:497px" width="50" height="12" viewBox="0 0 50 12"><circle cx="14.5" cy="6" r="2.8" fill="#dcdcdc"/><path d="M34,3 L36,3 L37.5,1.5 L37.5,10.5 L36,9 L34,9 Z" fill="#dcdcdc"/><path d="M39,3.5 Q40.5,6 39,8.5" stroke="#dcdcdc" fill="none" stroke-width="0.9"/></svg>
<svg style="position:absolute;left:348.5px;top:514.5px" width="8" height="7" viewBox="0 0 8 7"><rect x="0.5" y="0.5" width="7" height="6" fill="none" stroke="#5a5b5d" stroke-width="1"/><path d="M0.5,2.5 L7.5,2.5 M0.5,4.5 L7.5,4.5" stroke="#5a5b5d" stroke-width="0.8"/></svg>
<div style="left:322px;top:514.5px;width:8px;height:79px;background:#252628;"></div>
<div style="left:322px;top:514.5px;width:8px;height:8px;background:#353638;"></div>
<div style="left:308.5px;width:12px;text-align:right;top:519.2px;height:9.6px;line-height:9.6px;font-size:4.8px;color:#c4c4c4;font-weight:normal;white-space:nowrap;">12</div>
<div style="left:308.5px;width:12px;text-align:right;top:524.2px;height:9.6px;line-height:9.6px;font-size:4.8px;color:#c4c4c4;font-weight:normal;white-space:nowrap;">6</div>
<div style="left:308.5px;width:12px;text-align:right;top:535.2px;height:9.6px;line-height:9.6px;font-size:4.8px;color:#c4c4c4;font-weight:normal;white-space:nowrap;">0</div>
<div style="left:308.5px;width:12px;text-align:right;top:543.2px;height:9.6px;line-height:9.6px;font-size:4.8px;color:#c4c4c4;font-weight:normal;white-space:nowrap;">-6</div>
<div style="left:308.5px;width:12px;text-align:right;top:552.2px;height:9.6px;line-height:9.6px;font-size:4.8px;color:#c4c4c4;font-weight:normal;white-space:nowrap;">-12</div>
<div style="left:308.5px;width:12px;text-align:right;top:562.2px;height:9.6px;line-height:9.6px;font-size:4.8px;color:#c4c4c4;font-weight:normal;white-space:nowrap;">-24</div>
<div style="left:308.5px;width:12px;text-align:right;top:571.2px;height:9.6px;line-height:9.6px;font-size:4.8px;color:#c4c4c4;font-weight:normal;white-space:nowrap;">-36</div>
<div style="left:308.5px;width:12px;text-align:right;top:577.7px;height:9.6px;line-height:9.6px;font-size:4.8px;color:#c4c4c4;font-weight:normal;white-space:nowrap;">-48</div>
<div style="left:323px;top:540px;width:6px;height:0.8px;background:#9a9a9a;"></div>
<div style="left:322.8px;top:561px;width:2.8px;height:32px;background:#3a80b3;"></div>
<div style="left:326.6px;top:558px;width:2.8px;height:35px;background:#3a80b3;"></div>
<div style="left:323.4px;top:561px;width:1px;height:32px;background:#5599c8;"></div>
<div style="left:327.2px;top:558px;width:1px;height:35px;background:#5599c8;"></div>
<div style="left:332px;top:547px;width:10px;height:46px;background:#5e5f61;"></div>
<div style="left:336.5px;top:544px;width:1px;height:39px;background:#1a1a1a;"></div>
<svg style="position:absolute;left:331.5px;top:524px" width="11" height="24" viewBox="0 0 11 24"><rect x="0.5" y="0.5" width="10" height="23" rx="1" fill="#d8d8d8" stroke="#2a2a2a" stroke-width="1"/><rect x="1.5" y="1.5" width="8" height="3" fill="#9a9a9a"/><rect x="1.5" y="4.5" width="8" height="6.5" fill="#f2f2f2"/><rect x="1.5" y="11" width="8" height="1.2" fill="#777"/><rect x="1.5" y="12.2" width="8" height="7.5" fill="#f0f0f0"/><rect x="1.5" y="19.7" width="8" height="3" fill="#aaa"/></svg>
<svg style="position:absolute;left:348px;top:565px" width="9" height="9" viewBox="0 0 9 9"><rect x="0.5" y="1" width="3.5" height="7" fill="#c8c8c8"/><rect x="4.8" y="1" width="3.5" height="7" fill="#a8a8a8"/></svg>
<svg style="position:absolute;left:347px;top:580px" width="11" height="11" viewBox="0 0 11 11"><circle cx="5.5" cy="5.5" r="4.5" fill="#d8d8d8"/><path d="M5.5,5.5 L2.5,2.5" stroke="#333" stroke-width="1.3"/></svg>
<div style="left:315.0px;width:12px;text-align:center;top:593px;height:16px;line-height:16px;font-size:8px;color:#e8e8e8;font-weight:bold;white-space:nowrap;">5</div>
<svg style="position:absolute;left:349px;top:597px" width="10" height="8" viewBox="0 0 10 8"><path d="M0.5,7 L2,3 L3,6 L4.5,0.5 L6,6 L7,3 L8.5,7" fill="none" stroke="#e0e0e0" stroke-width="1.1"/></svg>
<div style="left:315px;top:608px;width:44px;height:10px;background:#3a3b3d;"></div>
<div style="left:312.0px;width:50px;text-align:center;top:606px;height:14px;line-height:14px;font-size:7px;color:#8a8a8a;font-weight:normal;white-space:nowrap;">Auto: Off</div>
<div style="left:312px;top:622px;width:50px;height:9px;background:#d9d9d9;"></div>
<div style="left:277.0px;width:120px;text-align:center;top:619.0px;height:15.0px;line-height:15.0px;font-size:7.5px;color:#1a1a1a;font-weight:normal;white-space:nowrap;">Mels Hat</div>
<div style="left:364px;top:431px;width:50px;height:200px;background:#294f48;"></div>
<div style="left:364px;top:431px;width:50px;height:2.5px;background:#22997c;"></div>
<div style="left:367px;top:437px;width:44px;height:21px;background:#3d5e56;"></div>
<div style="left:364.0px;width:50px;text-align:center;top:435.0px;height:15.0px;line-height:15.0px;font-size:7.5px;color:#dedede;font-weight:normal;white-space:nowrap;">Input L+R</div>
<div style="left:364.0px;width:50px;text-align:center;top:445.5px;height:15.0px;line-height:15.0px;font-size:7.5px;color:#dedede;font-weight:normal;white-space:nowrap;">Main</div>
<div style="left:367px;top:458px;width:44px;height:11px;background:#253733;"></div>
<div style="left:381px;top:459.5px;width:8px;height:8px;background:#2f6d9c;"></div>
<div style="left:381px;top:459.5px;width:2px;height:8px;background:#5ab0ee;"></div>
<div style="left:366.0px;width:24px;text-align:center;top:467.5px;height:15.0px;line-height:15.0px;font-size:7.5px;color:#e4e4e4;font-weight:normal;white-space:nowrap;">0dB</div>
<div style="left:388.0px;width:24px;text-align:center;top:467.5px;height:15.0px;line-height:15.0px;font-size:7.5px;color:#e4e4e4;font-weight:normal;white-space:nowrap;">L29</div>
<div style="left:367px;top:483.5px;width:44px;height:26px;background:#244a3f;"></div>
<div style="left:367.5px;top:484px;width:43px;height:25px;background:#2f5d50;"></div>
<div style="left:389px;top:484px;width:0.8px;height:25px;background:#353638;"></div>
<div style="left:368px;top:496.5px;width:42px;height:0.8px;background:#353638;"></div>
<div style="left:368.5px;width:20px;text-align:center;top:481.5px;height:18px;line-height:18px;font-size:9px;color:#d0d0d0;font-weight:normal;white-space:nowrap;">M</div>
<div style="left:390.0px;width:20px;text-align:center;top:481.5px;height:18px;line-height:18px;font-size:9px;color:#d0d0d0;font-weight:normal;white-space:nowrap;">S</div>
<svg style="position:absolute;left:364px;top:497px" width="50" height="12" viewBox="0 0 50 12"><circle cx="14.5" cy="6" r="2.8" fill="#dcdcdc"/><path d="M34,3 L36,3 L37.5,1.5 L37.5,10.5 L36,9 L34,9 Z" fill="#dcdcdc"/><path d="M39,3.5 Q40.5,6 39,8.5" stroke="#dcdcdc" fill="none" stroke-width="0.9"/></svg>
<div style="left:401px;top:515px;width:7px;height:6px;background:#4a5a55;"></div>
<div style="left:374px;top:514.5px;width:8px;height:79px;background:#252628;"></div>
<div style="left:374px;top:514.5px;width:8px;height:8px;background:#353638;"></div>
<div style="left:360.5px;width:12px;text-align:right;top:519.2px;height:9.6px;line-height:9.6px;font-size:4.8px;color:#c4c4c4;font-weight:normal;white-space:nowrap;">12</div>
<div style="left:360.5px;width:12px;text-align:right;top:524.2px;height:9.6px;line-height:9.6px;font-size:4.8px;color:#c4c4c4;font-weight:normal;white-space:nowrap;">6</div>
<div style="left:360.5px;width:12px;text-align:right;top:535.2px;height:9.6px;line-height:9.6px;font-size:4.8px;color:#c4c4c4;font-weight:normal;white-space:nowrap;">0</div>
<div style="left:360.5px;width:12px;text-align:right;top:543.2px;height:9.6px;line-height:9.6px;font-size:4.8px;color:#c4c4c4;font-weight:normal;white-space:nowrap;">-6</div>
<div style="left:360.5px;width:12px;text-align:right;top:552.2px;height:9.6px;line-height:9.6px;font-size:4.8px;color:#c4c4c4;font-weight:normal;white-space:nowrap;">-12</div>
<div style="left:360.5px;width:12px;text-align:right;top:562.2px;height:9.6px;line-height:9.6px;font-size:4.8px;color:#c4c4c4;font-weight:normal;white-space:nowrap;">-24</div>
<div style="left:360.5px;width:12px;text-align:right;top:571.2px;height:9.6px;line-height:9.6px;font-size:4.8px;color:#c4c4c4;font-weight:normal;white-space:nowrap;">-36</div>
<div style="left:360.5px;width:12px;text-align:right;top:577.7px;height:9.6px;line-height:9.6px;font-size:4.8px;color:#c4c4c4;font-weight:normal;white-space:nowrap;">-48</div>
<div style="left:375px;top:540px;width:6px;height:0.8px;background:#9a9a9a;"></div>
<div style="left:374.8px;top:556px;width:2.8px;height:37px;background:#3a80b3;"></div>
<div style="left:378.6px;top:556px;width:2.8px;height:37px;background:#3a80b3;"></div>
<div style="left:375.4px;top:556px;width:1px;height:37px;background:#5599c8;"></div>
<div style="left:379.2px;top:556px;width:1px;height:37px;background:#5599c8;"></div>
<div style="left:384px;top:550px;width:10px;height:43px;background:#4a7b6c;"></div>
<div style="left:388.5px;top:547px;width:1px;height:36px;background:#1a1a1a;"></div>
<svg style="position:absolute;left:383.5px;top:527px" width="11" height="24" viewBox="0 0 11 24"><rect x="0.5" y="0.5" width="10" height="23" rx="1" fill="#d8d8d8" stroke="#2a2a2a" stroke-width="1"/><rect x="1.5" y="1.5" width="8" height="3" fill="#9a9a9a"/><rect x="1.5" y="4.5" width="8" height="6.5" fill="#f2f2f2"/><rect x="1.5" y="11" width="8" height="1.2" fill="#777"/><rect x="1.5" y="12.2" width="8" height="7.5" fill="#f0f0f0"/><rect x="1.5" y="19.7" width="8" height="3" fill="#aaa"/></svg>
<svg style="position:absolute;left:400px;top:565px" width="9" height="9" viewBox="0 0 9 9"><rect x="0.5" y="1" width="3.5" height="7" fill="#c8c8c8"/><rect x="4.8" y="1" width="3.5" height="7" fill="#a8a8a8"/></svg>
<svg style="position:absolute;left:399px;top:580px" width="11" height="11" viewBox="0 0 11 11"><circle cx="5.5" cy="5.5" r="4.5" fill="#d8d8d8"/><path d="M5.5,5.5 L2.5,2.5" stroke="#333" stroke-width="1.3"/></svg>
<div style="left:367.0px;width:12px;text-align:center;top:593px;height:16px;line-height:16px;font-size:8px;color:#e8e8e8;font-weight:bold;white-space:nowrap;">6</div>
<svg style="position:absolute;left:401px;top:597px" width="10" height="8" viewBox="0 0 10 8"><path d="M0.5,7 L2,3 L3,6 L4.5,0.5 L6,6 L7,3 L8.5,7" fill="none" stroke="#e0e0e0" stroke-width="1.1"/></svg>
<div style="left:367px;top:608px;width:44px;height:10px;background:#204539;"></div>
<div style="left:364.0px;width:50px;text-align:center;top:606px;height:14px;line-height:14px;font-size:7px;color:#8a8a8a;font-weight:normal;white-space:nowrap;">Auto: Off</div>
<div style="left:364px;top:622px;width:50px;height:9px;background:#1e9676;"></div>
<div style="left:329.0px;width:120px;text-align:center;top:619.0px;height:15.0px;line-height:15.0px;font-size:7.5px;color:#f4f4f4;font-weight:normal;white-space:nowrap;">Elektric Spark</div>
<div style="left:206px;top:431px;width:2px;height:200px;background:#2e2f31;"></div>
<div style="left:258px;top:431px;width:2px;height:200px;background:#2e2f31;"></div>
<div style="left:310px;top:431px;width:2px;height:200px;background:#2e2f31;"></div>
<div style="left:362px;top:431px;width:2px;height:200px;background:#2e2f31;"></div>
<div style="left:414px;top:431px;width:2px;height:200px;background:#2e2f31;"></div>
<div style="left:364px;top:431px;width:1px;height:200px;background:#2f7a66;"></div>
<div style="left:413px;top:431px;width:1px;height:200px;background:#2f7a66;"></div>
<svg style="position:absolute;left:40px;top:633px" width="10" height="9" viewBox="0 0 10 9"><polygon points="7,1 7,8 2,4.5" fill="#8a8b8d"/></svg>
<div style="left:1147px;top:431px;width:51px;height:190px;background:#5c5f64;"></div>
<div style="left:1150px;top:436.5px;width:45px;height:11.5px;background:#686b70;"></div>
<div style="left:1147.5px;width:50px;text-align:center;top:445.5px;height:15.0px;line-height:15.0px;font-size:7.5px;color:#ececec;font-weight:normal;white-space:nowrap;">Output 1 + 2</div>
<div style="left:1150px;top:458.5px;width:45px;height:10px;background:#2e3033;"></div>
<div style="left:1150.0px;width:22px;text-align:center;top:456.5px;height:14px;line-height:14px;font-size:7px;color:#4fb3c9;font-weight:normal;white-space:nowrap;">-1.03</div>
<div style="left:1173.0px;width:22px;text-align:center;top:456.5px;height:14px;line-height:14px;font-size:7px;color:#4fb3c9;font-weight:normal;white-space:nowrap;">-1.01</div>
<div style="left:1150.0px;width:22px;text-align:center;top:467.5px;height:15.0px;line-height:15.0px;font-size:7.5px;color:#f0f0f0;font-weight:normal;white-space:nowrap;">0dB</div>
<div style="left:1151px;top:483px;width:43px;height:26px;background:#4f5256;"></div>
<div style="left:1152px;top:496px;width:16px;height:12px;background:#3e8fb3;"></div>
<div style="left:1152.0px;width:20px;text-align:center;top:481px;height:18px;line-height:18px;font-size:9px;color:#e0e0e0;font-weight:normal;white-space:nowrap;">M</div>
<div style="left:1173.0px;width:20px;text-align:center;top:481px;height:18px;line-height:18px;font-size:9px;color:#e0e0e0;font-weight:normal;white-space:nowrap;">S</div>
<svg style="position:absolute;left:1152px;top:496px" width="42" height="12" viewBox="0 0 42 12"><polygon points="8,2.5 12,9.5 4,9.5" fill="#f0f0f0"/><path d="M5,8 L11,8" stroke="#3e8fb3" stroke-width="0.6"/><rect x="20" y="2" width="3" height="5" rx="1.5" fill="#eee"/><path d="M21.5,7 L21.5,10" stroke="#eee" stroke-width="1"/><circle cx="32" cy="6" r="2.8" fill="#eee"/><circle cx="36" cy="6" r="2.6" fill="none" stroke="#eee" stroke-width="1"/></svg>
<div style="left:1153px;top:514px;width:8px;height:7px;background:#4a4d51;"></div>
<div style="left:1153px;top:514px;width:8px;height:1.5px;background:#58b4e0;"></div>
<div style="left:1167px;top:550px;width:11px;height:44px;background:#767980;"></div>
<div style="left:1172px;top:530px;width:1px;height:54px;background:#1a1a1a;"></div>
<svg style="position:absolute;left:1166px;top:527px" width="13" height="24" viewBox="0 0 13 24"><rect x="0.5" y="0.5" width="12" height="23" rx="1" fill="#3e9ab8" stroke="#22505e" stroke-width="1"/><rect x="1.5" y="11" width="10" height="1" fill="#2a6a80"/><rect x="1.5" y="2" width="10" height="3" fill="#5ab2cc"/></svg>
<div style="left:1179px;top:522px;width:8px;height:71px;background:#2a2c2f;"></div>
<div style="left:1180px;top:535px;width:3px;height:58px;background:#3ea0b8;"></div>
<div style="left:1184px;top:535px;width:3px;height:58px;background:#3ea0b8;"></div>
<div style="left:1180px;top:522px;width:7px;height:8px;background:#3c3e41;"></div>
<div style="left:1180px;top:549px;width:3px;height:1.5px;background:#ffffff;"></div>
<div style="left:1184px;top:548px;width:3px;height:1.5px;background:#ffffff;"></div>
<div style="left:1184.0px;width:14px;text-align:center;top:520px;height:10px;line-height:10px;font-size:5px;color:#d8d8d8;font-weight:normal;white-space:nowrap;">6</div>
<div style="left:1184.0px;width:14px;text-align:center;top:526px;height:10px;line-height:10px;font-size:5px;color:#d8d8d8;font-weight:normal;white-space:nowrap;">0</div>
<div style="left:1184.0px;width:14px;text-align:center;top:532px;height:10px;line-height:10px;font-size:5px;color:#d8d8d8;font-weight:normal;white-space:nowrap;">-6</div>
<div style="left:1184.0px;width:14px;text-align:center;top:539px;height:10px;line-height:10px;font-size:5px;color:#d8d8d8;font-weight:normal;white-space:nowrap;">-12</div>
<div style="left:1184.0px;width:14px;text-align:center;top:551px;height:10px;line-height:10px;font-size:5px;color:#d8d8d8;font-weight:normal;white-space:nowrap;">-24</div>
<div style="left:1184.0px;width:14px;text-align:center;top:563px;height:10px;line-height:10px;font-size:5px;color:#d8d8d8;font-weight:normal;white-space:nowrap;">-36</div>
<div style="left:1184.0px;width:14px;text-align:center;top:575px;height:10px;line-height:10px;font-size:5px;color:#d8d8d8;font-weight:normal;white-space:nowrap;">-48</div>
<div style="left:1184.0px;width:14px;text-align:center;top:587px;height:10px;line-height:10px;font-size:5px;color:#d8d8d8;font-weight:normal;white-space:nowrap;">-60</div>
<svg style="position:absolute;left:1154px;top:565px" width="9" height="9" viewBox="0 0 9 9"><rect x="0.5" y="1" width="3.5" height="7" fill="#d0d0d0"/><rect x="4.8" y="1" width="3.5" height="7" fill="#a8a8a8"/></svg>
<svg style="position:absolute;left:1154px;top:580px" width="11" height="11" viewBox="0 0 11 11"><circle cx="5.5" cy="5.5" r="4.5" fill="#e0e0e0"/><path d="M5.5,5.5 L2.5,2.5" stroke="#444" stroke-width="1.3"/></svg>
<div style="left:1151px;top:608px;width:44px;height:10px;background:#3a3c3f;"></div>
<div style="left:1148.0px;width:50px;text-align:center;top:606px;height:14px;line-height:14px;font-size:7px;color:#8d8f92;font-weight:normal;white-space:nowrap;">Auto: Off</div>
<div style="left:1147px;top:621px;width:51px;height:15px;background:#2c2d30;"></div>
<div style="left:1147.5px;width:50px;text-align:center;top:619.0px;height:15.0px;line-height:15.0px;font-size:7.5px;color:#f0f0f0;font-weight:normal;white-space:nowrap;">Main</div>
<svg style="position:absolute;left:1136px;top:632px" width="8" height="9" viewBox="0 0 8 9"><polygon points="1,1 6,4.5 1,8" fill="#8a8b8d"/></svg>
<div style="left:1144px;top:431px;width:1px;height:210px;background:#242527;"></div>
<div style="left:0px;top:642px;width:1200px;height:2px;background:#1d1e20;"></div>
<div style="left:0px;top:644px;width:1200px;height:27px;background:#575b63;"></div>
<svg style="position:absolute;left:100px;top:644px" width="900" height="27" viewBox="0 0 900 27"><polygon points="2,0 890,0 883,27 8,27" fill="#222223"/></svg>
<div style="left:1125px;top:644px;width:34px;height:27px;background:#3b8fd0;"></div>
<div style="left:1089px;top:644px;width:1px;height:27px;background:#505358;"></div>
<div style="left:0px;top:671px;width:1200px;height:4px;background:#3a3c40;"></div>
<svg style="position:absolute;left:118px;top:645px" width="22" height="14" viewBox="0 0 22 14"><circle cx="11" cy="7" r="4.5" fill="none" stroke="#6a6c70" stroke-width="1.2"/><circle cx="9" cy="6" r="0.7" fill="#777"/><circle cx="13" cy="6" r="0.7" fill="#777"/><circle cx="11" cy="8.5" r="0.7" fill="#777"/><polygon points="3,5 3,9 1.5,7" fill="#555"/><polygon points="19,5 19,9 20.5,7" fill="#555"/></svg>
<div style="left:114.5px;width:30px;text-align:center;top:657px;height:14px;line-height:14px;font-size:7px;color:#7d7e80;font-weight:normal;white-space:nowrap;">MIDI</div>
<div style="left:144px;top:649.5px;width:40px;height:2.5px;background:#37383b;"></div>
<div style="left:144px;top:649px;width:3px;height:3.5px;background:#5ab8e8;"></div>
<div style="left:144px;top:655px;width:40px;height:2px;background:#37383b;"></div>
<div style="left:140.0px;width:50px;text-align:center;top:657px;height:14px;line-height:14px;font-size:7px;color:#7d7e80;font-weight:normal;white-space:nowrap;">Performance</div>
<svg style="position:absolute;left:196px;top:650px" width="14" height="14" viewBox="0 0 14 14"><circle cx="13.00" cy="7.00" r="0.9" fill="#d8d8d8"/><circle cx="12.20" cy="10.00" r="0.9" fill="#d8d8d8"/><circle cx="10.00" cy="12.20" r="0.9" fill="#d8d8d8"/><circle cx="7.00" cy="13.00" r="0.9" fill="#d8d8d8"/><circle cx="4.00" cy="12.20" r="0.9" fill="#d8d8d8"/><circle cx="1.80" cy="10.00" r="0.9" fill="#d8d8d8"/><circle cx="1.00" cy="7.00" r="0.9" fill="#d8d8d8"/><circle cx="1.80" cy="4.00" r="0.9" fill="#d8d8d8"/><circle cx="4.00" cy="1.80" r="0.9" fill="#d8d8d8"/><circle cx="7.00" cy="1.00" r="0.9" fill="#d8d8d8"/><circle cx="10.00" cy="1.80" r="0.9" fill="#d8d8d8"/><circle cx="12.20" cy="4.00" r="0.9" fill="#d8d8d8"/></svg>
<div style="left:219px;top:644.5px;height:17.0px;line-height:17.0px;font-size:8.5px;color:#ececec;font-weight:normal;white-space:nowrap;">48.0 kHz</div>
<div style="left:219px;top:656.0px;height:15.0px;line-height:15.0px;font-size:7.5px;color:#ececec;font-weight:normal;white-space:nowrap;">64.9 ms</div>
<div style="left:261px;top:644.5px;height:17.0px;line-height:17.0px;font-size:8.5px;color:#ececec;font-weight:normal;white-space:nowrap;">8:01 days</div>
<div style="left:254.0px;width:50px;text-align:center;top:656.5px;height:14px;line-height:14px;font-size:7px;color:#7d7e80;font-weight:normal;white-space:nowrap;">Record Max</div>
<div style="left:315px;top:644.5px;height:17.0px;line-height:17.0px;font-size:8.5px;color:#ececec;font-weight:normal;white-space:nowrap;">00:00:25.428</div>
<div style="left:313.0px;width:50px;text-align:center;top:656.5px;height:14px;line-height:14px;font-size:7px;color:#7d7e80;font-weight:normal;white-space:nowrap;">Seconds</div>
<div style="left:383px;top:642px;height:24px;line-height:24px;font-size:12px;color:#ececec;font-weight:bold;white-space:nowrap;letter-spacing:0.25px;">00012.04.02.87</div>
<div style="left:410.0px;width:30px;text-align:center;top:657.5px;height:12px;line-height:12px;font-size:6px;color:#7d7e80;font-weight:normal;white-space:nowrap;">Bars</div>
<svg style="position:absolute;left:478px;top:648px" width="160" height="20" viewBox="0 0 160 20"><polygon points="9,5 9,13 3,9" fill="#d0d0d0"/><polygon points="20,5 20,13 15,9" fill="#d0d0d0"/><polygon points="26,5 26,13 21,9" fill="#d0d0d0"/><polygon points="35,5 35,13 40,9" fill="#d0d0d0"/><polygon points="41,5 41,13 46,9" fill="#d0d0d0"/><polygon points="50,5 50,13 56,9" fill="#d0d0d0"/><rect x="66" y="5" width="1.3" height="8" fill="#d0d0d0"/><polygon points="74,5 74,13 68,9" fill="#d0d0d0"/><rect x="87" y="3" width="13" height="13" fill="#c8c8c8"/><polygon points="111,3 111,16 123,9.5" fill="#66d83a"/><circle cx="138" cy="9.5" r="6.5" fill="#c8c8c8"/></svg>
<svg style="position:absolute;left:630px;top:647px" width="26" height="18" viewBox="0 0 26 18"><path d="M9,14 L6,14 Q2,14 2,9 Q2,4 6,4 L19,4 Q23,4 23,9 Q23,14 19,14 L14,14" fill="none" stroke="#d0d0d0" stroke-width="1.5"/><polygon points="10,11 14,14 10,17" fill="#d0d0d0"/></svg>
<div style="left:662.0px;width:10px;text-align:center;top:645px;height:16px;line-height:16px;font-size:8px;color:#5b8db3;font-weight:bold;white-space:nowrap;">L</div>
<div style="left:662.0px;width:10px;text-align:center;top:655px;height:16px;line-height:16px;font-size:8px;color:#5b8db3;font-weight:bold;white-space:nowrap;">R</div>
<div style="left:675px;top:644.5px;height:17.0px;line-height:17.0px;font-size:8.5px;color:#ececec;font-weight:normal;white-space:nowrap;">00001.01.01.00</div>
<div style="left:675px;top:654.5px;height:17.0px;line-height:17.0px;font-size:8.5px;color:#ececec;font-weight:normal;white-space:nowrap;">00001.01.01.00</div>
<svg style="position:absolute;left:743px;top:646px" width="30" height="22" viewBox="0 0 30 22"><path d="M2,5 L7,5 L9,8 L12,8" stroke="#aaa" fill="none" stroke-width="1"/><path d="M16,3 L16,9 M17,6 L25,6" stroke="#aaa" stroke-width="1.2"/><polygon points="19,3.5 23,6 19,8.5" fill="#aaa"/><circle cx="7" cy="16" r="2.5" fill="none" stroke="#aaa" stroke-width="1.4"/><path d="M15,16 L25,16 M15,13 L15,19 M25,13 L25,19" stroke="#aaa" stroke-width="1.2"/></svg>
<svg style="position:absolute;left:774px;top:646px" width="42" height="12" viewBox="0 0 42 12"><circle cx="7" cy="6" r="3.3" fill="#aaa"/><circle cx="19" cy="4" r="2.5" fill="#aaa"/><circle cx="17.9" cy="2.9" r="1.1" fill="#232427"/><path d="M19.5,4.5 L23.5,9" stroke="#aaa" stroke-width="1.6"/><polygon points="34,2 38,10 30,10" fill="#aaa"/><path d="M34,10 L37,4" stroke="#232427" stroke-width="0.8"/></svg>
<div style="left:770.0px;width:50px;text-align:center;top:656.5px;height:14px;line-height:14px;font-size:7px;color:#7d7e80;font-weight:normal;white-space:nowrap;">Metronome</div>
<div style="left:817.0px;width:30px;text-align:center;top:644.0px;height:17.0px;line-height:17.0px;font-size:8.5px;color:#ececec;font-weight:normal;white-space:nowrap;">4 / 4</div>
<div style="left:818.0px;width:30px;text-align:center;top:656.5px;height:14px;line-height:14px;font-size:7px;color:#7d7e80;font-weight:normal;white-space:nowrap;">Timing</div>
<div style="left:851.0px;width:20px;text-align:center;top:644.0px;height:17.0px;line-height:17.0px;font-size:8.5px;color:#ececec;font-weight:normal;white-space:nowrap;">F</div>
<div style="left:846.0px;width:30px;text-align:center;top:656.5px;height:14px;line-height:14px;font-size:7px;color:#7d7e80;font-weight:normal;white-space:nowrap;">Key</div>
<div style="left:870.0px;width:40px;text-align:center;top:644.0px;height:17.0px;line-height:17.0px;font-size:8.5px;color:#ececec;font-weight:normal;white-space:nowrap;">112.00</div>
<div style="left:870.0px;width:40px;text-align:center;top:656.5px;height:14px;line-height:14px;font-size:7px;color:#7d7e80;font-weight:normal;white-space:nowrap;">Tempo</div>
<div style="left:914px;top:649px;width:40px;height:4.5px;background:#3a3b3e;"></div>
<div style="left:914px;top:649px;width:32px;height:4.5px;background:#4fa6dc;"></div>
<div style="left:914px;top:660px;width:40px;height:4.5px;background:#3a3b3e;"></div>
<div style="left:914px;top:660px;width:30px;height:4.5px;background:#3a6d8f;"></div>
<div style="left:943px;top:659px;width:1.5px;height:6px;background:#dddddd;"></div>
<svg style="position:absolute;left:958px;top:658px" width="14" height="10" viewBox="0 0 14 10"><circle cx="4.5" cy="5" r="3.6" fill="#56b8e6"/><circle cx="9.5" cy="5" r="3.4" fill="#232427" stroke="#56b8e6" stroke-width="1.4"/></svg>
<div style="left:1088.5px;width:36px;text-align:center;top:651px;height:16px;line-height:16px;font-size:8px;color:#ececec;font-weight:normal;white-space:nowrap;">Edit</div>
<div style="left:1125.0px;width:34px;text-align:center;top:651px;height:16px;line-height:16px;font-size:8px;color:#ececec;font-weight:normal;white-space:nowrap;">Mix</div>
<div style="left:1159.5px;width:40px;text-align:center;top:651px;height:16px;line-height:16px;font-size:8px;color:#ececec;font-weight:normal;white-space:nowrap;">Browse</div>
</div></body></html>
